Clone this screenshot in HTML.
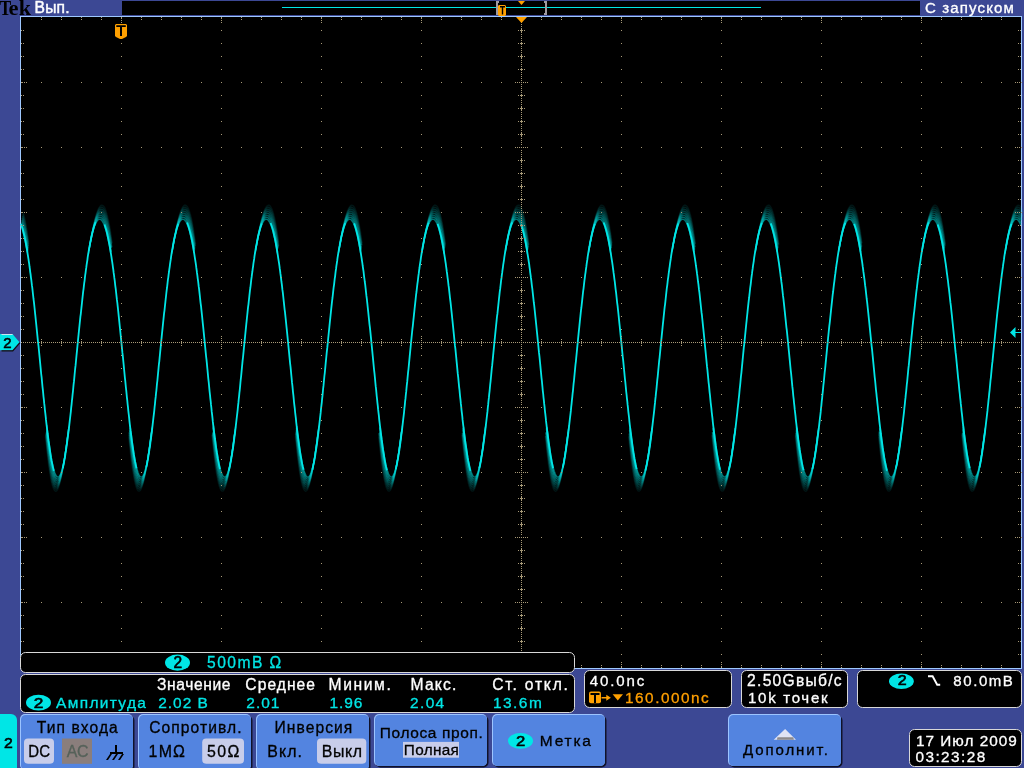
<!DOCTYPE html>
<html><head><meta charset="utf-8"><style>
html,body{margin:0;padding:0;background:#3c4894;width:1024px;height:768px;overflow:hidden;}
svg{position:absolute;left:0;top:0;display:block;}
</style></head><body>
<svg width="1024" height="768" viewBox="0 0 1024 768" shape-rendering="auto">
<rect x='122' y='1' width='798' height='14' fill='#000'/>
<rect x='282' y='7' width='479' height='1' fill='#00e6e6'/>
<path d='M496 1h3v2h-1v10h1v2h-3z' fill='#a09aa0'/>
<path d='M545 1h2v14h-3v-2h1v-10h-1v-2h1z' fill='#a09aa0'/>
<path d='M499 5h6l1 1v9l-1 1h-6l-1-1v-9z' fill='#ffa000'/>
<path d='M500 6h5v1.5h-1.8v7h-1.4v-7h-1.8z' fill='#000'/>
<path d='M518 1h7l-3.5 4z' fill='#ffa000'/>
<rect x='20' y='16' width='1002' height='653' fill='#9ec8ff'/>
<rect x='21' y='17' width='1000' height='651' fill='#000'/>
<g fill='none' stroke='#00e6e6' stroke-opacity='0.5' stroke-width='1.4'><polyline points='21.0 225.3 21.9 227.8 22.6 230.2 23.2 232.6 23.9 235.0 24.4 237.5 24.9 239.9 25.4 242.4 25.9 244.9 26.4 247.4 26.8 249.9 27.3 252.4'/><polyline points='46.7 425.0 47.1 428.4 47.6 431.8 48.0 435.2 48.4 438.7 48.9 442.1 49.4 445.5 49.9 449.0 50.4 452.4 51.0 455.8 51.6 459.3 52.2 462.6 53.0 466.0 53.8 469.3 54.7 472.4 55.7 474.9 56.7 476.4 57.7 477.1 58.7 476.9 59.7 475.8 60.7 473.8 61.7 470.9 62.7 467.1 63.5 463.3 64.3 459.6 64.9 455.8 65.5 452.2 66.1 448.5 66.6 444.9 67.1 441.3 67.6 437.7 68.1 434.2 68.5 430.6 68.9 427.1'/><polyline points='88.4 253.9 88.8 251.5 89.2 249.0 89.7 246.6 90.1 244.2 90.6 241.8 91.1 239.5 91.6 237.2 92.1 234.9 92.7 232.6 93.3 230.4 93.9 228.2 94.6 226.1 95.5 224.0 96.4 222.0 97.4 220.5 98.4 219.6 99.4 219.2 100.4 219.3 101.4 220.1 102.4 221.3 103.4 223.2 104.4 225.6 105.2 228.0 106.0 230.4 106.6 232.8 107.2 235.3 107.8 237.7 108.3 240.2 108.8 242.6 109.3 245.1 109.7 247.6 110.2 250.1 110.6 252.6'/><polyline points='130.1 425.3 130.5 428.7 130.9 432.2 131.4 435.6 131.8 439.0 132.3 442.4 132.8 445.9 133.3 449.3 133.8 452.8 134.4 456.2 135.0 459.6 135.6 463.0 136.3 466.3 137.2 469.6 138.1 472.7 139.1 475.1 140.1 476.6 141.1 477.1 142.1 476.8 143.1 475.6 144.1 473.5 145.1 470.5 146.1 466.7 147.0 462.9 147.7 459.1 148.3 455.4 148.9 451.8 149.5 448.1 150.0 444.5 150.5 440.9 151.0 437.3 151.4 433.8 151.9 430.3 152.3 426.8'/><polyline points='171.8 253.7 172.2 251.2 172.6 248.8 173.0 246.3 173.5 244.0 174.0 241.6 174.4 239.2 175.0 236.9 175.5 234.6 176.1 232.4 176.7 230.1 177.3 227.9 178.1 225.8 178.9 223.8 179.8 221.8 180.8 220.4 181.8 219.5 182.8 219.2 183.8 219.4 184.8 220.2 185.8 221.5 186.8 223.4 187.8 225.9 188.7 228.3 189.4 230.7 190.0 233.2 190.6 235.6 191.2 238.0 191.7 240.5 192.2 242.9 192.7 245.4 193.1 247.9 193.6 250.4 194.0 253.0'/><polyline points='213.5 425.8 213.9 429.2 214.3 432.6 214.7 436.0 215.2 439.4 215.7 442.9 216.1 446.3 216.6 449.8 217.2 453.2 217.8 456.6 218.4 460.0 219.0 463.4 219.8 466.7 220.6 470.0 221.6 473.0 222.6 475.3 223.6 476.7 224.6 477.2 225.6 476.7 226.6 475.4 227.6 473.2 228.6 470.0 229.6 466.2 230.4 462.4 231.1 458.6 231.7 454.9 232.3 451.3 232.9 447.6 233.4 444.0 233.9 440.4 234.4 436.9 234.8 433.3 235.2 429.8 235.7 426.3'/><polyline points='255.2 253.3 255.6 250.9 256.0 248.4 256.4 246.0 256.9 243.6 257.3 241.3 257.8 238.9 258.3 236.6 258.9 234.3 259.5 232.1 260.1 229.8 260.7 227.7 261.5 225.5 262.3 223.5 263.3 221.6 264.3 220.2 265.3 219.4 266.3 219.2 267.3 219.5 268.3 220.3 269.3 221.8 270.3 223.7 271.3 226.2 272.1 228.6 272.8 231.1 273.4 233.5 274.0 235.9 274.6 238.4 275.1 240.8 275.6 243.3 276.0 245.8 276.5 248.3 276.9 250.8 277.4 253.3'/><polyline points='296.8 426.2 297.3 429.6 297.7 433.1 298.1 436.5 298.6 439.9 299.0 443.3 299.5 446.8 300.0 450.2 300.6 453.7 301.2 457.1 301.8 460.5 302.4 463.9 303.2 467.2 304.0 470.4 305.0 473.4 306.0 475.6 307.0 476.8 308.0 477.2 309.0 476.6 310.0 475.1 311.0 472.8 312.0 469.5 313.0 465.7 313.8 461.9 314.5 458.2 315.1 454.5 315.7 450.8 316.3 447.2 316.8 443.5 317.3 440.0 317.7 436.4 318.2 432.9 318.6 429.3 319.0 425.8'/><polyline points='338.5 253.0 338.9 250.5 339.4 248.1 339.8 245.7 340.3 243.3 340.7 241.0 341.2 238.6 341.7 236.3 342.3 234.0 342.9 231.8 343.5 229.5 344.2 227.4 344.9 225.3 345.8 223.2 346.8 221.4 347.8 220.1 348.8 219.3 349.8 219.2 350.8 219.5 351.8 220.5 352.8 222.0 353.8 224.0 354.7 226.5 355.5 228.9 356.2 231.3 356.8 233.8 357.4 236.2 357.9 238.6 358.5 241.1 359.0 243.6 359.4 246.0 359.9 248.5 360.3 251.1 360.7 253.6'/><polyline points='380.2 426.6 380.6 430.0 381.0 433.4 381.5 436.9 381.9 440.3 382.4 443.7 382.9 447.2 383.4 450.6 384.0 454.0 384.5 457.5 385.2 460.9 385.8 464.2 386.6 467.6 387.5 470.8 388.5 473.7 389.5 475.7 390.5 476.9 391.5 477.1 392.5 476.5 393.5 474.9 394.5 472.5 395.5 469.2 396.4 465.3 397.2 461.5 397.9 457.8 398.5 454.1 399.1 450.4 399.6 446.8 400.1 443.2 400.6 439.6 401.1 436.0 401.6 432.5 402.0 429.0 402.4 425.5'/><polyline points='421.9 252.8 422.3 250.3 422.7 247.9 423.2 245.5 423.6 243.1 424.1 240.7 424.6 238.4 425.1 236.1 425.7 233.8 426.2 231.5 426.9 229.3 427.5 227.2 428.3 225.1 429.2 223.0 430.2 221.2 431.2 220.0 432.2 219.3 433.2 219.2 434.2 219.6 435.2 220.6 436.2 222.1 437.2 224.2 438.1 226.7 438.9 229.1 439.6 231.5 440.2 234.0 440.8 236.4 441.3 238.9 441.8 241.3 442.3 243.8 442.8 246.3 443.2 248.8 443.7 251.3 444.1 253.8'/><polyline points='463.6 426.9 464.0 430.3 464.4 433.7 464.8 437.2 465.3 440.6 465.8 444.0 466.3 447.5 466.8 450.9 467.3 454.3 467.9 457.8 468.5 461.2 469.2 464.5 470.0 467.8 470.9 471.0 471.9 473.9 472.9 475.9 473.9 476.9 474.9 477.1 475.9 476.4 476.9 474.7 477.9 472.2 478.9 468.8 479.8 465.0 480.6 461.2 481.3 457.5 481.9 453.8 482.5 450.1 483.0 446.5 483.5 442.9 484.0 439.3 484.5 435.8 484.9 432.2 485.3 428.7 485.8 425.2'/><polyline points='505.2 252.6 505.7 250.1 506.1 247.7 506.5 245.3 507.0 242.9 507.5 240.5 507.9 238.2 508.5 235.9 509.0 233.6 509.6 231.4 510.2 229.2 510.9 227.0 511.7 224.9 512.6 222.9 513.6 221.1 514.6 219.9 515.6 219.3 516.6 219.2 517.6 219.7 518.6 220.7 519.6 222.3 520.6 224.4 521.5 226.9 522.3 229.3 522.9 231.7 523.6 234.1 524.1 236.6 524.7 239.0 525.2 241.5 525.7 244.0 526.1 246.4 526.6 248.9 527.0 251.5 527.4 254.0'/><polyline points='546.9 427.2 547.3 430.6 547.8 434.0 548.2 437.4 548.7 440.9 549.1 444.3 549.6 447.7 550.1 451.2 550.7 454.6 551.3 458.0 551.9 461.4 552.6 464.8 553.4 468.1 554.3 471.3 555.3 474.1 556.3 476.0 557.3 477.0 558.3 477.1 559.3 476.3 560.3 474.6 561.3 472.0 562.3 468.6 563.2 464.7 563.9 461.0 564.6 457.2 565.2 453.5 565.8 449.9 566.3 446.3 566.9 442.7 567.3 439.1 567.8 435.5 568.3 432.0 568.7 428.5 569.1 425.0'/><polyline points='588.6 252.4 589.0 249.9 589.4 247.5 589.9 245.1 590.3 242.7 590.8 240.4 591.3 238.0 591.8 235.7 592.4 233.5 593.0 231.2 593.6 229.0 594.3 226.8 595.1 224.8 596.0 222.8 597.0 221.0 598.0 219.9 599.0 219.3 600.0 219.2 601.0 219.7 602.0 220.8 603.0 222.4 604.0 224.6 604.9 227.0 605.6 229.5 606.3 231.9 606.9 234.3 607.5 236.7 608.0 239.2 608.5 241.7 609.0 244.1 609.5 246.6 609.9 249.1 610.4 251.6 610.8 254.2'/><polyline points='630.3 427.4 630.7 430.8 631.1 434.2 631.5 437.7 632.0 441.1 632.5 444.5 633.0 448.0 633.5 451.4 634.1 454.8 634.6 458.2 635.3 461.6 636.0 465.0 636.7 468.3 637.6 471.5 638.6 474.2 639.6 476.1 640.6 477.0 641.6 477.1 642.6 476.2 643.6 474.5 644.6 471.8 645.6 468.3 646.5 464.5 647.3 460.7 648.0 457.0 648.6 453.3 649.2 449.7 649.7 446.0 650.2 442.4 650.7 438.8 651.2 435.3 651.6 431.7 652.0 428.2'/><polyline points='671.9 252.2 672.4 249.8 672.8 247.4 673.2 245.0 673.7 242.6 674.2 240.2 674.7 237.9 675.2 235.6 675.7 233.3 676.3 231.1 677.0 228.9 677.7 226.7 678.4 224.6 679.3 222.6 680.3 220.9 681.3 219.8 682.3 219.2 683.3 219.2 684.3 219.8 685.3 220.9 686.3 222.5 687.3 224.7 688.2 227.2 689.0 229.6 689.7 232.0 690.3 234.5 690.8 236.9 691.4 239.3 691.9 241.8 692.4 244.3 692.8 246.8 693.3 249.3 693.7 251.8'/><polyline points='713.6 427.6 714.0 431.0 714.5 434.4 714.9 437.9 715.4 441.3 715.8 444.7 716.3 448.2 716.9 451.6 717.4 455.0 718.0 458.5 718.6 461.9 719.3 465.2 720.1 468.5 721.0 471.7 722.0 474.3 723.0 476.1 724.0 477.0 725.0 477.0 726.0 476.1 727.0 474.3 728.0 471.6 729.0 468.1 729.9 464.2 730.7 460.5 731.3 456.8 732.0 453.1 732.5 449.4 733.1 445.8 733.6 442.2 734.0 438.6 734.5 435.1 735.0 431.5 735.4 428.0'/><polyline points='755.3 252.1 755.7 249.6 756.1 247.2 756.6 244.8 757.0 242.4 757.5 240.1 758.0 237.7 758.5 235.4 759.1 233.2 759.7 230.9 760.3 228.7 761.0 226.6 761.8 224.5 762.7 222.5 763.7 220.9 764.7 219.8 765.7 219.2 766.7 219.2 767.7 219.8 768.7 221.0 769.7 222.6 770.7 224.9 771.6 227.3 772.3 229.8 773.0 232.2 773.6 234.6 774.2 237.1 774.7 239.5 775.2 242.0 775.7 244.4 776.2 246.9 776.6 249.4 777.1 251.9'/><polyline points='797.0 427.8 797.4 431.2 797.8 434.7 798.2 438.1 798.7 441.5 799.2 445.0 799.7 448.4 800.2 451.8 800.8 455.3 801.4 458.7 802.0 462.1 802.7 465.4 803.5 468.7 804.4 471.9 805.4 474.5 806.4 476.2 807.4 477.1 808.4 477.0 809.4 476.0 810.4 474.2 811.4 471.4 812.4 467.8 813.3 464.0 814.0 460.2 814.7 456.5 815.3 452.8 815.9 449.2 816.4 445.6 816.9 442.0 817.4 438.4 817.9 434.8 818.3 431.3 818.7 427.8'/><polyline points='838.6 251.9 839.0 249.5 839.5 247.1 839.9 244.7 840.4 242.3 840.9 239.9 841.4 237.6 841.9 235.3 842.4 233.0 843.0 230.8 843.7 228.6 844.4 226.4 845.2 224.4 846.1 222.4 847.1 220.8 848.1 219.7 849.1 219.2 850.1 219.3 851.1 219.9 852.1 221.0 853.1 222.8 854.1 225.1 855.0 227.5 855.7 229.9 856.4 232.3 857.0 234.8 857.6 237.2 858.1 239.7 858.6 242.1 859.1 244.6 859.5 247.1 860.0 249.6 860.4 252.1'/><polyline points='880.3 428.0 880.7 431.5 881.1 434.9 881.6 438.3 882.1 441.7 882.5 445.2 883.0 448.6 883.6 452.1 884.1 455.5 884.7 458.9 885.4 462.3 886.1 465.6 886.9 468.9 887.8 472.1 888.8 474.6 889.8 476.3 890.8 477.1 891.8 477.0 892.8 475.9 893.8 474.0 894.8 471.2 895.8 467.6 896.7 463.7 897.4 460.0 898.1 456.3 898.7 452.6 899.2 448.9 899.8 445.3 900.3 441.7 900.7 438.1 901.2 434.6 901.7 431.1 902.1 427.5'/><polyline points='922.0 251.8 922.4 249.3 922.8 246.9 923.3 244.5 923.7 242.1 924.2 239.8 924.7 237.4 925.2 235.1 925.8 232.9 926.4 230.6 927.1 228.4 927.8 226.3 928.6 224.2 929.5 222.3 930.5 220.7 931.5 219.7 932.5 219.2 933.5 219.3 934.5 219.9 935.5 221.2 936.5 222.9 937.5 225.2 938.3 227.7 939.1 230.1 939.7 232.5 940.4 235.0 940.9 237.4 941.4 239.8 941.9 242.3 942.4 244.8 942.9 247.3 943.3 249.8 943.8 252.3'/><polyline points='963.2 424.9 963.7 428.3 964.1 431.7 964.5 435.1 964.9 438.6 965.4 442.0 965.9 445.4 966.4 448.9 966.9 452.3 967.5 455.7 968.1 459.2 968.7 462.5 969.5 465.9 970.3 469.2 971.2 472.3 972.2 474.8 973.2 476.4 974.2 477.1 975.2 476.9 976.2 475.8 977.2 473.8 978.2 471.0 979.2 467.2 980.0 463.4 980.8 459.7 981.4 456.0 982.0 452.3 982.6 448.7 983.1 445.0 983.6 441.4 984.1 437.9 984.6 434.3 985.0 430.8 985.4 427.3'/><polyline points='1004.9 254.0 1005.3 251.6 1005.7 249.1 1006.2 246.7 1006.6 244.3 1007.1 241.9 1007.6 239.6 1008.1 237.3 1008.6 235.0 1009.2 232.7 1009.8 230.5 1010.4 228.3 1011.1 226.1 1012.0 224.1 1012.9 222.1 1013.9 220.6 1014.9 219.6 1015.9 219.2 1016.9 219.3 1017.9 220.0 1018.9 221.3 1019.9 223.1 1020.9 225.5'/></g>
<g fill='none' stroke='#00e6e6' stroke-opacity='0.45' stroke-width='1.4'><polyline points='21.3 223.4 22.1 225.9 22.9 228.3 23.5 230.8 24.1 233.2 24.6 235.6 25.1 238.1 25.6 240.6 26.1 243.1 26.6 245.6 27.0 248.1 27.4 250.6'/><polyline points='46.9 429.5 47.3 432.9 47.7 436.4 48.1 439.8 48.6 443.2 49.1 446.6 49.5 450.1 50.1 453.5 50.6 456.9 51.2 460.3 51.8 463.7 52.5 467.1 53.3 470.4 54.1 473.5 55.1 476.3 56.1 478.1 57.1 479.0 58.1 479.1 59.1 478.1 60.1 476.3 61.1 473.6 62.1 470.0 63.0 466.2 63.8 462.5 64.5 458.8 65.1 455.1 65.6 451.4 66.2 447.8 66.7 444.2 67.2 440.6 67.6 437.1 68.1 433.6 68.5 430.0 68.9 426.6'/><polyline points='88.9 251.0 89.3 248.5 89.7 246.1 90.2 243.7 90.6 241.3 91.1 238.9 91.6 236.5 92.1 234.2 92.7 231.9 93.3 229.7 93.9 227.5 94.6 225.3 95.3 223.2 96.2 221.1 97.2 219.3 98.2 218.0 99.2 217.3 100.2 217.2 101.2 217.6 102.2 218.6 103.2 220.2 104.2 222.3 105.1 224.8 105.9 227.2 106.5 229.7 107.1 232.1 107.7 234.5 108.2 237.0 108.7 239.5 109.2 241.9 109.7 244.4 110.1 246.9 110.5 249.5 110.9 252.0'/><polyline points='130.0 428.0 130.4 431.4 130.8 434.8 131.3 438.2 131.7 441.7 132.2 445.1 132.6 448.5 133.1 452.0 133.7 455.4 134.2 458.8 134.8 462.2 135.5 465.6 136.2 468.9 137.0 472.1 138.0 475.2 139.0 477.4 140.0 478.7 141.0 479.2 142.0 478.7 143.0 477.2 144.0 474.9 145.0 471.7 146.0 467.8 146.8 464.1 147.5 460.3 148.1 456.6 148.7 453.0 149.3 449.4 149.8 445.7 150.3 442.2 150.8 438.6 151.2 435.1 151.7 431.5 152.1 428.0'/><polyline points='172.0 252.0 172.5 249.5 172.9 247.1 173.3 244.7 173.8 242.3 174.2 239.9 174.7 237.5 175.2 235.2 175.8 232.9 176.3 230.6 176.9 228.4 177.6 226.2 178.3 224.1 179.1 222.0 180.1 220.0 181.1 218.5 182.1 217.6 183.1 217.2 184.1 217.4 185.1 218.1 186.1 219.4 187.1 221.3 188.1 223.8 188.9 226.2 189.6 228.7 190.2 231.1 190.8 233.5 191.3 236.0 191.9 238.5 192.3 240.9 192.8 243.4 193.3 245.9 193.7 248.4 194.1 251.0'/><polyline points='213.2 426.6 213.6 430.0 214.0 433.4 214.4 436.8 214.9 440.3 215.3 443.7 215.8 447.1 216.3 450.6 216.8 454.0 217.3 457.4 217.9 460.8 218.5 464.2 219.2 467.6 220.0 470.8 220.9 474.0 221.9 476.6 222.9 478.3 223.9 479.1 224.9 479.0 225.9 477.9 226.9 476.0 227.9 473.2 228.9 469.5 229.8 465.7 230.5 461.9 231.2 458.2 231.8 454.5 232.4 450.9 232.9 447.3 233.4 443.7 233.9 440.1 234.3 436.6 234.8 433.0 235.2 429.5'/><polyline points='255.6 250.6 256.0 248.1 256.4 245.7 256.9 243.3 257.4 240.9 257.8 238.5 258.3 236.2 258.9 233.9 259.4 231.6 260.0 229.3 260.6 227.1 261.3 225.0 262.1 222.9 263.0 220.8 264.0 219.1 265.0 217.9 266.0 217.3 267.0 217.2 268.0 217.7 269.0 218.8 270.0 220.5 271.0 222.7 271.8 225.1 272.6 227.6 273.3 230.0 273.9 232.4 274.4 234.9 275.0 237.3 275.4 239.8 275.9 242.3 276.4 244.8 276.8 247.3 277.2 249.8 277.6 252.3'/><polyline points='296.7 428.5 297.1 431.9 297.5 435.3 298.0 438.7 298.4 442.1 298.9 445.6 299.4 449.0 299.9 452.4 300.4 455.9 301.0 459.3 301.6 462.7 302.2 466.0 303.0 469.4 303.8 472.6 304.8 475.6 305.8 477.7 306.8 478.9 307.8 479.1 308.8 478.5 309.8 477.0 310.8 474.5 311.8 471.2 312.7 467.3 313.5 463.6 314.2 459.8 314.9 456.1 315.4 452.5 316.0 448.9 316.5 445.3 317.0 441.7 317.5 438.1 317.9 434.6 318.4 431.1 318.8 427.6'/><polyline points='338.7 251.7 339.2 249.2 339.6 246.8 340.0 244.3 340.5 242.0 340.9 239.6 341.4 237.2 341.9 234.9 342.5 232.6 343.1 230.3 343.7 228.1 344.3 225.9 345.1 223.8 345.9 221.7 346.9 219.8 347.9 218.3 348.9 217.5 349.9 217.2 350.9 217.4 351.9 218.3 352.9 219.7 353.9 221.7 354.8 224.1 355.6 226.6 356.3 229.0 356.9 231.4 357.5 233.9 358.1 236.3 358.6 238.8 359.0 241.3 359.5 243.7 360.0 246.2 360.4 248.8 360.8 251.3'/><polyline points='379.9 427.1 380.3 430.5 380.7 433.9 381.1 437.3 381.6 440.7 382.0 444.1 382.5 447.6 383.0 451.0 383.5 454.4 384.0 457.9 384.6 461.3 385.3 464.6 386.0 468.0 386.8 471.2 387.7 474.4 388.7 476.9 389.7 478.5 390.7 479.1 391.7 478.9 392.7 477.7 393.7 475.7 394.7 472.7 395.7 468.9 396.5 465.1 397.3 461.4 397.9 457.7 398.5 454.0 399.1 450.4 399.6 446.8 400.1 443.2 400.6 439.6 401.1 436.1 401.5 432.5 401.9 429.0'/><polyline points='421.9 252.7 422.3 250.2 422.7 247.8 423.2 245.4 423.6 243.0 424.1 240.6 424.5 238.2 425.0 235.9 425.6 233.6 426.1 231.3 426.7 229.0 427.4 226.8 428.1 224.7 428.8 222.6 429.8 220.6 430.8 218.9 431.8 217.8 432.8 217.2 433.8 217.2 434.8 217.8 435.8 219.0 436.8 220.7 437.7 223.0 438.6 225.5 439.3 227.9 440.0 230.4 440.6 232.8 441.1 235.2 441.7 237.7 442.2 240.2 442.6 242.6 443.1 245.1 443.5 247.7 443.9 250.2 444.3 252.7'/><polyline points='463.4 429.0 463.8 432.4 464.2 435.8 464.7 439.2 465.1 442.6 465.6 446.1 466.1 449.5 466.6 452.9 467.1 456.4 467.7 459.8 468.3 463.2 469.0 466.5 469.7 469.8 470.6 473.0 471.6 475.9 472.6 477.9 473.6 479.0 474.6 479.1 475.6 478.4 476.6 476.7 477.6 474.1 478.6 470.7 479.5 466.8 480.3 463.1 481.0 459.3 481.6 455.7 482.2 452.0 482.7 448.4 483.2 444.8 483.7 441.2 484.2 437.7 484.6 434.1 485.1 430.6 485.5 427.1'/><polyline points='505.4 251.3 505.8 248.9 506.3 246.5 506.7 244.0 507.2 241.6 507.6 239.3 508.1 236.9 508.6 234.6 509.2 232.3 509.8 230.0 510.4 227.8 511.1 225.6 511.8 223.5 512.6 221.4 513.6 219.5 514.7 218.2 515.7 217.4 516.7 217.2 517.7 217.5 518.6 218.4 519.6 219.9 520.6 222.0 521.6 224.4 522.4 226.9 523.0 229.3 523.7 231.7 524.2 234.2 524.8 236.6 525.3 239.1 525.7 241.6 526.2 244.1 526.6 246.6 527.1 249.1 527.5 251.6'/><polyline points='546.6 427.5 547.0 430.9 547.4 434.3 547.8 437.7 548.2 441.2 548.7 444.6 549.2 448.0 549.7 451.5 550.2 454.9 550.8 458.3 551.3 461.7 552.0 465.1 552.7 468.4 553.5 471.7 554.5 474.7 555.5 477.1 556.5 478.6 557.5 479.2 558.5 478.8 559.5 477.5 560.5 475.3 561.5 472.3 562.5 468.4 563.3 464.6 564.0 460.9 564.6 457.2 565.2 453.5 565.8 449.9 566.3 446.3 566.8 442.7 567.3 439.1 567.8 435.6 568.2 432.0 568.6 428.5'/><polyline points='588.6 252.4 589.0 249.9 589.4 247.4 589.9 245.0 590.3 242.6 590.8 240.2 591.3 237.9 591.8 235.5 592.3 233.2 592.8 231.0 593.5 228.7 594.1 226.5 594.8 224.4 595.6 222.3 596.5 220.3 597.5 218.7 598.5 217.7 599.5 217.2 600.5 217.3 601.5 218.0 602.5 219.2 603.5 221.0 604.5 223.4 605.4 225.9 606.1 228.3 606.7 230.7 607.3 233.2 607.9 235.6 608.4 238.1 608.9 240.5 609.3 243.0 609.8 245.5 610.2 248.0 610.6 250.6'/><polyline points='630.1 429.5 630.5 432.9 631.0 436.3 631.4 439.7 631.8 443.1 632.3 446.6 632.8 450.0 633.3 453.4 633.8 456.9 634.4 460.3 635.0 463.7 635.7 467.0 636.5 470.3 637.4 473.5 638.4 476.2 639.3 478.1 640.3 479.0 641.3 479.1 642.3 478.2 643.4 476.4 644.4 473.7 645.4 470.1 646.3 466.3 647.0 462.5 647.7 458.8 648.3 455.1 648.9 451.5 649.4 447.9 649.9 444.3 650.4 440.7 650.9 437.2 651.3 433.6 651.8 430.1 652.2 426.6'/><polyline points='672.1 251.0 672.5 248.5 673.0 246.1 673.4 243.7 673.9 241.3 674.4 238.9 674.8 236.6 675.4 234.3 675.9 232.0 676.5 229.7 677.1 227.5 677.8 225.3 678.6 223.2 679.4 221.2 680.4 219.3 681.4 218.0 682.4 217.3 683.4 217.2 684.4 217.6 685.4 218.6 686.4 220.2 687.4 222.3 688.3 224.8 689.1 227.2 689.8 229.6 690.4 232.1 690.9 234.5 691.5 237.0 692.0 239.4 692.5 241.9 692.9 244.4 693.3 246.9 693.8 249.4 694.2 252.0'/><polyline points='713.3 428.0 713.7 431.4 714.1 434.8 714.5 438.2 714.9 441.6 715.4 445.0 715.9 448.5 716.4 451.9 716.9 455.3 717.5 458.8 718.1 462.2 718.7 465.5 719.4 468.8 720.3 472.1 721.2 475.1 722.2 477.4 723.2 478.7 724.2 479.2 725.2 478.7 726.2 477.3 727.2 475.0 728.2 471.8 729.2 467.9 730.0 464.1 730.7 460.4 731.4 456.7 732.0 453.0 732.5 449.4 733.0 445.8 733.5 442.2 734.0 438.7 734.5 435.1 734.9 431.6 735.3 428.1'/><polyline points='755.3 252.0 755.7 249.6 756.1 247.1 756.5 244.7 757.0 242.3 757.5 239.9 758.0 237.6 758.5 235.2 759.0 232.9 759.6 230.7 760.2 228.4 760.8 226.2 761.5 224.1 762.4 222.0 763.3 220.1 764.3 218.5 765.3 217.6 766.3 217.2 767.3 217.3 768.3 218.1 769.3 219.4 770.3 221.3 771.3 223.8 772.1 226.2 772.8 228.6 773.5 231.1 774.0 233.5 774.6 236.0 775.1 238.4 775.6 240.9 776.0 243.4 776.5 245.9 776.9 248.4 777.3 250.9'/><polyline points='796.4 426.6 796.8 430.0 797.2 433.4 797.7 436.8 798.1 440.2 798.5 443.6 799.0 447.1 799.5 450.5 800.0 453.9 800.6 457.4 801.1 460.8 801.8 464.1 802.5 467.5 803.2 470.8 804.1 473.9 805.1 476.5 806.1 478.3 807.1 479.1 808.1 479.0 809.1 478.0 810.1 476.0 811.1 473.2 812.1 469.5 813.0 465.7 813.8 462.0 814.4 458.3 815.0 454.6 815.6 451.0 816.1 447.4 816.6 443.8 817.1 440.2 817.6 436.6 818.0 433.1 818.5 429.6'/><polyline points='838.8 250.6 839.2 248.2 839.7 245.8 840.1 243.3 840.6 241.0 841.1 238.6 841.6 236.2 842.1 233.9 842.6 231.6 843.2 229.4 843.9 227.2 844.5 225.0 845.3 222.9 846.2 220.9 847.2 219.1 848.2 217.9 849.2 217.3 850.2 217.2 851.2 217.7 852.2 218.8 853.2 220.4 854.2 222.6 855.1 225.1 855.8 227.5 856.5 230.0 857.1 232.4 857.7 234.8 858.2 237.3 858.7 239.8 859.2 242.2 859.6 244.7 860.0 247.2 860.5 249.8 860.9 252.3'/><polyline points='880.0 428.4 880.4 431.8 880.8 435.2 881.2 438.7 881.6 442.1 882.1 445.5 882.6 448.9 883.1 452.4 883.6 455.8 884.2 459.2 884.8 462.6 885.5 466.0 886.2 469.3 887.0 472.5 888.0 475.5 889.0 477.6 890.0 478.8 891.0 479.1 892.0 478.5 893.0 477.0 894.0 474.6 895.0 471.2 896.0 467.4 896.8 463.6 897.5 459.9 898.1 456.2 898.7 452.5 899.2 448.9 899.7 445.3 900.2 441.7 900.7 438.2 901.2 434.6 901.6 431.1 902.0 427.6'/><polyline points='922.0 251.7 922.4 249.2 922.8 246.8 923.2 244.4 923.7 242.0 924.2 239.6 924.7 237.3 925.2 234.9 925.7 232.6 926.3 230.4 926.9 228.1 927.6 225.9 928.3 223.8 929.1 221.7 930.1 219.8 931.1 218.4 932.1 217.5 933.1 217.2 934.1 217.4 935.1 218.2 936.1 219.6 937.1 221.6 938.1 224.1 938.8 226.5 939.5 229.0 940.2 231.4 940.8 233.8 941.3 236.3 941.8 238.7 942.3 241.2 942.7 243.7 943.2 246.2 943.6 248.7 944.0 251.3'/><polyline points='963.1 427.0 963.5 430.4 963.9 433.8 964.3 437.2 964.8 440.7 965.2 444.1 965.7 447.5 966.2 451.0 966.7 454.4 967.3 457.8 967.9 461.2 968.5 464.6 969.2 467.9 970.0 471.2 970.9 474.3 971.9 476.8 972.9 478.4 973.9 479.1 974.9 478.9 975.9 477.8 976.9 475.7 977.9 472.8 978.9 469.0 979.8 465.2 980.5 461.4 981.1 457.7 981.8 454.1 982.3 450.4 982.8 446.8 983.3 443.2 983.8 439.7 984.3 436.1 984.7 432.6 985.2 429.1'/><polyline points='1005.1 252.7 1005.5 250.3 1006.0 247.8 1006.4 245.4 1006.8 243.0 1007.3 240.6 1007.8 238.2 1008.3 235.9 1008.8 233.6 1009.4 231.3 1010.0 229.1 1010.6 226.9 1011.3 224.7 1012.1 222.6 1013.0 220.6 1014.0 218.9 1015.0 217.8 1016.0 217.2 1017.0 217.2 1018.0 217.8 1019.0 219.0 1020.0 220.7 1021.0 223.0'/></g>
<g fill='none' stroke='#00e6e6' stroke-opacity='0.38' stroke-width='1.4'><polyline points='21.6 221.6 22.4 224.0 23.1 226.5 23.7 228.9 24.3 231.4 24.9 233.8 25.4 236.3 25.8 238.8 26.3 241.3 26.7 243.8 27.1 246.3 27.5 248.8 27.9 251.4'/><polyline points='46.6 430.7 47.0 434.1 47.4 437.5 47.9 440.9 48.3 444.3 48.7 447.7 49.2 451.2 49.7 454.6 50.2 458.0 50.8 461.4 51.4 464.8 52.0 468.2 52.8 471.5 53.6 474.7 54.6 477.6 55.6 479.7 56.6 480.9 57.6 481.1 58.6 480.4 59.6 478.8 60.6 476.3 61.6 472.9 62.5 469.0 63.3 465.3 64.0 461.6 64.6 457.9 65.2 454.3 65.7 450.6 66.3 447.0 66.8 443.5 67.2 439.9 67.7 436.4 68.1 432.9 68.6 429.4'/><polyline points='89.0 250.4 89.4 247.9 89.8 245.5 90.3 243.0 90.7 240.6 91.2 238.2 91.7 235.9 92.2 233.5 92.7 231.2 93.3 228.9 93.9 226.7 94.5 224.5 95.3 222.3 96.1 220.2 97.0 218.2 98.0 216.6 99.0 215.6 100.0 215.2 101.0 215.3 102.0 216.0 103.0 217.3 104.0 219.2 105.0 221.7 105.8 224.1 106.5 226.6 107.1 229.0 107.7 231.5 108.2 233.9 108.7 236.4 109.2 238.9 109.6 241.4 110.1 243.9 110.5 246.4 110.9 248.9 111.3 251.5'/><polyline points='130.0 430.8 130.4 434.2 130.8 437.6 131.2 441.0 131.6 444.5 132.1 447.9 132.6 451.3 133.0 454.7 133.6 458.2 134.1 461.6 134.7 465.0 135.4 468.3 136.1 471.6 137.0 474.8 137.9 477.8 138.9 479.8 139.9 480.9 140.9 481.1 141.9 480.4 142.9 478.7 143.9 476.2 145.0 472.7 145.9 468.9 146.6 465.1 147.3 461.4 148.0 457.7 148.5 454.1 149.1 450.5 149.6 446.9 150.1 443.3 150.6 439.8 151.0 436.2 151.5 432.7 151.9 429.2'/><polyline points='172.3 250.3 172.7 247.8 173.2 245.4 173.6 242.9 174.1 240.5 174.5 238.1 175.0 235.8 175.5 233.4 176.1 231.1 176.6 228.8 177.2 226.6 177.9 224.4 178.6 222.2 179.4 220.1 180.4 218.2 181.4 216.6 182.4 215.6 183.4 215.2 184.4 215.3 185.4 216.1 186.4 217.4 187.3 219.3 188.3 221.8 189.1 224.3 189.8 226.7 190.4 229.2 191.0 231.6 191.5 234.1 192.0 236.5 192.5 239.0 193.0 241.5 193.4 244.0 193.8 246.5 194.2 249.1'/><polyline points='212.9 427.6 213.3 431.0 213.7 434.4 214.1 437.8 214.5 441.2 215.0 444.6 215.4 448.1 215.9 451.5 216.4 454.9 216.9 458.3 217.5 461.7 218.1 465.1 218.7 468.5 219.5 471.8 220.3 475.0 221.3 477.9 222.3 479.9 223.3 481.0 224.3 481.1 225.3 480.3 226.3 478.6 227.3 476.0 228.3 472.5 229.2 468.7 230.0 464.9 230.7 461.2 231.3 457.6 231.9 453.9 232.4 450.3 232.9 446.7 233.4 443.1 233.9 439.6 234.4 436.1 234.8 432.5 235.2 429.1'/><polyline points='255.7 250.2 256.1 247.7 256.5 245.2 256.9 242.8 257.4 240.4 257.9 238.0 258.4 235.7 258.9 233.3 259.4 231.0 260.0 228.7 260.6 226.5 261.2 224.3 262.0 222.1 262.8 220.0 263.7 218.1 264.7 216.5 265.7 215.6 266.7 215.2 267.7 215.4 268.7 216.1 269.7 217.5 270.7 219.4 271.7 221.9 272.5 224.4 273.2 226.8 273.8 229.3 274.4 231.7 274.9 234.2 275.4 236.6 275.9 239.1 276.3 241.6 276.7 244.1 277.2 246.6 277.6 249.2'/><polyline points='296.3 427.7 296.7 431.1 297.1 434.5 297.5 437.9 297.9 441.4 298.3 444.8 298.8 448.2 299.2 451.6 299.7 455.1 300.3 458.5 300.8 461.9 301.4 465.3 302.1 468.6 302.8 471.9 303.7 475.1 304.7 478.0 305.7 479.9 306.7 481.0 307.7 481.1 308.7 480.3 309.7 478.5 310.7 475.9 311.7 472.4 312.6 468.5 313.4 464.8 314.0 461.1 314.7 457.4 315.2 453.8 315.8 450.2 316.3 446.6 316.8 443.0 317.3 439.4 317.7 435.9 318.1 432.4 318.6 428.9'/><polyline points='339.0 250.1 339.4 247.6 339.8 245.1 340.3 242.7 340.7 240.3 341.2 237.9 341.7 235.6 342.2 233.2 342.7 230.9 343.3 228.6 343.9 226.4 344.6 224.2 345.3 222.0 346.1 220.0 347.1 218.0 348.1 216.5 349.1 215.5 350.1 215.2 351.1 215.4 352.1 216.2 353.1 217.6 354.1 219.5 355.0 222.0 355.8 224.5 356.5 226.9 357.1 229.4 357.7 231.8 358.2 234.3 358.7 236.7 359.2 239.2 359.6 241.7 360.1 244.2 360.5 246.7 360.9 249.3'/><polyline points='379.6 427.9 380.0 431.3 380.4 434.7 380.8 438.1 381.2 441.5 381.7 444.9 382.1 448.3 382.6 451.8 383.1 455.2 383.6 458.6 384.2 462.0 384.8 465.4 385.4 468.8 386.2 472.0 387.0 475.2 388.0 478.1 389.0 480.0 390.0 481.0 391.0 481.1 392.0 480.2 393.0 478.5 394.0 475.8 395.0 472.2 395.9 468.4 396.7 464.7 397.4 461.0 398.0 457.3 398.6 453.6 399.1 450.0 399.6 446.4 400.1 442.9 400.6 439.3 401.0 435.8 401.5 432.3 401.9 428.8'/><polyline points='422.3 250.0 422.7 247.5 423.2 245.1 423.6 242.6 424.1 240.2 424.5 237.8 425.0 235.5 425.5 233.1 426.1 230.8 426.7 228.6 427.3 226.3 427.9 224.1 428.7 222.0 429.5 219.9 430.4 217.9 431.4 216.4 432.5 215.5 433.5 215.2 434.5 215.4 435.4 216.2 436.4 217.6 437.4 219.6 438.4 222.1 439.2 224.5 439.9 227.0 440.5 229.4 441.0 231.9 441.6 234.3 442.1 236.8 442.5 239.3 443.0 241.8 443.4 244.3 443.8 246.8 444.2 249.3'/><polyline points='462.9 428.0 463.3 431.4 463.7 434.8 464.1 438.2 464.5 441.6 465.0 445.0 465.4 448.5 465.9 451.9 466.4 455.3 466.9 458.7 467.5 462.1 468.1 465.5 468.8 468.9 469.5 472.1 470.4 475.3 471.4 478.1 472.4 480.0 473.4 481.0 474.4 481.1 475.4 480.2 476.4 478.4 477.4 475.7 478.4 472.1 479.3 468.3 480.0 464.5 480.7 460.8 481.3 457.2 481.9 453.5 482.5 449.9 483.0 446.3 483.5 442.7 483.9 439.2 484.4 435.7 484.8 432.2 485.2 428.7'/><polyline points='505.7 249.9 506.1 247.4 506.5 245.0 507.0 242.5 507.4 240.1 507.9 237.8 508.4 235.4 508.9 233.1 509.4 230.8 510.0 228.5 510.6 226.2 511.3 224.0 512.0 221.9 512.8 219.8 513.8 217.9 514.8 216.4 515.8 215.5 516.8 215.2 517.8 215.4 518.8 216.3 519.8 217.7 520.8 219.7 521.7 222.2 522.5 224.6 523.2 227.1 523.8 229.5 524.4 232.0 524.9 234.4 525.4 236.9 525.9 239.4 526.3 241.9 526.7 244.4 527.2 246.9 527.6 249.4'/><polyline points='546.3 428.1 546.7 431.5 547.1 434.9 547.5 438.3 547.9 441.7 548.3 445.1 548.8 448.6 549.2 452.0 549.7 455.4 550.3 458.8 550.8 462.2 551.5 465.6 552.1 469.0 552.9 472.2 553.7 475.4 554.7 478.2 555.7 480.1 556.7 481.0 557.7 481.1 558.7 480.2 559.7 478.3 560.7 475.6 561.7 472.0 562.6 468.2 563.4 464.4 564.1 460.7 564.7 457.1 565.2 453.4 565.8 449.8 566.3 446.2 566.8 442.6 567.3 439.1 567.7 435.6 568.1 432.1 568.6 428.6'/><polyline points='589.0 249.8 589.4 247.3 589.8 244.9 590.3 242.5 590.7 240.1 591.2 237.7 591.7 235.3 592.2 233.0 592.8 230.7 593.3 228.4 594.0 226.2 594.6 224.0 595.3 221.8 596.2 219.8 597.1 217.8 598.2 216.3 599.2 215.5 600.2 215.2 601.2 215.4 602.2 216.3 603.1 217.7 604.1 219.8 605.1 222.2 605.9 224.7 606.5 227.1 607.1 229.6 607.7 232.0 608.2 234.5 608.7 237.0 609.2 239.4 609.7 241.9 610.1 244.4 610.5 247.0 610.9 249.5'/><polyline points='629.6 428.2 630.0 431.6 630.4 435.0 630.8 438.4 631.2 441.8 631.7 445.2 632.1 448.7 632.6 452.1 633.1 455.5 633.6 458.9 634.2 462.3 634.8 465.7 635.5 469.1 636.2 472.3 637.1 475.5 638.1 478.3 639.1 480.1 640.1 481.0 641.1 481.0 642.1 480.1 643.1 478.3 644.1 475.5 645.1 471.9 646.0 468.1 646.7 464.3 647.4 460.6 648.0 456.9 648.6 453.3 649.1 449.7 649.6 446.1 650.1 442.5 650.6 439.0 651.0 435.5 651.5 431.9 651.9 428.5'/><polyline points='672.3 249.7 672.7 247.3 673.2 244.8 673.6 242.4 674.1 240.0 674.5 237.6 675.0 235.3 675.6 232.9 676.1 230.6 676.7 228.3 677.3 226.1 678.0 223.9 678.7 221.8 679.5 219.7 680.5 217.7 681.5 216.3 682.5 215.4 683.5 215.2 684.5 215.5 685.5 216.3 686.5 217.8 687.5 219.8 688.4 222.3 689.2 224.8 689.9 227.2 690.5 229.7 691.0 232.1 691.6 234.6 692.1 237.0 692.5 239.5 693.0 242.0 693.4 244.5 693.8 247.0 694.2 249.6'/><polyline points='712.9 428.3 713.3 431.7 713.7 435.1 714.1 438.5 714.5 441.9 715.0 445.3 715.4 448.8 715.9 452.2 716.4 455.6 716.9 459.0 717.5 462.4 718.1 465.8 718.8 469.2 719.6 472.4 720.4 475.6 721.4 478.3 722.4 480.2 723.4 481.1 724.4 481.0 725.4 480.1 726.4 478.2 727.4 475.4 728.4 471.8 729.3 467.9 730.1 464.2 730.7 460.5 731.4 456.8 731.9 453.2 732.5 449.6 733.0 446.0 733.5 442.4 733.9 438.9 734.4 435.4 734.8 431.8 735.2 428.4'/><polyline points='755.7 249.7 756.1 247.2 756.5 244.8 757.0 242.3 757.4 239.9 757.9 237.5 758.4 235.2 758.9 232.9 759.4 230.6 760.0 228.3 760.6 226.0 761.3 223.8 762.0 221.7 762.9 219.6 763.9 217.7 764.9 216.3 765.9 215.4 766.9 215.2 767.9 215.5 768.9 216.4 769.9 217.9 770.8 219.9 771.8 222.4 772.5 224.8 773.2 227.3 773.8 229.7 774.4 232.2 774.9 234.6 775.4 237.1 775.9 239.6 776.3 242.1 776.7 244.6 777.2 247.1 777.6 249.7'/><polyline points='796.3 428.4 796.7 431.8 797.1 435.2 797.5 438.6 797.9 442.0 798.3 445.4 798.8 448.9 799.3 452.3 799.8 455.7 800.3 459.1 800.9 462.5 801.5 465.9 802.1 469.3 802.9 472.5 803.8 475.7 804.8 478.4 805.8 480.2 806.8 481.1 807.8 481.0 808.8 480.0 809.8 478.1 810.8 475.3 811.8 471.6 812.7 467.8 813.4 464.1 814.1 460.4 814.7 456.7 815.3 453.1 815.8 449.5 816.3 445.9 816.8 442.3 817.3 438.8 817.7 435.2 818.1 431.7 818.6 428.2'/><polyline points='839.0 249.6 839.4 247.1 839.8 244.7 840.3 242.3 840.7 239.9 841.2 237.5 841.7 235.1 842.2 232.8 842.8 230.5 843.4 228.2 844.0 226.0 844.6 223.8 845.4 221.6 846.2 219.6 847.2 217.6 848.2 216.2 849.2 215.4 850.2 215.2 851.2 215.5 852.2 216.4 853.2 217.9 854.2 220.0 855.1 222.5 855.9 224.9 856.6 227.4 857.2 229.8 857.7 232.3 858.2 234.7 858.7 237.2 859.2 239.7 859.7 242.2 860.1 244.7 860.5 247.2 860.9 249.7'/><polyline points='879.6 428.5 880.0 431.9 880.4 435.3 880.8 438.7 881.2 442.1 881.7 445.5 882.1 449.0 882.6 452.4 883.1 455.8 883.6 459.2 884.2 462.6 884.8 466.0 885.5 469.4 886.2 472.6 887.1 475.8 888.1 478.5 889.1 480.2 890.1 481.1 891.1 481.0 892.1 480.0 893.1 478.1 894.1 475.2 895.1 471.5 896.0 467.7 896.8 464.0 897.4 460.3 898.0 456.6 898.6 453.0 899.1 449.4 899.6 445.8 900.1 442.2 900.6 438.7 901.0 435.1 901.5 431.6 901.9 428.1'/><polyline points='922.3 249.5 922.7 247.0 923.2 244.6 923.6 242.2 924.1 239.8 924.6 237.4 925.0 235.0 925.6 232.7 926.1 230.4 926.7 228.1 927.3 225.9 928.0 223.7 928.7 221.6 929.6 219.5 930.6 217.6 931.6 216.2 932.6 215.4 933.6 215.2 934.6 215.5 935.6 216.5 936.6 218.0 937.5 220.1 938.5 222.6 939.2 225.0 939.9 227.4 940.5 229.9 941.1 232.3 941.6 234.8 942.1 237.3 942.5 239.8 943.0 242.3 943.4 244.8 943.8 247.3 944.2 249.8'/><polyline points='962.9 428.6 963.3 432.0 963.7 435.4 964.1 438.8 964.5 442.2 965.0 445.7 965.4 449.1 965.9 452.5 966.4 455.9 967.0 459.4 967.5 462.8 968.2 466.1 968.8 469.5 969.6 472.7 970.5 475.9 971.5 478.5 972.5 480.3 973.5 481.1 974.5 481.0 975.5 479.9 976.5 478.0 977.5 475.1 978.5 471.4 979.4 467.6 980.1 463.8 980.8 460.1 981.4 456.5 981.9 452.8 982.5 449.2 983.0 445.6 983.5 442.1 983.9 438.5 984.4 435.0 984.8 431.5 985.2 428.0'/><polyline points='1005.7 249.4 1006.1 247.0 1006.5 244.5 1007.0 242.1 1007.4 239.7 1007.9 237.3 1008.4 235.0 1008.9 232.6 1009.5 230.3 1010.0 228.1 1010.7 225.8 1011.3 223.6 1012.1 221.5 1012.9 219.4 1013.9 217.5 1014.9 216.1 1015.9 215.4 1016.9 215.2 1017.9 215.5 1018.9 216.5 1019.9 218.1 1020.9 220.2'/></g>
<g fill='none' stroke='#00e6e6' stroke-opacity='0.32' stroke-width='1.4'><polyline points='21.9 219.7 22.7 222.2 23.4 224.6 24.0 227.1 24.6 229.5 25.1 232.0 25.6 234.5 26.0 237.0 26.5 239.4 26.9 242.0 27.3 244.5 27.7 247.0 28.1 249.6'/><polyline points='46.4 431.8 46.8 435.2 47.2 438.6 47.6 442.0 48.0 445.4 48.4 448.8 48.9 452.2 49.4 455.7 49.9 459.1 50.4 462.5 51.0 465.9 51.6 469.2 52.3 472.5 53.1 475.8 54.0 478.8 55.0 481.2 56.0 482.7 57.0 483.2 58.0 482.7 59.0 481.3 60.0 479.0 61.0 475.8 62.0 472.0 62.8 468.2 63.5 464.5 64.1 460.8 64.7 457.2 65.3 453.5 65.8 450.0 66.3 446.4 66.8 442.8 67.3 439.3 67.7 435.8 68.1 432.3 68.6 428.8'/><polyline points='89.1 249.9 89.5 247.4 89.9 244.9 90.3 242.5 90.8 240.1 91.2 237.7 91.7 235.3 92.2 232.9 92.7 230.6 93.3 228.3 93.9 226.0 94.5 223.8 95.2 221.6 95.9 219.4 96.8 217.4 97.8 215.4 98.8 214.1 99.8 213.3 100.8 213.2 101.8 213.6 102.8 214.6 103.8 216.2 104.8 218.5 105.6 220.9 106.4 223.4 107.0 225.8 107.6 228.3 108.1 230.8 108.7 233.2 109.1 235.7 109.6 238.2 110.0 240.7 110.4 243.2 110.8 245.7 111.2 248.3'/><polyline points='129.5 430.1 129.9 433.5 130.3 436.9 130.7 440.3 131.1 443.7 131.5 447.1 132.0 450.5 132.4 453.9 132.9 457.4 133.4 460.8 134.0 464.2 134.6 467.6 135.2 470.9 136.0 474.2 136.8 477.3 137.8 480.2 138.8 482.1 139.8 483.0 140.8 483.1 141.8 482.1 142.8 480.3 143.8 477.5 144.8 473.9 145.7 470.1 146.5 466.3 147.1 462.6 147.8 459.0 148.3 455.3 148.9 451.7 149.4 448.2 149.9 444.6 150.4 441.0 150.8 437.5 151.3 434.0 151.7 430.5'/><polyline points='172.6 248.6 173.0 246.2 173.4 243.7 173.9 241.3 174.3 238.9 174.8 236.5 175.3 234.1 175.8 231.7 176.3 229.4 176.9 227.1 177.5 224.9 178.2 222.6 178.9 220.5 179.7 218.4 180.6 216.4 181.6 214.7 182.6 213.7 183.6 213.2 184.6 213.3 185.6 214.0 186.6 215.3 187.6 217.2 188.6 219.7 189.3 222.2 190.0 224.6 190.6 227.1 191.2 229.6 191.7 232.0 192.2 234.5 192.7 237.0 193.1 239.5 193.5 242.0 194.0 244.5 194.4 247.0 194.7 249.6'/><polyline points='213.0 431.8 213.4 435.2 213.8 438.6 214.2 442.0 214.6 445.4 215.1 448.9 215.5 452.3 216.0 455.7 216.5 459.1 217.0 462.5 217.6 465.9 218.2 469.3 218.9 472.6 219.7 475.8 220.6 478.9 221.6 481.2 222.6 482.7 223.6 483.2 224.6 482.7 225.6 481.3 226.6 479.0 227.7 475.8 228.6 471.9 229.4 468.2 230.1 464.4 230.8 460.8 231.4 457.1 231.9 453.5 232.5 449.9 233.0 446.3 233.4 442.8 233.9 439.3 234.4 435.7 234.8 432.2'/><polyline points='255.7 249.9 256.1 247.4 256.5 244.9 257.0 242.5 257.4 240.0 257.9 237.6 258.4 235.3 258.9 232.9 259.4 230.6 259.9 228.2 260.5 226.0 261.1 223.7 261.8 221.5 262.6 219.4 263.4 217.3 264.4 215.4 265.5 214.1 266.5 213.3 267.5 213.2 268.5 213.6 269.4 214.6 270.4 216.3 271.4 218.5 272.3 221.0 273.0 223.4 273.7 225.9 274.3 228.3 274.8 230.8 275.3 233.3 275.8 235.7 276.2 238.2 276.7 240.7 277.1 243.3 277.5 245.8 277.9 248.3'/><polyline points='296.2 430.1 296.6 433.5 296.9 436.9 297.3 440.3 297.7 443.7 298.2 447.1 298.6 450.6 299.1 454.0 299.6 457.4 300.1 460.8 300.6 464.2 301.2 467.6 301.9 470.9 302.6 474.2 303.5 477.4 304.5 480.2 305.4 482.1 306.4 483.0 307.4 483.1 308.4 482.1 309.5 480.3 310.5 477.5 311.5 473.8 312.4 470.0 313.1 466.3 313.8 462.6 314.4 458.9 315.0 455.3 315.5 451.7 316.0 448.1 316.5 444.5 317.0 441.0 317.5 437.5 317.9 434.0 318.3 430.5'/><polyline points='339.2 248.6 339.6 246.1 340.1 243.7 340.5 241.2 341.0 238.8 341.4 236.4 341.9 234.1 342.4 231.7 343.0 229.4 343.5 227.1 344.1 224.8 344.8 222.6 345.5 220.4 346.3 218.3 347.2 216.3 348.2 214.7 349.3 213.6 350.3 213.2 351.3 213.3 352.3 214.0 353.2 215.4 354.2 217.3 355.2 219.8 356.0 222.2 356.7 224.7 357.3 227.1 357.9 229.6 358.4 232.1 358.9 234.5 359.3 237.0 359.8 239.5 360.2 242.0 360.6 244.5 361.0 247.1 361.4 249.6'/><polyline points='379.7 431.9 380.1 435.3 380.5 438.7 380.9 442.1 381.3 445.5 381.7 448.9 382.2 452.3 382.6 455.7 383.1 459.2 383.7 462.6 384.3 466.0 384.9 469.3 385.6 472.6 386.4 475.9 387.3 478.9 388.3 481.3 389.3 482.7 390.3 483.2 391.3 482.7 392.3 481.3 393.3 479.0 394.3 475.7 395.3 471.9 396.1 468.1 396.8 464.4 397.4 460.7 398.0 457.1 398.6 453.5 399.1 449.9 399.6 446.3 400.1 442.7 400.6 439.2 401.0 435.7 401.4 432.2'/><polyline points='422.4 249.8 422.8 247.3 423.2 244.9 423.6 242.4 424.1 240.0 424.5 237.6 425.0 235.2 425.5 232.9 426.0 230.5 426.6 228.2 427.2 225.9 427.8 223.7 428.5 221.5 429.2 219.4 430.1 217.3 431.1 215.4 432.1 214.1 433.1 213.3 434.1 213.2 435.1 213.6 436.1 214.7 437.1 216.3 438.1 218.5 438.9 221.0 439.7 223.5 440.3 225.9 440.9 228.4 441.4 230.8 441.9 233.3 442.4 235.8 442.9 238.3 443.3 240.8 443.7 243.3 444.1 245.8 444.5 248.4'/><polyline points='462.8 430.2 463.2 433.6 463.6 437.0 464.0 440.4 464.4 443.8 464.8 447.2 465.3 450.6 465.7 454.0 466.2 457.5 466.7 460.9 467.3 464.3 467.9 467.7 468.5 471.0 469.3 474.3 470.1 477.4 471.1 480.2 472.1 482.1 473.1 483.0 474.1 483.0 475.1 482.1 476.1 480.2 477.1 477.4 478.2 473.8 479.0 470.0 479.8 466.2 480.4 462.5 481.1 458.9 481.6 455.2 482.2 451.6 482.7 448.0 483.2 444.5 483.7 440.9 484.1 437.4 484.5 433.9 485.0 430.4'/><polyline points='505.9 248.6 506.3 246.1 506.7 243.6 507.2 241.2 507.6 238.8 508.1 236.4 508.6 234.0 509.1 231.7 509.6 229.4 510.2 227.1 510.8 224.8 511.5 222.6 512.2 220.4 513.0 218.3 513.9 216.3 514.9 214.7 515.9 213.6 516.9 213.2 517.9 213.3 518.9 214.1 519.9 215.4 520.9 217.3 521.9 219.8 522.6 222.3 523.3 224.7 523.9 227.2 524.5 229.6 525.0 232.1 525.5 234.6 526.0 237.1 526.4 239.6 526.8 242.1 527.2 244.6 527.6 247.1 528.0 249.7'/><polyline points='546.3 431.9 546.7 435.3 547.1 438.7 547.5 442.1 547.9 445.5 548.4 449.0 548.8 452.4 549.3 455.8 549.8 459.2 550.3 462.6 550.9 466.0 551.5 469.4 552.2 472.7 553.0 475.9 554.0 479.0 554.9 481.3 555.9 482.7 556.9 483.2 557.9 482.7 558.9 481.3 560.0 478.9 561.0 475.7 561.9 471.8 562.7 468.1 563.4 464.3 564.1 460.7 564.7 457.0 565.2 453.4 565.8 449.8 566.3 446.2 566.7 442.7 567.2 439.1 567.7 435.6 568.1 432.1'/><polyline points='589.0 249.8 589.4 247.3 589.8 244.8 590.3 242.4 590.7 240.0 591.2 237.6 591.7 235.2 592.2 232.8 592.7 230.5 593.2 228.2 593.8 225.9 594.4 223.7 595.1 221.5 595.9 219.3 596.7 217.3 597.8 215.4 598.8 214.0 599.8 213.3 600.8 213.2 601.8 213.6 602.8 214.7 603.7 216.3 604.7 218.6 605.6 221.0 606.3 223.5 607.0 226.0 607.5 228.4 608.1 230.9 608.6 233.3 609.1 235.8 609.5 238.3 610.0 240.8 610.4 243.3 610.8 245.9 611.2 248.4'/><polyline points='629.5 430.2 629.8 433.6 630.2 437.0 630.6 440.4 631.0 443.8 631.5 447.3 631.9 450.7 632.4 454.1 632.9 457.5 633.4 460.9 633.9 464.3 634.5 467.7 635.2 471.0 635.9 474.3 636.8 477.5 637.8 480.3 638.8 482.1 639.8 483.0 640.8 483.0 641.8 482.1 642.8 480.2 643.8 477.4 644.8 473.7 645.7 469.9 646.4 466.2 647.1 462.5 647.7 458.8 648.3 455.2 648.8 451.6 649.3 448.0 649.8 444.4 650.3 440.9 650.8 437.4 651.2 433.9 651.6 430.4'/><polyline points='672.5 248.5 672.9 246.0 673.4 243.6 673.8 241.2 674.3 238.7 674.7 236.4 675.2 234.0 675.7 231.6 676.3 229.3 676.8 227.0 677.4 224.8 678.1 222.5 678.8 220.4 679.6 218.3 680.5 216.3 681.6 214.7 682.6 213.6 683.6 213.2 684.6 213.3 685.6 214.1 686.6 215.4 687.5 217.3 688.5 219.8 689.3 222.3 690.0 224.8 690.6 227.2 691.1 229.7 691.7 232.1 692.2 234.6 692.6 237.1 693.1 239.6 693.5 242.1 693.9 244.6 694.3 247.2 694.7 249.7'/><polyline points='713.0 432.0 713.4 435.4 713.8 438.8 714.2 442.2 714.6 445.6 715.0 449.0 715.5 452.4 715.9 455.9 716.4 459.3 717.0 462.7 717.6 466.1 718.2 469.4 718.9 472.7 719.7 476.0 720.6 479.0 721.6 481.3 722.6 482.7 723.6 483.2 724.6 482.7 725.6 481.2 726.6 478.9 727.6 475.6 728.6 471.8 729.4 468.0 730.1 464.3 730.7 460.6 731.3 457.0 731.9 453.3 732.4 449.8 732.9 446.2 733.4 442.6 733.9 439.1 734.3 435.6 734.7 432.1'/><polyline points='755.6 249.7 756.1 247.3 756.5 244.8 756.9 242.4 757.4 239.9 757.8 237.5 758.3 235.1 758.8 232.8 759.3 230.5 759.9 228.1 760.5 225.9 761.1 223.6 761.8 221.4 762.5 219.3 763.4 217.2 764.4 215.3 765.4 214.0 766.4 213.3 767.4 213.2 768.4 213.7 769.4 214.7 770.4 216.4 771.4 218.6 772.2 221.1 773.0 223.5 773.6 226.0 774.2 228.4 774.7 230.9 775.2 233.4 775.7 235.9 776.2 238.3 776.6 240.8 777.0 243.4 777.4 245.9 777.8 248.4'/><polyline points='796.1 430.3 796.5 433.7 796.9 437.1 797.3 440.5 797.7 443.9 798.1 447.3 798.6 450.7 799.0 454.1 799.5 457.6 800.0 461.0 800.6 464.4 801.2 467.8 801.8 471.1 802.6 474.4 803.4 477.5 804.4 480.3 805.4 482.1 806.4 483.1 807.4 483.0 808.4 482.1 809.4 480.2 810.4 477.4 811.5 473.6 812.3 469.8 813.1 466.1 813.7 462.4 814.4 458.8 814.9 455.1 815.5 451.5 816.0 447.9 816.5 444.4 816.9 440.8 817.4 437.3 817.8 433.8 818.3 430.3'/><polyline points='839.2 248.5 839.6 246.0 840.0 243.6 840.5 241.1 840.9 238.7 841.4 236.3 841.9 234.0 842.4 231.6 842.9 229.3 843.5 227.0 844.1 224.7 844.8 222.5 845.5 220.3 846.3 218.2 847.2 216.3 848.2 214.6 849.2 213.6 850.2 213.2 851.2 213.3 852.2 214.1 853.2 215.4 854.2 217.4 855.2 219.9 855.9 222.3 856.6 224.8 857.2 227.2 857.8 229.7 858.3 232.2 858.8 234.6 859.3 237.1 859.7 239.6 860.1 242.1 860.5 244.7 860.9 247.2 861.3 249.7'/><polyline points='879.6 432.0 880.0 435.4 880.4 438.8 880.8 442.2 881.2 445.6 881.7 449.1 882.1 452.5 882.6 455.9 883.1 459.3 883.6 462.7 884.2 466.1 884.8 469.5 885.5 472.8 886.3 476.0 887.3 479.0 888.2 481.3 889.2 482.7 890.2 483.2 891.2 482.7 892.2 481.2 893.3 478.8 894.3 475.6 895.2 471.7 896.0 468.0 896.7 464.2 897.4 460.6 898.0 456.9 898.5 453.3 899.1 449.7 899.6 446.1 900.0 442.6 900.5 439.1 900.9 435.5 901.4 432.0'/><polyline points='922.3 249.7 922.7 247.2 923.1 244.8 923.6 242.3 924.0 239.9 924.5 237.5 925.0 235.1 925.5 232.8 926.0 230.4 926.5 228.1 927.1 225.8 927.7 223.6 928.4 221.4 929.2 219.3 930.0 217.2 931.1 215.3 932.1 214.0 933.1 213.3 934.1 213.2 935.1 213.7 936.1 214.7 937.0 216.4 938.0 218.6 938.9 221.1 939.6 223.6 940.3 226.0 940.8 228.5 941.4 230.9 941.9 233.4 942.4 235.9 942.8 238.4 943.2 240.9 943.7 243.4 944.1 245.9 944.4 248.5'/><polyline points='962.8 430.3 963.1 433.7 963.5 437.1 963.9 440.5 964.3 443.9 964.8 447.3 965.2 450.8 965.7 454.2 966.2 457.6 966.7 461.0 967.2 464.4 967.8 467.8 968.5 471.1 969.2 474.4 970.1 477.6 971.1 480.3 972.1 482.2 973.1 483.1 974.1 483.0 975.1 482.0 976.1 480.1 977.1 477.3 978.1 473.6 979.0 469.8 979.7 466.1 980.4 462.4 981.0 458.7 981.6 455.1 982.1 451.5 982.6 447.9 983.1 444.3 983.6 440.8 984.0 437.3 984.5 433.8 984.9 430.3'/><polyline points='1005.8 248.5 1006.2 246.0 1006.7 243.5 1007.1 241.1 1007.6 238.7 1008.0 236.3 1008.5 233.9 1009.0 231.6 1009.6 229.3 1010.1 227.0 1010.7 224.7 1011.4 222.5 1012.1 220.3 1012.9 218.2 1013.9 216.2 1014.9 214.6 1015.9 213.6 1016.9 213.2 1017.9 213.3 1018.9 214.1 1019.9 215.4 1020.8 217.4 1021.8 219.9'/></g>
<g fill='none' stroke='#00e6e6' stroke-opacity='0.26' stroke-width='1.4'><polyline points='22.2 217.8 23.0 220.3 23.6 222.8 24.2 225.2 24.8 227.7 25.3 230.2 25.8 232.6 26.2 235.1 26.7 237.6 27.1 240.2 27.5 242.7 27.9 245.2 28.2 247.8'/><polyline points='46.2 432.9 46.5 436.3 46.9 439.7 47.3 443.1 47.7 446.5 48.1 449.9 48.5 453.3 49.0 456.7 49.5 460.2 50.0 463.6 50.6 466.9 51.1 470.3 51.8 473.6 52.6 476.9 53.4 480.0 54.4 482.6 55.4 484.4 56.4 485.1 57.4 484.9 58.4 483.8 59.4 481.7 60.4 478.7 61.5 474.8 62.3 471.0 63.0 467.3 63.7 463.6 64.3 460.0 64.9 456.4 65.4 452.8 65.9 449.2 66.4 445.6 66.9 442.1 67.3 438.6 67.7 435.1 68.2 431.6'/><polyline points='89.6 246.8 90.0 244.4 90.4 241.9 90.8 239.5 91.3 237.0 91.8 234.6 92.3 232.3 92.8 229.9 93.3 227.6 93.9 225.3 94.5 223.0 95.1 220.8 95.8 218.6 96.6 216.5 97.6 214.5 98.6 212.8 99.6 211.7 100.6 211.2 101.6 211.3 102.6 212.0 103.6 213.4 104.5 215.3 105.5 217.8 106.3 220.3 107.0 222.7 107.6 225.2 108.1 227.7 108.6 230.1 109.1 232.6 109.6 235.1 110.0 237.6 110.4 240.1 110.8 242.7 111.2 245.2 111.6 247.7'/><polyline points='129.5 432.9 129.8 436.3 130.2 439.6 130.6 443.0 131.0 446.5 131.4 449.9 131.9 453.3 132.3 456.7 132.8 460.1 133.3 463.5 133.9 466.9 134.5 470.3 135.1 473.6 135.9 476.9 136.7 480.0 137.7 482.6 138.7 484.3 139.7 485.1 140.7 484.9 141.7 483.8 142.7 481.7 143.7 478.7 144.8 474.8 145.6 471.1 146.3 467.3 147.0 463.7 147.6 460.0 148.2 456.4 148.7 452.8 149.2 449.2 149.7 445.7 150.2 442.1 150.6 438.6 151.1 435.1 151.5 431.7'/><polyline points='172.9 246.9 173.3 244.4 173.7 241.9 174.2 239.5 174.6 237.1 175.1 234.7 175.6 232.3 176.1 229.9 176.6 227.6 177.2 225.3 177.8 223.0 178.5 220.8 179.2 218.6 180.0 216.5 180.9 214.5 181.9 212.8 182.9 211.7 183.9 211.2 184.9 211.3 185.9 212.0 186.9 213.3 187.9 215.3 188.8 217.8 189.6 220.3 190.3 222.7 190.9 225.2 191.4 227.6 191.9 230.1 192.4 232.6 192.9 235.1 193.3 237.6 193.7 240.1 194.1 242.6 194.5 245.2 194.9 247.7'/><polyline points='212.8 432.8 213.2 436.2 213.5 439.6 213.9 443.0 214.3 446.4 214.7 449.8 215.2 453.3 215.6 456.7 216.1 460.1 216.6 463.5 217.2 466.9 217.8 470.3 218.4 473.6 219.2 476.8 220.0 480.0 221.0 482.6 222.0 484.3 223.0 485.1 224.0 484.9 225.0 483.8 226.0 481.7 227.1 478.7 228.1 474.9 228.9 471.1 229.7 467.4 230.3 463.7 230.9 460.0 231.5 456.4 232.0 452.8 232.5 449.3 233.0 445.7 233.5 442.2 233.9 438.7 234.4 435.2 234.8 431.7'/><polyline points='256.2 246.9 256.6 244.4 257.0 241.9 257.5 239.5 257.9 237.1 258.4 234.7 258.9 232.3 259.4 229.9 259.9 227.6 260.5 225.3 261.1 223.0 261.8 220.8 262.5 218.6 263.3 216.5 264.2 214.5 265.2 212.8 266.2 211.7 267.2 211.2 268.2 211.3 269.2 212.0 270.2 213.3 271.2 215.2 272.1 217.8 272.9 220.2 273.6 222.7 274.2 225.2 274.7 227.6 275.3 230.1 275.7 232.6 276.2 235.1 276.6 237.6 277.0 240.1 277.4 242.6 277.8 245.2 278.2 247.7'/><polyline points='296.1 432.8 296.5 436.2 296.9 439.6 297.2 443.0 297.6 446.4 298.1 449.8 298.5 453.2 299.0 456.7 299.4 460.1 299.9 463.5 300.5 466.9 301.1 470.2 301.8 473.6 302.5 476.8 303.4 479.9 304.3 482.6 305.3 484.3 306.3 485.1 307.3 484.9 308.3 483.8 309.3 481.8 310.4 478.8 311.4 474.9 312.2 471.1 313.0 467.4 313.6 463.7 314.2 460.1 314.8 456.4 315.3 452.8 315.8 449.3 316.3 445.7 316.8 442.2 317.3 438.7 317.7 435.2 318.1 431.7'/><polyline points='339.5 246.9 339.9 244.4 340.4 241.9 340.8 239.5 341.3 237.1 341.7 234.7 342.2 232.3 342.7 229.9 343.3 227.6 343.8 225.3 344.4 223.0 345.1 220.8 345.8 218.6 346.6 216.5 347.5 214.5 348.5 212.8 349.5 211.7 350.5 211.2 351.5 211.3 352.5 212.0 353.5 213.3 354.5 215.2 355.5 217.8 356.2 220.2 356.9 222.7 357.5 225.2 358.1 227.6 358.6 230.1 359.1 232.6 359.5 235.1 359.9 237.6 360.4 240.1 360.8 242.6 361.1 245.2 361.5 247.7'/><polyline points='379.4 432.8 379.8 436.2 380.2 439.6 380.6 443.0 381.0 446.4 381.4 449.8 381.8 453.2 382.3 456.7 382.8 460.1 383.3 463.5 383.8 466.9 384.4 470.2 385.1 473.5 385.8 476.8 386.7 479.9 387.7 482.6 388.6 484.3 389.6 485.1 390.6 484.9 391.6 483.8 392.7 481.8 393.7 478.8 394.7 474.9 395.6 471.1 396.3 467.4 396.9 463.7 397.6 460.1 398.1 456.5 398.7 452.9 399.2 449.3 399.7 445.7 400.1 442.2 400.6 438.7 401.0 435.2 401.4 431.7'/><polyline points='422.8 246.9 423.2 244.4 423.7 242.0 424.1 239.5 424.6 237.1 425.0 234.7 425.5 232.3 426.0 230.0 426.6 227.6 427.2 225.3 427.8 223.1 428.4 220.8 429.1 218.6 429.9 216.5 430.8 214.5 431.8 212.8 432.8 211.7 433.9 211.2 434.9 211.3 435.8 212.0 436.8 213.3 437.8 215.2 438.8 217.7 439.6 220.2 440.2 222.7 440.8 225.1 441.4 227.6 441.9 230.1 442.4 232.6 442.8 235.1 443.3 237.6 443.7 240.1 444.1 242.6 444.5 245.1 444.8 247.7'/><polyline points='462.7 432.8 463.1 436.2 463.5 439.6 463.9 443.0 464.3 446.4 464.7 449.8 465.1 453.2 465.6 456.6 466.1 460.1 466.6 463.5 467.1 466.8 467.7 470.2 468.4 473.5 469.1 476.8 470.0 479.9 471.0 482.6 472.0 484.3 473.0 485.1 474.0 484.9 475.0 483.8 476.0 481.8 477.0 478.8 478.0 474.9 478.9 471.1 479.6 467.4 480.3 463.7 480.9 460.1 481.4 456.5 482.0 452.9 482.5 449.3 483.0 445.7 483.4 442.2 483.9 438.7 484.3 435.2 484.8 431.7'/><polyline points='506.1 246.9 506.6 244.4 507.0 242.0 507.4 239.5 507.9 237.1 508.4 234.7 508.9 232.3 509.4 230.0 509.9 227.6 510.5 225.3 511.1 223.1 511.7 220.8 512.4 218.6 513.2 216.5 514.1 214.5 515.2 212.8 516.2 211.7 517.2 211.2 518.2 211.3 519.2 212.0 520.1 213.3 521.1 215.2 522.1 217.7 522.9 220.2 523.5 222.7 524.1 225.1 524.7 227.6 525.2 230.1 525.7 232.6 526.1 235.0 526.6 237.6 527.0 240.1 527.4 242.6 527.8 245.1 528.1 247.7'/><polyline points='546.1 432.8 546.4 436.2 546.8 439.6 547.2 443.0 547.6 446.4 548.0 449.8 548.5 453.2 548.9 456.6 549.4 460.0 549.9 463.4 550.5 466.8 551.0 470.2 551.7 473.5 552.4 476.8 553.3 479.9 554.3 482.6 555.3 484.3 556.3 485.1 557.3 484.9 558.3 483.8 559.3 481.8 560.3 478.8 561.3 474.9 562.2 471.1 562.9 467.4 563.6 463.8 564.2 460.1 564.8 456.5 565.3 452.9 565.8 449.3 566.3 445.8 566.8 442.2 567.2 438.7 567.7 435.2 568.1 431.7'/><polyline points='589.5 246.9 589.9 244.4 590.3 242.0 590.8 239.5 591.2 237.1 591.7 234.7 592.2 232.3 592.7 230.0 593.2 227.6 593.8 225.3 594.4 223.1 595.0 220.8 595.7 218.7 596.5 216.5 597.4 214.5 598.5 212.8 599.5 211.7 600.5 211.2 601.5 211.3 602.5 212.0 603.5 213.3 604.4 215.2 605.4 217.7 606.2 220.2 606.9 222.7 607.5 225.1 608.0 227.6 608.5 230.1 609.0 232.5 609.5 235.0 609.9 237.5 610.3 240.1 610.7 242.6 611.1 245.1 611.5 247.7'/><polyline points='629.4 432.8 629.8 436.2 630.1 439.5 630.5 442.9 630.9 446.4 631.3 449.8 631.8 453.2 632.2 456.6 632.7 460.0 633.2 463.4 633.8 466.8 634.4 470.2 635.0 473.5 635.8 476.8 636.6 479.9 637.6 482.6 638.6 484.3 639.6 485.1 640.6 485.0 641.6 483.8 642.6 481.8 643.6 478.8 644.7 475.0 645.5 471.2 646.2 467.5 646.9 463.8 647.5 460.1 648.1 456.5 648.6 452.9 649.1 449.3 649.6 445.8 650.1 442.2 650.5 438.7 651.0 435.2 651.4 431.8'/><polyline points='672.8 246.9 673.2 244.5 673.6 242.0 674.1 239.6 674.5 237.1 675.0 234.7 675.5 232.3 676.0 230.0 676.5 227.7 677.1 225.4 677.7 223.1 678.4 220.9 679.1 218.7 679.8 216.5 680.8 214.5 681.8 212.8 682.8 211.7 683.8 211.2 684.8 211.3 685.8 212.0 686.8 213.3 687.8 215.2 688.7 217.7 689.5 220.2 690.2 222.6 690.8 225.1 691.3 227.6 691.8 230.0 692.3 232.5 692.8 235.0 693.2 237.5 693.6 240.0 694.0 242.6 694.4 245.1 694.8 247.7'/><polyline points='712.7 432.7 713.1 436.1 713.4 439.5 713.8 442.9 714.2 446.3 714.7 449.8 715.1 453.2 715.5 456.6 716.0 460.0 716.5 463.4 717.1 466.8 717.7 470.2 718.3 473.5 719.1 476.7 719.9 479.9 720.9 482.6 721.9 484.3 722.9 485.1 723.9 485.0 724.9 483.9 725.9 481.8 726.9 478.8 728.0 475.0 728.8 471.2 729.5 467.5 730.2 463.8 730.8 460.1 731.4 456.5 731.9 452.9 732.4 449.4 732.9 445.8 733.4 442.3 733.8 438.8 734.3 435.3 734.7 431.8'/><polyline points='756.1 246.9 756.5 244.5 756.9 242.0 757.4 239.6 757.8 237.1 758.3 234.7 758.8 232.4 759.3 230.0 759.9 227.7 760.4 225.4 761.0 223.1 761.7 220.9 762.4 218.7 763.2 216.6 764.1 214.5 765.1 212.8 766.1 211.7 767.1 211.2 768.1 211.3 769.1 212.0 770.1 213.3 771.1 215.2 772.0 217.7 772.8 220.2 773.5 222.6 774.1 225.1 774.7 227.6 775.2 230.0 775.6 232.5 776.1 235.0 776.5 237.5 776.9 240.0 777.3 242.5 777.7 245.1 778.1 247.6'/><polyline points='796.0 432.7 796.4 436.1 796.8 439.5 797.1 442.9 797.5 446.3 798.0 449.7 798.4 453.1 798.9 456.6 799.3 460.0 799.9 463.4 800.4 466.8 801.0 470.1 801.7 473.5 802.4 476.7 803.2 479.8 804.2 482.5 805.2 484.3 806.2 485.1 807.2 485.0 808.2 483.9 809.2 481.8 810.3 478.9 811.3 475.0 812.1 471.2 812.9 467.5 813.5 463.8 814.1 460.2 814.7 456.6 815.2 453.0 815.8 449.4 816.2 445.8 816.7 442.3 817.2 438.8 817.6 435.3 818.0 431.8'/><polyline points='839.4 247.0 839.8 244.5 840.3 242.0 840.7 239.6 841.2 237.2 841.6 234.8 842.1 232.4 842.6 230.0 843.2 227.7 843.7 225.4 844.3 223.1 845.0 220.9 845.7 218.7 846.5 216.6 847.4 214.6 848.4 212.8 849.4 211.7 850.4 211.2 851.4 211.3 852.4 212.0 853.4 213.3 854.4 215.2 855.3 217.7 856.1 220.1 856.8 222.6 857.4 225.1 858.0 227.5 858.5 230.0 859.0 232.5 859.4 235.0 859.8 237.5 860.3 240.0 860.7 242.5 861.0 245.1 861.4 247.6'/><polyline points='879.3 432.7 879.7 436.1 880.1 439.5 880.5 442.9 880.9 446.3 881.3 449.7 881.7 453.1 882.2 456.5 882.7 459.9 883.2 463.3 883.7 466.7 884.3 470.1 885.0 473.4 885.7 476.7 886.6 479.8 887.5 482.5 888.5 484.3 889.5 485.1 890.5 485.0 891.5 483.9 892.5 481.9 893.6 478.9 894.6 475.0 895.4 471.3 896.2 467.5 896.8 463.9 897.4 460.2 898.0 456.6 898.6 453.0 899.1 449.4 899.6 445.9 900.0 442.3 900.5 438.8 900.9 435.3 901.4 431.8'/><polyline points='922.7 247.0 923.1 244.5 923.6 242.1 924.0 239.6 924.5 237.2 924.9 234.8 925.4 232.4 925.9 230.0 926.5 227.7 927.0 225.4 927.6 223.1 928.3 220.9 929.0 218.7 929.8 216.6 930.7 214.6 931.7 212.8 932.7 211.7 933.7 211.2 934.7 211.3 935.7 212.0 936.7 213.3 937.7 215.1 938.7 217.6 939.4 220.1 940.1 222.6 940.7 225.0 941.3 227.5 941.8 230.0 942.3 232.5 942.7 235.0 943.2 237.5 943.6 240.0 944.0 242.5 944.4 245.0 944.7 247.6'/><polyline points='962.7 432.7 963.0 436.0 963.4 439.4 963.8 442.8 964.2 446.2 964.6 449.7 965.0 453.1 965.5 456.5 966.0 459.9 966.5 463.3 967.0 466.7 967.6 470.1 968.3 473.4 969.0 476.7 969.9 479.8 970.9 482.5 971.8 484.3 972.8 485.1 973.8 485.0 974.8 483.9 975.9 481.9 976.9 478.9 977.9 475.1 978.8 471.3 979.5 467.6 980.2 463.9 980.8 460.3 981.3 456.6 981.9 453.0 982.4 449.5 982.9 445.9 983.3 442.4 983.8 438.9 984.2 435.4 984.7 431.9'/><polyline points='1006.0 247.0 1006.5 244.5 1006.9 242.1 1007.3 239.6 1007.8 237.2 1008.3 234.8 1008.8 232.4 1009.3 230.1 1009.8 227.7 1010.4 225.4 1011.0 223.2 1011.6 220.9 1012.3 218.7 1013.1 216.6 1014.0 214.6 1015.0 212.9 1016.0 211.7 1017.0 211.2 1018.0 211.3 1019.0 212.0 1020.0 213.2 1021.0 215.1 1022.0 217.6'/></g>
<g fill='none' stroke='#00e6e6' stroke-opacity='0.2' stroke-width='1.4'><polyline points='22.5 215.9 23.3 218.4 23.9 220.9 24.5 223.4 25.0 225.8 25.5 228.3 26.0 230.8 26.4 233.3 26.9 235.8 27.3 238.3 27.7 240.9 28.0 243.4 28.4 246.0'/><polyline points='45.9 434.0 46.3 437.4 46.6 440.8 47.0 444.2 47.4 447.6 47.8 451.0 48.2 454.4 48.7 457.8 49.1 461.2 49.6 464.6 50.2 468.0 50.7 471.4 51.4 474.7 52.1 478.0 52.9 481.2 53.8 484.0 54.8 486.0 55.8 487.0 56.8 487.1 57.8 486.1 58.8 484.3 59.9 481.4 60.9 477.7 61.8 473.9 62.5 470.2 63.2 466.5 63.8 462.9 64.4 459.3 64.9 455.7 65.5 452.1 66.0 448.5 66.4 445.0 66.9 441.5 67.3 438.0 67.8 434.5'/><polyline points='89.6 246.3 90.1 243.8 90.5 241.4 90.9 238.9 91.4 236.5 91.8 234.1 92.3 231.7 92.8 229.3 93.3 226.9 93.9 224.6 94.5 222.3 95.1 220.0 95.8 217.8 96.5 215.7 97.4 213.6 98.4 211.6 99.4 210.2 100.4 209.4 101.4 209.2 102.4 209.6 103.4 210.6 104.3 212.3 105.3 214.5 106.2 217.0 106.9 219.5 107.5 222.0 108.1 224.4 108.6 226.9 109.1 229.4 109.5 231.9 109.9 234.4 110.4 236.9 110.8 239.4 111.1 242.0 111.5 244.5 111.9 247.1'/><polyline points='129.0 432.1 129.4 435.5 129.7 438.8 130.1 442.2 130.5 445.6 130.9 449.0 131.3 452.5 131.7 455.9 132.2 459.3 132.7 462.7 133.2 466.1 133.7 469.5 134.3 472.8 135.0 476.1 135.7 479.4 136.6 482.4 137.6 485.0 138.5 486.5 139.5 487.2 140.5 486.8 141.6 485.5 142.6 483.2 143.6 480.0 144.6 476.2 145.4 472.4 146.1 468.7 146.8 465.1 147.4 461.4 147.9 457.8 148.5 454.2 149.0 450.7 149.5 447.1 149.9 443.6 150.4 440.1 150.8 436.6 151.3 433.1'/><polyline points='173.1 245.3 173.5 242.8 174.0 240.4 174.4 237.9 174.9 235.5 175.3 233.1 175.8 230.7 176.3 228.3 176.9 226.0 177.4 223.7 178.0 221.4 178.7 219.1 179.4 216.9 180.2 214.8 181.1 212.8 182.1 211.0 183.1 209.8 184.1 209.2 185.1 209.3 186.1 209.9 187.1 211.2 188.1 213.1 189.0 215.6 189.8 218.1 190.5 220.5 191.1 223.0 191.6 225.5 192.1 228.0 192.6 230.5 193.0 233.0 193.4 235.5 193.9 238.0 194.2 240.5 194.6 243.1 195.0 245.6'/><polyline points='212.5 433.5 212.9 436.9 213.2 440.3 213.6 443.7 214.0 447.1 214.4 450.5 214.8 453.9 215.2 457.3 215.7 460.7 216.2 464.1 216.7 467.5 217.3 470.9 217.9 474.2 218.6 477.5 219.4 480.7 220.3 483.7 221.3 485.8 222.3 486.9 223.3 487.1 224.3 486.3 225.3 484.6 226.4 481.9 227.4 478.3 228.3 474.5 229.1 470.8 229.7 467.1 230.4 463.4 231.0 459.8 231.5 456.2 232.0 452.6 232.5 449.1 233.0 445.5 233.5 442.0 233.9 438.5 234.3 435.0 234.8 431.6'/><polyline points='256.2 246.7 256.6 244.2 257.1 241.7 257.5 239.3 257.9 236.8 258.4 234.4 258.9 232.0 259.4 229.6 259.9 227.3 260.5 225.0 261.0 222.7 261.6 220.4 262.3 218.2 263.0 216.0 263.9 213.9 264.8 211.9 265.9 210.4 266.9 209.5 267.9 209.2 268.9 209.5 269.9 210.4 270.8 212.0 271.8 214.1 272.7 216.6 273.4 219.1 274.0 221.6 274.6 224.0 275.1 226.5 275.6 229.0 276.1 231.5 276.5 234.0 276.9 236.5 277.3 239.0 277.7 241.6 278.1 244.1 278.4 246.7'/><polyline points='295.6 431.6 296.0 434.9 296.3 438.3 296.7 441.7 297.1 445.1 297.5 448.5 297.9 451.9 298.3 455.3 298.7 458.7 299.2 462.1 299.7 465.5 300.3 468.9 300.8 472.3 301.5 475.6 302.2 478.9 303.1 482.0 304.1 484.6 305.0 486.4 306.0 487.1 307.0 486.9 308.0 485.8 309.1 483.6 310.1 480.6 311.1 476.7 311.9 472.9 312.7 469.2 313.3 465.6 313.9 461.9 314.5 458.3 315.0 454.7 315.6 451.2 316.0 447.6 316.5 444.1 317.0 440.6 317.4 437.1 317.8 433.6'/><polyline points='339.7 245.7 340.1 243.2 340.6 240.7 341.0 238.3 341.4 235.8 341.9 233.4 342.4 231.0 342.9 228.7 343.4 226.3 344.0 224.0 344.6 221.7 345.2 219.5 345.9 217.3 346.7 215.1 347.6 213.0 348.6 211.2 349.6 209.9 350.6 209.3 351.6 209.2 352.6 209.8 353.6 211.0 354.6 212.8 355.5 215.2 356.3 217.7 357.0 220.2 357.6 222.7 358.2 225.1 358.7 227.6 359.2 230.1 359.6 232.6 360.0 235.1 360.4 237.6 360.8 240.2 361.2 242.7 361.6 245.2'/><polyline points='379.1 433.0 379.4 436.4 379.8 439.8 380.2 443.2 380.6 446.6 381.0 450.0 381.4 453.4 381.8 456.8 382.3 460.3 382.8 463.7 383.3 467.0 383.8 470.4 384.4 473.8 385.1 477.1 385.9 480.3 386.8 483.3 387.8 485.5 388.8 486.8 389.8 487.1 390.8 486.5 391.8 484.9 392.8 482.4 393.9 478.9 394.8 475.1 395.6 471.4 396.3 467.7 396.9 464.0 397.5 460.4 398.1 456.8 398.6 453.2 399.1 449.6 399.6 446.1 400.0 442.6 400.5 439.1 400.9 435.6 401.3 432.1'/><polyline points='422.8 247.1 423.2 244.6 423.6 242.1 424.1 239.7 424.5 237.2 425.0 234.8 425.4 232.4 425.9 230.0 426.5 227.7 427.0 225.3 427.6 223.0 428.2 220.7 428.8 218.5 429.6 216.3 430.4 214.2 431.3 212.2 432.3 210.6 433.3 209.6 434.3 209.2 435.3 209.4 436.3 210.2 437.3 211.7 438.3 213.7 439.2 216.2 439.9 218.7 440.6 221.2 441.2 223.7 441.7 226.1 442.2 228.6 442.7 231.1 443.1 233.6 443.5 236.1 443.9 238.6 444.3 241.2 444.7 243.7 445.0 246.3'/><polyline points='462.6 434.4 462.9 437.8 463.3 441.2 463.7 444.6 464.0 448.0 464.4 451.4 464.9 454.8 465.3 458.2 465.8 461.6 466.3 465.0 466.8 468.4 467.4 471.8 468.0 475.1 468.7 478.4 469.6 481.5 470.5 484.3 471.5 486.2 472.5 487.1 473.5 487.0 474.5 486.0 475.6 484.0 476.6 481.1 477.6 477.3 478.5 473.5 479.2 469.8 479.9 466.1 480.5 462.4 481.1 458.8 481.6 455.2 482.1 451.7 482.6 448.1 483.1 444.6 483.5 441.1 484.0 437.6 484.4 434.1'/><polyline points='506.3 246.0 506.7 243.5 507.1 241.1 507.6 238.6 508.0 236.2 508.5 233.8 509.0 231.4 509.5 229.0 510.0 226.7 510.6 224.3 511.2 222.0 511.8 219.8 512.5 217.6 513.2 215.4 514.1 213.3 515.1 211.4 516.1 210.0 517.1 209.3 518.1 209.2 519.1 209.7 520.1 210.8 521.1 212.5 522.0 214.8 522.9 217.3 523.6 219.8 524.2 222.3 524.7 224.8 525.2 227.2 525.7 229.7 526.2 232.2 526.6 234.7 527.0 237.2 527.4 239.8 527.8 242.3 528.2 244.9 528.5 247.4'/><polyline points='545.7 432.5 546.0 435.9 546.4 439.3 546.8 442.7 547.1 446.1 547.5 449.5 548.0 452.9 548.4 456.3 548.8 459.7 549.3 463.1 549.8 466.5 550.4 469.9 551.0 473.3 551.7 476.6 552.4 479.8 553.3 482.8 554.3 485.2 555.3 486.7 556.3 487.2 557.3 486.7 558.3 485.2 559.3 482.9 560.3 479.5 561.3 475.7 562.1 472.0 562.8 468.3 563.5 464.6 564.1 461.0 564.6 457.4 565.1 453.8 565.6 450.2 566.1 446.7 566.6 443.1 567.1 439.6 567.5 436.1 567.9 432.7'/><polyline points='589.4 247.5 589.8 245.0 590.2 242.5 590.6 240.1 591.1 237.6 591.5 235.2 592.0 232.8 592.5 230.4 593.0 228.0 593.6 225.7 594.1 223.4 594.7 221.1 595.4 218.9 596.1 216.7 596.9 214.5 597.8 212.5 598.8 210.8 599.8 209.7 600.8 209.2 601.8 209.3 602.8 210.0 603.8 211.4 604.8 213.4 605.7 215.9 606.5 218.4 607.1 220.8 607.7 223.3 608.3 225.8 608.8 228.3 609.2 230.7 609.7 233.2 610.1 235.8 610.5 238.3 610.9 240.8 611.3 243.4 611.6 245.9'/><polyline points='629.1 433.9 629.5 437.3 629.9 440.7 630.2 444.1 630.6 447.5 631.0 450.9 631.4 454.3 631.9 457.7 632.4 461.1 632.8 464.5 633.4 467.9 633.9 471.3 634.6 474.6 635.3 477.9 636.1 481.1 637.1 484.0 638.0 486.0 639.0 487.0 640.0 487.1 641.0 486.2 642.1 484.3 643.1 481.5 644.1 477.8 645.0 474.0 645.7 470.3 646.4 466.6 647.0 463.0 647.6 459.3 648.2 455.8 648.7 452.2 649.2 448.6 649.7 445.1 650.1 441.6 650.6 438.1 651.0 434.6'/><polyline points='672.9 246.4 673.3 243.9 673.7 241.4 674.1 239.0 674.6 236.5 675.1 234.1 675.5 231.7 676.0 229.3 676.6 227.0 677.1 224.7 677.7 222.4 678.3 220.1 679.0 217.9 679.7 215.7 680.6 213.6 681.6 211.7 682.6 210.2 683.6 209.4 684.6 209.2 685.6 209.6 686.6 210.6 687.6 212.2 688.5 214.4 689.4 216.9 690.1 219.4 690.7 221.9 691.3 224.4 691.8 226.8 692.3 229.3 692.7 231.8 693.2 234.3 693.6 236.8 694.0 239.4 694.4 241.9 694.7 244.4 695.1 247.0'/><polyline points='712.3 432.0 712.6 435.4 713.0 438.8 713.3 442.1 713.7 445.5 714.1 448.9 714.5 452.4 715.0 455.8 715.4 459.2 715.9 462.6 716.4 466.0 716.9 469.4 717.5 472.7 718.2 476.0 718.9 479.3 719.8 482.4 720.8 484.9 721.8 486.5 722.8 487.1 723.8 486.8 724.8 485.5 725.8 483.3 726.8 480.1 727.8 476.3 728.6 472.5 729.3 468.8 730.0 465.1 730.6 461.5 731.2 457.9 731.7 454.3 732.2 450.7 732.7 447.2 733.2 443.7 733.6 440.2 734.1 436.7 734.5 433.2'/><polyline points='756.3 245.4 756.8 242.9 757.2 240.4 757.6 238.0 758.1 235.6 758.6 233.1 759.1 230.8 759.6 228.4 760.1 226.1 760.7 223.7 761.3 221.5 761.9 219.2 762.6 217.0 763.4 214.9 764.3 212.8 765.3 211.0 766.3 209.8 767.3 209.2 768.3 209.3 769.3 209.9 770.3 211.2 771.3 213.0 772.2 215.5 773.0 218.0 773.7 220.5 774.3 222.9 774.8 225.4 775.3 227.9 775.8 230.4 776.3 232.9 776.7 235.4 777.1 237.9 777.5 240.4 777.8 243.0 778.2 245.5'/><polyline points='795.7 433.4 796.1 436.8 796.5 440.2 796.8 443.6 797.2 447.0 797.6 450.4 798.0 453.8 798.5 457.2 798.9 460.6 799.4 464.1 799.9 467.4 800.5 470.8 801.1 474.2 801.8 477.4 802.6 480.6 803.6 483.6 804.5 485.7 805.5 486.9 806.5 487.1 807.5 486.4 808.5 484.7 809.6 482.0 810.6 478.4 811.5 474.6 812.3 470.9 813.0 467.2 813.6 463.5 814.2 459.9 814.7 456.3 815.2 452.7 815.7 449.2 816.2 445.6 816.7 442.1 817.1 438.6 817.6 435.1 818.0 431.7'/><polyline points='839.4 246.8 839.9 244.3 840.3 241.8 840.7 239.4 841.2 236.9 841.6 234.5 842.1 232.1 842.6 229.7 843.1 227.4 843.7 225.0 844.3 222.7 844.9 220.5 845.5 218.2 846.3 216.1 847.1 213.9 848.0 212.0 849.1 210.4 850.1 209.5 851.1 209.2 852.1 209.5 853.1 210.4 854.0 211.9 855.0 214.0 855.9 216.5 856.6 219.0 857.3 221.5 857.8 224.0 858.4 226.4 858.9 228.9 859.3 231.4 859.7 233.9 860.2 236.4 860.6 238.9 860.9 241.5 861.3 244.0 861.7 246.6'/><polyline points='878.9 431.4 879.2 434.8 879.6 438.2 879.9 441.6 880.3 445.0 880.7 448.4 881.1 451.8 881.5 455.2 882.0 458.6 882.4 462.0 882.9 465.4 883.5 468.8 884.1 472.2 884.7 475.5 885.4 478.8 886.3 481.9 887.3 484.6 888.2 486.3 889.2 487.1 890.2 486.9 891.3 485.8 892.3 483.7 893.3 480.7 894.3 476.8 895.2 473.0 895.9 469.3 896.6 465.7 897.2 462.0 897.7 458.4 898.3 454.8 898.8 451.2 899.3 447.7 899.7 444.2 900.2 440.7 900.6 437.2 901.1 433.7'/><polyline points='922.9 245.7 923.3 243.3 923.8 240.8 924.2 238.3 924.7 235.9 925.1 233.5 925.6 231.1 926.1 228.7 926.7 226.4 927.2 224.1 927.8 221.8 928.5 219.5 929.1 217.3 929.9 215.2 930.8 213.1 931.8 211.2 932.8 209.9 933.8 209.3 934.8 209.2 935.8 209.8 936.8 211.0 937.8 212.8 938.8 215.2 939.6 217.7 940.2 220.1 940.8 222.6 941.4 225.1 941.9 227.5 942.4 230.0 942.8 232.5 943.3 235.0 943.7 237.6 944.1 240.1 944.4 242.6 944.8 245.2'/><polyline points='962.3 433.0 962.7 436.3 963.0 439.7 963.4 443.1 963.8 446.5 964.2 449.9 964.6 453.3 965.0 456.8 965.5 460.2 966.0 463.6 966.5 467.0 967.1 470.3 967.7 473.7 968.3 477.0 969.1 480.2 970.0 483.2 971.0 485.5 972.0 486.8 973.0 487.2 974.0 486.5 975.0 485.0 976.1 482.5 977.1 479.0 978.0 475.2 978.8 471.5 979.5 467.8 980.1 464.1 980.7 460.5 981.3 456.9 981.8 453.3 982.3 449.7 982.8 446.2 983.3 442.7 983.7 439.2 984.1 435.7 984.6 432.2'/><polyline points='1006.0 247.2 1006.4 244.7 1006.9 242.2 1007.3 239.7 1007.7 237.3 1008.2 234.9 1008.7 232.5 1009.2 230.1 1009.7 227.7 1010.2 225.4 1010.8 223.1 1011.4 220.8 1012.1 218.6 1012.8 216.4 1013.6 214.3 1014.5 212.3 1015.5 210.6 1016.6 209.6 1017.6 209.2 1018.6 209.4 1019.5 210.2 1020.5 211.6 1021.5 213.7 1022.4 216.2'/></g>
<g fill='none' stroke='#00e6e6' stroke-opacity='0.14' stroke-width='1.4'><polyline points='22.8 214.1 23.5 216.6 24.2 219.0 24.8 221.5 25.3 224.0 25.8 226.5 26.2 229.0 26.7 231.5 27.1 234.0 27.5 236.5 27.8 239.1 28.2 241.6 28.5 244.2'/><polyline points='45.7 435.1 46.0 438.5 46.4 441.9 46.7 445.3 47.1 448.7 47.5 452.1 47.9 455.5 48.3 458.9 48.8 462.3 49.2 465.7 49.8 469.1 50.3 472.5 50.9 475.8 51.6 479.1 52.3 482.3 53.3 485.3 54.2 487.5 55.2 488.8 56.2 489.1 57.2 488.5 58.2 486.8 59.3 484.3 60.3 480.7 61.2 476.9 62.0 473.2 62.7 469.5 63.3 465.9 63.9 462.2 64.5 458.6 65.0 455.1 65.5 451.5 66.0 448.0 66.5 444.5 66.9 441.0 67.4 437.5 67.8 434.0'/><polyline points='89.7 245.9 90.1 243.4 90.5 240.9 91.0 238.4 91.4 236.0 91.9 233.5 92.4 231.1 92.8 228.7 93.4 226.4 93.9 224.0 94.5 221.7 95.1 219.4 95.7 217.2 96.4 214.9 97.2 212.8 98.1 210.8 99.1 208.9 100.1 207.8 101.2 207.2 102.1 207.3 103.1 208.0 104.1 209.3 105.1 211.2 106.0 213.8 106.8 216.3 107.4 218.8 108.0 221.2 108.5 223.7 109.0 226.2 109.5 228.7 109.9 231.2 110.3 233.7 110.7 236.2 111.1 238.8 111.5 241.3 111.8 243.9'/><polyline points='129.0 434.8 129.3 438.1 129.6 441.5 130.0 444.9 130.4 448.3 130.8 451.7 131.2 455.1 131.6 458.5 132.0 461.9 132.5 465.3 133.0 468.7 133.6 472.1 134.2 475.4 134.8 478.7 135.6 481.9 136.5 485.0 137.4 487.3 138.4 488.7 139.4 489.2 140.4 488.6 141.4 487.1 142.5 484.6 143.5 481.2 144.4 477.4 145.2 473.6 145.9 470.0 146.6 466.3 147.2 462.7 147.7 459.1 148.3 455.5 148.8 451.9 149.3 448.4 149.7 444.9 150.2 441.4 150.6 437.9 151.1 434.4'/><polyline points='173.0 246.2 173.4 243.7 173.8 241.2 174.2 238.7 174.7 236.3 175.1 233.8 175.6 231.4 176.1 229.0 176.6 226.7 177.2 224.3 177.7 222.0 178.3 219.7 179.0 217.4 179.6 215.2 180.4 213.1 181.3 211.0 182.3 209.1 183.3 207.9 184.4 207.2 185.4 207.2 186.3 207.9 187.3 209.1 188.3 211.0 189.3 213.5 190.0 216.0 190.7 218.5 191.3 221.0 191.8 223.4 192.3 225.9 192.8 228.4 193.2 230.9 193.6 233.4 194.0 236.0 194.4 238.5 194.8 241.0 195.1 243.6 195.4 246.2'/><polyline points='212.2 434.4 212.6 437.7 212.9 441.1 213.3 444.5 213.7 447.9 214.0 451.3 214.4 454.7 214.9 458.1 215.3 461.5 215.8 464.9 216.3 468.3 216.8 471.7 217.4 475.0 218.1 478.3 218.8 481.6 219.7 484.6 220.6 487.1 221.6 488.6 222.6 489.2 223.6 488.7 224.6 487.3 225.7 485.0 226.7 481.6 227.7 477.8 228.5 474.1 229.2 470.4 229.8 466.7 230.4 463.1 231.0 459.5 231.5 455.9 232.0 452.4 232.5 448.8 233.0 445.3 233.4 441.8 233.9 438.3 234.3 434.8'/><polyline points='256.7 244.0 257.1 241.5 257.5 239.0 258.0 236.6 258.4 234.1 258.9 231.7 259.4 229.3 259.9 226.9 260.4 224.6 261.0 222.2 261.6 219.9 262.2 217.7 262.9 215.5 263.6 213.3 264.5 211.2 265.5 209.3 266.6 208.0 267.6 207.3 268.6 207.2 269.6 207.8 270.5 208.9 271.5 210.8 272.5 213.2 273.3 215.7 273.9 218.2 274.5 220.6 275.1 223.1 275.6 225.6 276.0 228.1 276.5 230.6 276.9 233.1 277.3 235.6 277.7 238.2 278.0 240.7 278.4 243.3 278.7 245.9'/><polyline points='295.5 433.9 295.9 437.3 296.2 440.7 296.6 444.1 296.9 447.5 297.3 450.9 297.7 454.3 298.1 457.7 298.6 461.1 299.0 464.5 299.5 467.9 300.1 471.3 300.6 474.6 301.3 477.9 302.0 481.2 302.9 484.3 303.8 486.8 304.8 488.5 305.8 489.1 306.8 488.8 307.8 487.5 308.9 485.3 309.9 482.1 310.9 478.3 311.7 474.5 312.4 470.8 313.1 467.1 313.7 463.5 314.2 459.9 314.8 456.3 315.3 452.8 315.8 449.2 316.3 445.7 316.7 442.2 317.2 438.7 317.6 435.2'/><polyline points='339.9 244.3 340.3 241.8 340.8 239.3 341.2 236.8 341.7 234.4 342.1 232.0 342.6 229.6 343.1 227.2 343.7 224.8 344.2 222.5 344.8 220.2 345.4 217.9 346.1 215.7 346.9 213.5 347.7 211.5 348.7 209.5 349.7 208.1 350.8 207.3 351.8 207.2 352.8 207.7 353.7 208.8 354.7 210.5 355.7 212.8 356.5 215.3 357.2 217.8 357.8 220.3 358.3 222.8 358.8 225.3 359.3 227.8 359.7 230.3 360.1 232.8 360.5 235.3 360.9 237.8 361.3 240.4 361.7 242.9 362.0 245.5'/><polyline points='378.8 433.5 379.1 436.9 379.5 440.2 379.8 443.6 380.2 447.0 380.6 450.4 381.0 453.8 381.4 457.2 381.8 460.6 382.3 464.0 382.8 467.4 383.3 470.8 383.9 474.2 384.5 477.5 385.2 480.7 386.1 483.9 387.0 486.6 388.0 488.3 389.0 489.1 390.0 488.9 391.0 487.8 392.1 485.6 393.1 482.6 394.1 478.7 394.9 474.9 395.7 471.2 396.3 467.6 396.9 463.9 397.5 460.3 398.0 456.8 398.6 453.2 399.0 449.6 399.5 446.1 400.0 442.6 400.4 439.1 400.9 435.7'/><polyline points='423.2 244.6 423.6 242.1 424.0 239.6 424.5 237.1 424.9 234.7 425.4 232.3 425.9 229.9 426.4 227.5 426.9 225.1 427.5 222.8 428.1 220.5 428.7 218.2 429.4 216.0 430.1 213.8 430.9 211.7 431.9 209.7 432.9 208.3 433.9 207.4 435.0 207.2 435.9 207.6 436.9 208.6 437.9 210.2 438.9 212.5 439.7 215.0 440.4 217.5 441.0 220.0 441.6 222.5 442.1 224.9 442.5 227.4 443.0 229.9 443.4 232.4 443.8 235.0 444.2 237.5 444.6 240.0 444.9 242.6 445.3 245.2'/><polyline points='462.1 433.0 462.4 436.4 462.7 439.8 463.1 443.2 463.5 446.6 463.9 450.0 464.2 453.4 464.7 456.8 465.1 460.2 465.6 463.6 466.0 467.0 466.6 470.4 467.1 473.7 467.8 477.1 468.5 480.3 469.3 483.5 470.2 486.3 471.2 488.2 472.2 489.1 473.2 489.0 474.2 488.0 475.2 486.0 476.3 483.0 477.3 479.1 478.2 475.4 478.9 471.6 479.6 468.0 480.2 464.3 480.8 460.7 481.3 457.1 481.8 453.6 482.3 450.0 482.8 446.5 483.3 443.0 483.7 439.5 484.1 436.0'/><polyline points='506.5 244.8 506.9 242.3 507.3 239.9 507.8 237.4 508.2 235.0 508.7 232.5 509.2 230.1 509.7 227.7 510.2 225.4 510.7 223.0 511.3 220.7 511.9 218.5 512.6 216.2 513.3 214.0 514.2 211.9 515.1 209.9 516.1 208.4 517.2 207.5 518.2 207.2 519.2 207.5 520.1 208.4 521.1 210.0 522.1 212.2 522.9 214.7 523.6 217.2 524.3 219.7 524.8 222.2 525.3 224.7 525.8 227.2 526.3 229.7 526.7 232.2 527.1 234.7 527.5 237.2 527.9 239.8 528.2 242.3 528.6 244.9'/><polyline points='545.7 436.0 546.0 439.4 546.4 442.8 546.7 446.2 547.1 449.6 547.5 453.0 547.9 456.4 548.4 459.8 548.8 463.2 549.3 466.6 549.8 470.0 550.4 473.4 551.0 476.7 551.7 479.9 552.5 483.1 553.5 486.0 554.4 488.0 555.4 489.0 556.4 489.1 557.4 488.1 558.5 486.2 559.5 483.4 560.5 479.6 561.4 475.8 562.1 472.1 562.8 468.4 563.4 464.8 564.0 461.1 564.6 457.6 565.1 454.0 565.6 450.4 566.1 446.9 566.5 443.4 567.0 439.9 567.4 436.4 567.8 433.0'/><polyline points='589.7 245.1 590.2 242.6 590.6 240.2 591.0 237.7 591.5 235.2 591.9 232.8 592.4 230.4 592.9 228.0 593.4 225.7 594.0 223.3 594.6 221.0 595.2 218.7 595.8 216.5 596.6 214.3 597.4 212.2 598.3 210.2 599.3 208.5 600.4 207.5 601.4 207.2 602.4 207.4 603.3 208.3 604.3 209.8 605.3 211.9 606.2 214.5 606.9 216.9 607.5 219.4 608.1 221.9 608.6 224.4 609.1 226.9 609.5 229.4 610.0 231.9 610.4 234.4 610.8 236.9 611.1 239.5 611.5 242.0 611.8 244.6'/><polyline points='629.0 435.7 629.3 439.0 629.7 442.4 630.0 445.8 630.4 449.2 630.8 452.6 631.2 456.0 631.6 459.4 632.1 462.8 632.6 466.2 633.1 469.6 633.6 473.0 634.2 476.3 634.9 479.6 635.7 482.8 636.7 485.7 637.6 487.8 638.6 489.0 639.6 489.1 640.6 488.3 641.7 486.5 642.7 483.7 643.7 480.1 644.6 476.3 645.4 472.6 646.1 468.9 646.7 465.2 647.3 461.6 647.8 458.0 648.3 454.5 648.8 450.9 649.3 447.4 649.8 443.9 650.2 440.4 650.7 436.9 651.1 433.4'/><polyline points='673.0 245.5 673.4 243.0 673.9 240.5 674.3 238.0 674.7 235.6 675.2 233.1 675.7 230.7 676.2 228.3 676.7 226.0 677.2 223.6 677.8 221.3 678.4 219.0 679.1 216.8 679.8 214.6 680.6 212.4 681.5 210.4 682.5 208.7 683.5 207.6 684.6 207.2 685.6 207.3 686.5 208.1 687.5 209.6 688.5 211.6 689.4 214.2 690.1 216.6 690.8 219.1 691.3 221.6 691.9 224.1 692.3 226.6 692.8 229.1 693.2 231.6 693.6 234.1 694.0 236.6 694.4 239.2 694.8 241.7 695.1 244.3'/><polyline points='712.2 435.3 712.6 438.6 712.9 442.0 713.3 445.4 713.7 448.8 714.1 452.2 714.5 455.6 714.9 459.0 715.4 462.4 715.8 465.8 716.3 469.2 716.9 472.6 717.5 475.9 718.2 479.2 718.9 482.4 719.9 485.4 720.8 487.6 721.8 488.9 722.8 489.1 723.8 488.4 724.8 486.8 725.9 484.1 726.9 480.6 727.8 476.8 728.6 473.1 729.3 469.4 729.9 465.7 730.5 462.1 731.1 458.5 731.6 454.9 732.1 451.4 732.6 447.9 733.0 444.3 733.5 440.8 733.9 437.4 734.4 433.9'/><polyline points='756.3 245.8 756.7 243.3 757.1 240.8 757.5 238.3 758.0 235.9 758.5 233.5 758.9 231.0 759.4 228.7 759.9 226.3 760.5 223.9 761.0 221.6 761.6 219.3 762.3 217.1 763.0 214.9 763.8 212.7 764.7 210.7 765.7 208.9 766.7 207.7 767.7 207.2 768.7 207.3 769.7 208.0 770.7 209.4 771.7 211.3 772.6 213.9 773.4 216.4 774.0 218.8 774.6 221.3 775.1 223.8 775.6 226.3 776.1 228.8 776.5 231.3 776.9 233.8 777.3 236.3 777.7 238.9 778.0 241.4 778.4 244.0'/><polyline points='795.5 434.9 795.9 438.2 796.2 441.6 796.6 445.0 797.0 448.4 797.3 451.8 797.7 455.2 798.2 458.6 798.6 462.0 799.1 465.4 799.6 468.8 800.1 472.2 800.7 475.5 801.4 478.8 802.2 482.0 803.1 485.1 804.0 487.4 805.0 488.8 806.0 489.2 807.0 488.6 808.0 487.0 809.1 484.5 810.1 481.1 811.0 477.3 811.8 473.5 812.5 469.8 813.2 466.2 813.8 462.6 814.3 459.0 814.8 455.4 815.3 451.8 815.8 448.3 816.3 444.8 816.8 441.3 817.2 437.8 817.6 434.3'/><polyline points='839.5 246.1 840.0 243.6 840.4 241.1 840.8 238.7 841.3 236.2 841.7 233.8 842.2 231.3 842.7 229.0 843.2 226.6 843.7 224.2 844.3 221.9 844.9 219.6 845.5 217.4 846.2 215.1 847.0 213.0 847.9 210.9 848.9 209.1 849.9 207.8 850.9 207.2 851.9 207.2 852.9 207.9 853.9 209.2 854.9 211.1 855.8 213.6 856.6 216.1 857.3 218.6 857.8 221.0 858.4 223.5 858.9 226.0 859.3 228.5 859.8 231.0 860.2 233.5 860.6 236.0 861.0 238.6 861.3 241.1 861.7 243.7'/><polyline points='878.8 434.5 879.2 437.9 879.5 441.2 879.9 444.6 880.2 448.0 880.6 451.4 881.0 454.8 881.4 458.2 881.9 461.6 882.4 465.0 882.9 468.4 883.4 471.8 884.0 475.1 884.6 478.4 885.4 481.7 886.3 484.7 887.2 487.2 888.2 488.6 889.2 489.2 890.2 488.7 891.2 487.3 892.3 484.9 893.3 481.5 894.3 477.7 895.1 474.0 895.8 470.3 896.4 466.6 897.0 463.0 897.6 459.4 898.1 455.8 898.6 452.2 899.1 448.7 899.6 445.2 900.0 441.7 900.5 438.2 900.9 434.7'/><polyline points='923.2 243.9 923.6 241.4 924.1 238.9 924.5 236.5 925.0 234.0 925.5 231.6 925.9 229.2 926.5 226.8 927.0 224.5 927.5 222.2 928.1 219.9 928.8 217.6 929.5 215.4 930.2 213.2 931.1 211.2 932.1 209.2 933.1 207.9 934.2 207.3 935.2 207.2 936.2 207.8 937.1 209.0 938.1 210.8 939.1 213.3 939.8 215.8 940.5 218.3 941.1 220.7 941.6 223.2 942.1 225.7 942.6 228.2 943.0 230.7 943.5 233.2 943.9 235.7 944.2 238.3 944.6 240.8 945.0 243.4 945.3 246.0'/><polyline points='962.1 434.1 962.4 437.5 962.8 440.8 963.1 444.2 963.5 447.6 963.9 451.0 964.3 454.4 964.7 457.8 965.2 461.2 965.6 464.6 966.1 468.0 966.6 471.4 967.2 474.8 967.9 478.1 968.6 481.3 969.5 484.4 970.4 486.9 971.4 488.5 972.4 489.2 973.4 488.8 974.4 487.5 975.5 485.2 976.5 482.0 977.5 478.1 978.3 474.4 979.0 470.7 979.7 467.0 980.3 463.4 980.8 459.8 981.4 456.2 981.9 452.6 982.4 449.1 982.8 445.6 983.3 442.1 983.7 438.6 984.2 435.1'/><polyline points='1006.5 244.2 1006.9 241.7 1007.4 239.2 1007.8 236.8 1008.3 234.3 1008.7 231.9 1009.2 229.5 1009.7 227.1 1010.2 224.8 1010.8 222.4 1011.4 220.1 1012.0 217.9 1012.7 215.6 1013.5 213.5 1014.3 211.4 1015.3 209.4 1016.3 208.1 1017.4 207.3 1018.4 207.2 1019.4 207.7 1020.3 208.8 1021.3 210.6 1022.3 212.9'/></g>
<g fill='none' stroke='#00e6e6' stroke-opacity='0.09' stroke-width='1.4'><polyline points='23.1 212.2 23.8 214.7 24.5 217.2 25.0 219.7 25.5 222.2 26.0 224.7 26.4 227.2 26.9 229.7 27.3 232.2 27.6 234.7 28.0 237.3 28.4 239.8 28.7 242.4'/><polyline points='45.4 436.3 45.8 439.6 46.1 443.0 46.5 446.4 46.8 449.8 47.2 453.2 47.6 456.6 48.0 460.0 48.4 463.4 48.9 466.8 49.4 470.2 49.9 473.5 50.5 476.9 51.1 480.2 51.8 483.4 52.7 486.5 53.7 489.0 54.6 490.6 55.6 491.2 56.6 490.8 57.7 489.4 58.7 487.0 59.7 483.7 60.7 479.9 61.5 476.1 62.2 472.4 62.9 468.8 63.5 465.2 64.0 461.6 64.6 458.0 65.1 454.4 65.6 450.9 66.0 447.4 66.5 443.9 66.9 440.4 67.4 436.9'/><polyline points='90.2 242.9 90.6 240.4 91.0 237.9 91.5 235.5 91.9 233.0 92.4 230.6 92.9 228.2 93.4 225.8 93.9 223.4 94.5 221.1 95.1 218.8 95.7 216.5 96.3 214.2 97.1 212.0 97.9 209.9 98.9 207.9 99.9 206.4 100.9 205.4 101.9 205.2 102.9 205.5 103.9 206.5 104.9 208.1 105.8 210.4 106.6 212.9 107.3 215.4 107.9 217.9 108.5 220.4 109.0 222.9 109.5 225.4 109.9 227.9 110.3 230.4 110.7 232.9 111.1 235.5 111.4 238.0 111.8 240.6 112.1 243.1'/><polyline points='128.9 437.2 129.2 440.6 129.5 444.0 129.9 447.4 130.2 450.8 130.6 454.2 131.0 457.6 131.4 461.0 131.9 464.4 132.3 467.8 132.8 471.1 133.4 474.5 134.0 477.8 134.6 481.1 135.4 484.3 136.3 487.3 137.3 489.6 138.2 490.8 139.2 491.1 140.3 490.4 141.3 488.8 142.3 486.1 143.4 482.5 144.3 478.7 145.0 475.0 145.7 471.3 146.4 467.7 147.0 464.1 147.5 460.5 148.0 456.9 148.5 453.4 149.0 449.8 149.5 446.3 149.9 442.8 150.4 439.4 150.8 435.9'/><polyline points='173.2 244.7 173.6 242.2 174.1 239.7 174.5 237.2 174.9 234.7 175.4 232.3 175.9 229.9 176.4 227.5 176.9 225.1 177.4 222.7 178.0 220.4 178.6 218.1 179.2 215.8 179.9 213.6 180.6 211.4 181.5 209.3 182.5 207.4 183.5 206.0 184.5 205.3 185.6 205.2 186.5 205.8 187.5 207.0 188.5 208.8 189.4 211.2 190.2 213.8 190.9 216.2 191.5 218.7 192.0 221.2 192.5 223.7 192.9 226.2 193.4 228.7 193.8 231.2 194.1 233.8 194.5 236.3 194.9 238.9 195.2 241.4 195.6 244.0'/><polyline points='212.0 435.0 212.3 438.4 212.6 441.7 213.0 445.1 213.3 448.5 213.7 451.9 214.1 455.3 214.5 458.7 214.9 462.1 215.3 465.5 215.8 468.9 216.3 472.3 216.9 475.6 217.5 478.9 218.2 482.2 219.0 485.3 220.0 488.2 220.9 490.1 221.9 491.1 222.9 491.0 223.9 490.0 225.0 488.0 226.0 485.0 227.0 481.1 227.9 477.3 228.6 473.6 229.3 470.0 229.9 466.3 230.5 462.7 231.0 459.2 231.5 455.6 232.0 452.1 232.5 448.5 233.0 445.0 233.4 441.5 233.9 438.1 234.3 434.6'/><polyline points='256.7 243.7 257.1 241.2 257.5 238.7 258.0 236.3 258.4 233.8 258.9 231.4 259.4 229.0 259.9 226.6 260.4 224.2 260.9 221.8 261.5 219.5 262.1 217.2 262.8 215.0 263.5 212.7 264.3 210.6 265.2 208.6 266.2 206.8 267.2 205.7 268.2 205.2 269.2 205.3 270.2 206.1 271.2 207.5 272.1 209.6 273.0 212.1 273.8 214.6 274.4 217.1 275.0 219.6 275.5 222.1 276.0 224.6 276.4 227.1 276.8 229.6 277.2 232.1 277.6 234.7 278.0 237.2 278.3 239.8 278.7 242.3'/><polyline points='295.4 436.2 295.7 439.6 296.1 442.9 296.4 446.3 296.8 449.7 297.1 453.1 297.5 456.5 297.9 459.9 298.4 463.3 298.8 466.7 299.3 470.1 299.8 473.5 300.4 476.8 301.1 480.1 301.8 483.3 302.6 486.4 303.6 489.0 304.6 490.6 305.6 491.2 306.6 490.8 307.6 489.4 308.6 487.1 309.7 483.8 310.6 479.9 311.4 476.2 312.2 472.5 312.8 468.9 313.4 465.2 314.0 461.6 314.5 458.1 315.0 454.5 315.5 451.0 316.0 447.5 316.4 444.0 316.9 440.5 317.3 437.0'/><polyline points='340.1 243.0 340.6 240.5 341.0 238.0 341.4 235.5 341.9 233.1 342.4 230.6 342.8 228.2 343.3 225.8 343.9 223.5 344.4 221.1 345.0 218.8 345.6 216.5 346.3 214.3 347.0 212.1 347.8 210.0 348.8 208.0 349.8 206.4 350.9 205.5 351.9 205.2 352.9 205.5 353.8 206.5 354.8 208.1 355.8 210.4 356.6 212.9 357.3 215.4 357.9 217.9 358.4 220.3 358.9 222.8 359.4 225.3 359.8 227.8 360.3 230.4 360.7 232.9 361.0 235.4 361.4 238.0 361.7 240.5 362.1 243.1'/><polyline points='378.8 437.2 379.1 440.6 379.5 443.9 379.8 447.3 380.2 450.7 380.6 454.1 381.0 457.5 381.4 460.9 381.8 464.3 382.3 467.7 382.8 471.1 383.3 474.5 383.9 477.8 384.6 481.1 385.3 484.3 386.2 487.3 387.2 489.5 388.2 490.8 389.2 491.1 390.2 490.5 391.2 488.8 392.3 486.2 393.3 482.6 394.2 478.8 395.0 475.1 395.7 471.4 396.3 467.8 396.9 464.2 397.5 460.6 398.0 457.0 398.5 453.4 399.0 449.9 399.4 446.4 399.9 442.9 400.3 439.4 400.8 436.0'/><polyline points='423.2 244.7 423.6 242.2 424.0 239.7 424.4 237.2 424.9 234.8 425.3 232.3 425.8 229.9 426.3 227.5 426.8 225.1 427.3 222.8 427.9 220.4 428.5 218.1 429.1 215.8 429.8 213.6 430.6 211.4 431.4 209.3 432.4 207.4 433.5 206.0 434.5 205.3 435.5 205.2 436.5 205.7 437.5 206.9 438.4 208.7 439.4 211.2 440.2 213.7 440.8 216.2 441.4 218.7 441.9 221.2 442.4 223.7 442.9 226.2 443.3 228.7 443.7 231.2 444.1 233.7 444.5 236.3 444.8 238.8 445.2 241.4 445.5 243.9'/><polyline points='461.9 434.9 462.2 438.3 462.6 441.7 462.9 445.0 463.3 448.4 463.6 451.8 464.0 455.2 464.4 458.6 464.9 462.0 465.3 465.4 465.8 468.8 466.3 472.2 466.8 475.5 467.4 478.9 468.1 482.1 468.9 485.3 469.9 488.2 470.9 490.1 471.9 491.1 472.9 491.0 473.9 490.0 474.9 488.0 475.9 485.1 477.0 481.2 477.8 477.4 478.6 473.7 479.2 470.0 479.9 466.4 480.4 462.8 481.0 459.2 481.5 455.7 482.0 452.1 482.5 448.6 482.9 445.1 483.4 441.6 483.8 438.1 484.3 434.7'/><polyline points='506.6 243.8 507.1 241.3 507.5 238.8 507.9 236.3 508.4 233.9 508.8 231.4 509.3 229.0 509.8 226.6 510.3 224.2 510.9 221.9 511.4 219.6 512.1 217.3 512.7 215.0 513.4 212.8 514.2 210.6 515.1 208.6 516.1 206.8 517.2 205.7 518.2 205.2 519.2 205.3 520.2 206.1 521.1 207.5 522.1 209.6 523.0 212.1 523.7 214.6 524.4 217.1 524.9 219.6 525.4 222.1 525.9 224.6 526.4 227.1 526.8 229.6 527.2 232.1 527.6 234.6 527.9 237.2 528.3 239.7 528.6 242.3 528.9 244.9'/><polyline points='545.3 436.1 545.7 439.5 546.0 442.9 546.4 446.3 546.7 449.7 547.1 453.1 547.5 456.5 547.9 459.9 548.3 463.3 548.8 466.7 549.3 470.0 549.8 473.4 550.4 476.8 551.0 480.1 551.7 483.3 552.6 486.4 553.5 488.9 554.5 490.5 555.5 491.2 556.5 490.8 557.5 489.4 558.6 487.1 559.6 483.8 560.6 480.0 561.4 476.2 562.1 472.6 562.8 468.9 563.4 465.3 563.9 461.7 564.5 458.1 565.0 454.6 565.5 451.0 565.9 447.5 566.4 444.0 566.8 440.5 567.3 437.1'/><polyline points='590.1 243.0 590.5 240.5 590.9 238.0 591.4 235.5 591.8 233.1 592.3 230.7 592.8 228.2 593.3 225.9 593.8 223.5 594.4 221.1 595.0 218.8 595.6 216.5 596.2 214.3 597.0 212.1 597.8 210.0 598.7 208.0 599.8 206.4 600.8 205.5 601.8 205.2 602.8 205.5 603.8 206.5 604.7 208.1 605.7 210.3 606.5 212.8 607.2 215.3 607.8 217.8 608.4 220.3 608.9 222.8 609.4 225.3 609.8 227.8 610.2 230.3 610.6 232.8 611.0 235.4 611.3 237.9 611.7 240.5 612.0 243.1'/><polyline points='628.8 437.1 629.1 440.5 629.4 443.9 629.8 447.3 630.2 450.7 630.5 454.1 630.9 457.5 631.3 460.9 631.8 464.3 632.2 467.7 632.7 471.0 633.3 474.4 633.9 477.7 634.5 481.0 635.3 484.2 636.2 487.2 637.2 489.5 638.1 490.8 639.1 491.1 640.1 490.5 641.2 488.8 642.2 486.2 643.2 482.7 644.2 478.9 644.9 475.2 645.6 471.5 646.3 467.8 646.8 464.2 647.4 460.6 647.9 457.1 648.4 453.5 648.9 450.0 649.4 446.5 649.9 443.0 650.3 439.5 650.7 436.0'/><polyline points='673.1 244.8 673.5 242.3 674.0 239.8 674.4 237.3 674.8 234.8 675.3 232.4 675.8 229.9 676.3 227.5 676.8 225.2 677.3 222.8 677.9 220.5 678.5 218.2 679.1 215.9 679.8 213.6 680.5 211.5 681.4 209.4 682.4 207.4 683.4 206.0 684.4 205.3 685.4 205.2 686.4 205.7 687.4 206.9 688.4 208.7 689.3 211.1 690.1 213.6 690.8 216.1 691.3 218.6 691.9 221.1 692.4 223.6 692.8 226.1 693.3 228.6 693.7 231.1 694.0 233.7 694.4 236.2 694.8 238.8 695.1 241.3 695.5 243.9'/><polyline points='711.9 434.8 712.2 438.2 712.5 441.6 712.9 445.0 713.2 448.4 713.6 451.8 714.0 455.2 714.4 458.6 714.8 462.0 715.2 465.4 715.7 468.7 716.2 472.1 716.8 475.5 717.4 478.8 718.1 482.1 718.9 485.2 719.8 488.1 720.8 490.1 721.8 491.0 722.8 491.0 723.8 490.0 724.8 488.1 725.9 485.1 726.9 481.2 727.8 477.5 728.5 473.8 729.2 470.1 729.8 466.5 730.4 462.9 730.9 459.3 731.4 455.7 731.9 452.2 732.4 448.7 732.9 445.2 733.3 441.7 733.8 438.2 734.2 434.7'/><polyline points='756.6 243.8 757.0 241.3 757.4 238.8 757.9 236.4 758.3 233.9 758.8 231.5 759.3 229.0 759.8 226.6 760.3 224.3 760.8 221.9 761.4 219.6 762.0 217.3 762.7 215.0 763.4 212.8 764.1 210.7 765.1 208.6 766.1 206.8 767.1 205.7 768.1 205.2 769.1 205.3 770.1 206.1 771.1 207.5 772.0 209.5 772.9 212.1 773.7 214.6 774.3 217.1 774.9 219.5 775.4 222.0 775.9 224.5 776.3 227.0 776.7 229.5 777.1 232.1 777.5 234.6 777.9 237.1 778.2 239.7 778.6 242.3 778.9 244.8'/><polyline points='795.3 436.1 795.6 439.5 796.0 442.8 796.3 446.2 796.7 449.6 797.1 453.0 797.4 456.4 797.9 459.8 798.3 463.2 798.7 466.6 799.2 470.0 799.7 473.4 800.3 476.7 801.0 480.0 801.7 483.2 802.5 486.3 803.5 488.9 804.5 490.5 805.5 491.2 806.5 490.8 807.5 489.5 808.5 487.1 809.6 483.9 810.5 480.0 811.3 476.3 812.1 472.6 812.7 469.0 813.3 465.3 813.9 461.7 814.4 458.2 814.9 454.6 815.4 451.1 815.9 447.6 816.4 444.1 816.8 440.6 817.2 437.1'/><polyline points='840.0 243.0 840.5 240.5 840.9 238.0 841.3 235.6 841.8 233.1 842.3 230.7 842.7 228.3 843.2 225.9 843.8 223.5 844.3 221.2 844.9 218.9 845.5 216.6 846.2 214.3 846.9 212.1 847.7 210.0 848.7 208.0 849.7 206.4 850.7 205.5 851.7 205.2 852.7 205.5 853.7 206.4 854.7 208.0 855.6 210.3 856.5 212.8 857.2 215.3 857.8 217.8 858.3 220.3 858.8 222.8 859.3 225.3 859.7 227.8 860.2 230.3 860.6 232.8 860.9 235.3 861.3 237.9 861.6 240.5 862.0 243.0'/><polyline points='878.7 437.1 879.0 440.5 879.4 443.8 879.7 447.2 880.1 450.6 880.5 454.0 880.9 457.4 881.3 460.8 881.7 464.2 882.2 467.6 882.7 471.0 883.2 474.3 883.8 477.7 884.5 481.0 885.2 484.2 886.1 487.2 887.1 489.5 888.1 490.8 889.1 491.1 890.1 490.5 891.1 488.9 892.1 486.3 893.2 482.7 894.1 478.9 894.9 475.2 895.6 471.5 896.2 467.9 896.8 464.3 897.4 460.7 897.9 457.1 898.4 453.6 898.9 450.0 899.3 446.5 899.8 443.0 900.2 439.6 900.7 436.1'/><polyline points='923.1 244.8 923.5 242.3 923.9 239.8 924.3 237.3 924.8 234.9 925.2 232.4 925.7 230.0 926.2 227.6 926.7 225.2 927.3 222.8 927.8 220.5 928.4 218.2 929.0 215.9 929.7 213.7 930.5 211.5 931.3 209.4 932.3 207.5 933.4 206.1 934.4 205.3 935.4 205.2 936.4 205.7 937.3 206.9 938.3 208.7 939.3 211.1 940.0 213.6 940.7 216.1 941.3 218.6 941.8 221.1 942.3 223.6 942.8 226.1 943.2 228.6 943.6 231.1 944.0 233.6 944.4 236.2 944.7 238.7 945.1 241.3 945.4 243.8'/><polyline points='961.8 434.8 962.1 438.2 962.5 441.5 962.8 444.9 963.2 448.3 963.5 451.7 963.9 455.1 964.3 458.5 964.8 461.9 965.2 465.3 965.7 468.7 966.2 472.1 966.7 475.4 967.3 478.7 968.0 482.0 968.8 485.1 969.8 488.1 970.8 490.0 971.7 491.0 972.7 491.0 973.8 490.1 974.8 488.1 975.8 485.2 976.9 481.3 977.7 477.5 978.5 473.8 979.1 470.2 979.8 466.5 980.3 462.9 980.9 459.4 981.4 455.8 981.9 452.3 982.4 448.7 982.8 445.2 983.3 441.7 983.7 438.3 984.2 434.8'/><polyline points='1006.5 243.9 1007.0 241.4 1007.4 238.9 1007.8 236.4 1008.3 233.9 1008.7 231.5 1009.2 229.1 1009.7 226.7 1010.2 224.3 1010.8 222.0 1011.3 219.6 1012.0 217.3 1012.6 215.1 1013.3 212.9 1014.1 210.7 1015.0 208.7 1016.0 206.9 1017.1 205.7 1018.1 205.2 1019.1 205.3 1020.0 206.1 1021.0 207.5 1022.0 209.5 1022.9 212.0'/></g>
<g fill='none' stroke='#00e6e6' stroke-opacity='1.0' stroke-width='1.8'><polyline points='21.0 223.9 21.8 226.4 22.6 228.8 23.2 231.2 23.8 233.7 24.4 236.1 24.9 238.6 25.4 241.0 25.9 243.5 26.3 246.0 26.8 248.5 27.2 251.0 27.6 253.6 28.0 256.1 28.4 258.7 28.8 261.3 29.2 263.9 29.5 266.5 29.9 269.1 30.2 271.8 30.6 274.4 30.9 277.1 31.3 279.8 31.6 282.5 31.9 285.2 32.3 287.9 32.6 290.7 32.9 293.5 33.2 296.2 33.5 299.0 33.9 301.8 34.2 304.7 34.5 307.5 34.8 310.4 35.1 313.3 35.4 316.1 35.7 319.1 36.0 322.0 36.3 324.9 36.6 327.9 36.9 330.8 37.2 333.8 37.5 336.8 37.8 339.8 38.1 342.8 38.5 345.9 38.8 349.0 39.1 352.0 39.4 355.1 39.7 358.2 40.0 361.3 40.3 364.5 40.6 367.6 40.9 370.8 41.2 374.0 41.6 377.2 41.9 380.4 42.2 383.6 42.5 386.8 42.9 390.1 43.2 393.3 43.5 396.6 43.9 399.9 44.2 403.2 44.6 406.5 44.9 409.9 45.3 413.2 45.7 416.6 46.0 419.9 46.4 423.3 46.8 426.7 47.2 430.1 47.6 433.5 48.1 436.9 48.5 440.4 49.0 443.8 49.5 447.2 50.0 450.7 50.5 454.1 51.0 457.5 51.6 460.9 52.3 464.3 53.0 467.6 53.8 470.9'/><polyline points='62.8 468.3 63.6 464.5 64.3 460.7 65.0 457.0 65.5 453.4 66.1 449.7 66.6 446.1 67.1 442.5 67.6 439.0 68.0 435.4 68.5 431.9 68.9 428.4 69.3 424.9 69.7 421.4 70.1 418.0 70.5 414.5 70.9 411.1 71.2 407.7 71.6 404.3 71.9 401.0 72.3 397.6 72.6 394.3 73.0 391.0 73.3 387.7 73.6 384.4 74.0 381.2 74.3 377.9 74.6 374.7 74.9 371.5 75.2 368.3 75.6 365.2 75.9 362.0 76.2 358.9 76.5 355.7 76.8 352.6 77.1 349.6 77.4 346.5 77.7 343.4 78.0 340.4 78.3 337.4 78.6 334.4 78.9 331.4 79.2 328.4 79.5 325.5 79.8 322.5 80.1 319.6 80.4 316.7 80.8 313.8 81.1 311.0 81.4 308.1 81.7 305.3 82.0 302.5 82.3 299.7 82.6 296.9 82.9 294.1 83.2 291.4 83.6 288.6 83.9 285.9 84.2 283.2 84.6 280.6 84.9 277.9 85.2 275.2 85.6 272.6 85.9 270.0 86.3 267.4 86.6 264.9 87.0 262.3 87.4 259.8 87.7 257.2 88.1 254.7 88.5 252.3 88.9 249.8 89.3 247.4 89.8 244.9 90.2 242.6 90.7 240.2 91.2 237.8 91.7 235.5 92.2 233.2 92.8 230.9 93.4 228.7 94.0 226.5 94.8 224.4 95.6 222.3'/><polyline points='104.5 224.5 105.3 226.9 106.0 229.3 106.7 231.8 107.3 234.2 107.8 236.7 108.3 239.1 108.8 241.6 109.3 244.1 109.8 246.6 110.2 249.1 110.6 251.6 111.0 254.1 111.4 256.7 111.8 259.3 112.2 261.9 112.6 264.5 112.9 267.1 113.3 269.7 113.6 272.4 114.0 275.0 114.3 277.7 114.7 280.4 115.0 283.1 115.3 285.8 115.7 288.6 116.0 291.3 116.3 294.1 116.6 296.9 116.9 299.7 117.3 302.5 117.6 305.3 117.9 308.2 118.2 311.0 118.5 313.9 118.8 316.8 119.1 319.7 119.4 322.6 119.7 325.6 120.0 328.5 120.3 331.5 120.6 334.5 120.9 337.5 121.2 340.5 121.5 343.5 121.8 346.6 122.1 349.6 122.4 352.7 122.8 355.8 123.1 358.9 123.4 362.0 123.7 365.2 124.0 368.3 124.3 371.5 124.6 374.7 124.9 377.9 125.3 381.1 125.6 384.3 125.9 387.5 126.3 390.8 126.6 394.1 126.9 397.3 127.3 400.6 127.6 404.0 128.0 407.3 128.3 410.6 128.7 414.0 129.1 417.3 129.4 420.7 129.8 424.1 130.2 427.5 130.6 430.9 131.1 434.3 131.5 437.7 131.9 441.1 132.4 444.6 132.9 448.0 133.4 451.4 133.9 454.9 134.5 458.3 135.1 461.7 135.8 465.0 136.5 468.4'/><polyline points='146.3 467.4 147.1 463.6 147.8 459.9 148.4 456.2 149.0 452.5 149.5 448.9 150.1 445.3 150.5 441.7 151.0 438.2 151.5 434.6 151.9 431.1 152.3 427.6 152.7 424.1 153.1 420.6 153.5 417.2 153.9 413.8 154.3 410.4 154.6 407.0 155.0 403.6 155.3 400.2 155.7 396.9 156.0 393.6 156.4 390.3 156.7 387.0 157.0 383.7 157.4 380.5 157.7 377.2 158.0 374.0 158.3 370.8 158.6 367.6 158.9 364.4 159.3 361.3 159.6 358.2 159.9 355.0 160.2 351.9 160.5 348.9 160.8 345.8 161.1 342.7 161.4 339.7 161.7 336.7 162.0 333.7 162.3 330.7 162.6 327.8 162.9 324.8 163.2 321.9 163.5 319.0 163.8 316.1 164.1 313.2 164.5 310.3 164.8 307.5 165.1 304.6 165.4 301.8 165.7 299.0 166.0 296.3 166.3 293.5 166.6 290.8 167.0 288.0 167.3 285.3 167.6 282.6 167.9 279.9 168.3 277.3 168.6 274.7 169.0 272.0 169.3 269.4 169.7 266.8 170.0 264.3 170.4 261.7 170.8 259.2 171.1 256.7 171.5 254.2 171.9 251.7 172.3 249.3 172.8 246.8 173.2 244.4 173.6 242.0 174.1 239.6 174.6 237.3 175.1 235.0 175.7 232.7 176.2 230.4 176.8 228.2 177.5 226.0 178.2 223.9'/><polyline points='187.1 222.5 188.0 225.0 188.8 227.4 189.5 229.9 190.1 232.3 190.7 234.7 191.3 237.2 191.8 239.7 192.3 242.1 192.7 244.6 193.2 247.1 193.6 249.6 194.0 252.2 194.4 254.7 194.8 257.3 195.2 259.8 195.6 262.4 196.0 265.0 196.3 267.7 196.7 270.3 197.0 272.9 197.4 275.6 197.7 278.3 198.1 281.0 198.4 283.7 198.7 286.4 199.1 289.2 199.4 291.9 199.7 294.7 200.0 297.5 200.3 300.3 200.6 303.1 201.0 305.9 201.3 308.8 201.6 311.7 201.9 314.5 202.2 317.4 202.5 320.4 202.8 323.3 203.1 326.2 203.4 329.2 203.7 332.2 204.0 335.1 204.3 338.1 204.6 341.2 204.9 344.2 205.2 347.3 205.5 350.3 205.8 353.4 206.1 356.5 206.5 359.6 206.8 362.7 207.1 365.9 207.4 369.0 207.7 372.2 208.0 375.4 208.3 378.6 208.7 381.8 209.0 385.0 209.3 388.3 209.6 391.5 210.0 394.8 210.3 398.1 210.7 401.4 211.0 404.7 211.4 408.0 211.7 411.4 212.1 414.7 212.5 418.1 212.8 421.4 213.2 424.8 213.6 428.2 214.0 431.6 214.5 435.0 214.9 438.5 215.4 441.9 215.8 445.3 216.3 448.8 216.8 452.2 217.4 455.6 217.9 459.0 218.6 462.4 219.2 465.8 220.0 469.1'/><polyline points='228.9 470.5 229.8 466.6 230.5 462.8 231.2 459.1 231.9 455.4 232.4 451.8 233.0 448.2 233.5 444.6 234.0 441.0 234.4 437.4 234.9 433.9 235.3 430.4 235.7 426.9 236.1 423.4 236.5 419.9 236.9 416.5 237.3 413.1 237.7 409.6 238.0 406.3 238.4 402.9 238.7 399.5 239.1 396.2 239.4 392.9 239.8 389.6 240.1 386.3 240.4 383.0 240.7 379.8 241.1 376.5 241.4 373.3 241.7 370.1 242.0 366.9 242.3 363.8 242.6 360.6 243.0 357.5 243.3 354.4 243.6 351.3 243.9 348.2 244.2 345.2 244.5 342.1 244.8 339.1 245.1 336.1 245.4 333.1 245.7 330.1 246.0 327.1 246.3 324.2 246.6 321.3 246.9 318.4 247.2 315.5 247.5 312.6 247.8 309.7 248.1 306.9 248.5 304.1 248.8 301.2 249.1 298.5 249.4 295.7 249.7 292.9 250.0 290.2 250.4 287.5 250.7 284.8 251.0 282.1 251.3 279.4 251.7 276.7 252.0 274.1 252.4 271.5 252.7 268.9 253.1 266.3 253.4 263.7 253.8 261.2 254.2 258.7 254.5 256.2 254.9 253.7 255.3 251.2 255.7 248.7 256.2 246.3 256.6 243.9 257.1 241.5 257.5 239.1 258.0 236.8 258.5 234.5 259.1 232.2 259.7 230.0 260.3 227.7 261.0 225.6 261.7 223.5'/><polyline points='270.6 223.0 271.5 225.5 272.3 227.9 273.0 230.3 273.6 232.8 274.1 235.2 274.7 237.7 275.2 240.1 275.7 242.6 276.1 245.1 276.6 247.6 277.0 250.1 277.4 252.6 277.8 255.2 278.2 257.8 278.6 260.3 279.0 262.9 279.4 265.5 279.7 268.2 280.1 270.8 280.4 273.4 280.8 276.1 281.1 278.8 281.4 281.5 281.8 284.2 282.1 286.9 282.4 289.7 282.8 292.4 283.1 295.2 283.4 298.0 283.7 300.8 284.0 303.6 284.3 306.5 284.6 309.3 285.0 312.2 285.3 315.1 285.6 318.0 285.9 320.9 286.2 323.8 286.5 326.8 286.8 329.7 287.1 332.7 287.4 335.7 287.7 338.7 288.0 341.7 288.3 344.8 288.6 347.8 288.9 350.9 289.2 354.0 289.5 357.1 289.8 360.2 290.1 363.3 290.5 366.5 290.8 369.6 291.1 372.8 291.4 376.0 291.7 379.2 292.0 382.4 292.4 385.6 292.7 388.9 293.0 392.1 293.4 395.4 293.7 398.7 294.0 402.0 294.4 405.3 294.8 408.6 295.1 412.0 295.5 415.3 295.9 418.7 296.2 422.1 296.6 425.5 297.0 428.9 297.4 432.3 297.9 435.7 298.3 439.1 298.8 442.5 299.2 446.0 299.7 449.4 300.2 452.8 300.8 456.3 301.4 459.7 302.0 463.1 302.7 466.4 303.5 469.7'/><polyline points='312.4 469.8 313.2 465.9 314.0 462.2 314.7 458.5 315.3 454.8 315.8 451.1 316.4 447.5 316.9 443.9 317.4 440.3 317.8 436.8 318.3 433.3 318.7 429.7 319.1 426.2 319.5 422.8 319.9 419.3 320.3 415.9 320.7 412.4 321.0 409.0 321.4 405.7 321.8 402.3 322.1 398.9 322.5 395.6 322.8 392.3 323.1 389.0 323.5 385.7 323.8 382.5 324.1 379.2 324.4 376.0 324.8 372.8 325.1 369.6 325.4 366.4 325.7 363.2 326.0 360.1 326.3 357.0 326.6 353.8 326.9 350.8 327.3 347.7 327.6 344.6 327.9 341.6 328.2 338.5 328.5 335.5 328.8 332.5 329.1 329.6 329.4 326.6 329.7 323.7 330.0 320.7 330.3 317.8 330.6 315.0 330.9 312.1 331.2 309.2 331.5 306.4 331.8 303.6 332.1 300.8 332.5 298.0 332.8 295.2 333.1 292.4 333.4 289.7 333.7 287.0 334.1 284.3 334.4 281.6 334.7 278.9 335.1 276.3 335.4 273.6 335.7 271.0 336.1 268.4 336.4 265.8 336.8 263.3 337.2 260.7 337.5 258.2 337.9 255.7 338.3 253.2 338.7 250.8 339.1 248.3 339.6 245.9 340.0 243.5 340.5 241.1 340.9 238.7 341.4 236.4 342.0 234.1 342.5 231.8 343.1 229.6 343.7 227.3 344.4 225.2 345.2 223.1'/><polyline points='354.1 223.4 355.0 225.9 355.7 228.3 356.4 230.7 357.0 233.2 357.6 235.6 358.1 238.1 358.6 240.6 359.1 243.0 359.5 245.5 360.0 248.0 360.4 250.6 360.8 253.1 361.2 255.6 361.6 258.2 362.0 260.8 362.4 263.4 362.7 266.0 363.1 268.6 363.5 271.2 363.8 273.9 364.1 276.6 364.5 279.3 364.8 282.0 365.2 284.7 365.5 287.4 365.8 290.2 366.1 292.9 366.4 295.7 366.8 298.5 367.1 301.3 367.4 304.1 367.7 307.0 368.0 309.8 368.3 312.7 368.6 315.6 368.9 318.5 369.2 321.4 369.5 324.3 369.9 327.3 370.2 330.2 370.5 333.2 370.8 336.2 371.1 339.2 371.4 342.3 371.7 345.3 372.0 348.4 372.3 351.4 372.6 354.5 372.9 357.6 373.2 360.7 373.5 363.9 373.8 367.0 374.1 370.2 374.5 373.3 374.8 376.5 375.1 379.7 375.4 383.0 375.7 386.2 376.1 389.4 376.4 392.7 376.7 396.0 377.1 399.3 377.4 402.6 377.8 405.9 378.1 409.2 378.5 412.6 378.9 415.9 379.2 419.3 379.6 422.7 380.0 426.0 380.4 429.4 380.8 432.8 381.3 436.3 381.7 439.7 382.2 443.1 382.6 446.6 383.1 450.0 383.7 453.4 384.2 456.8 384.8 460.3 385.4 463.6 386.1 467.0 386.9 470.3'/><polyline points='395.8 469.1 396.7 465.3 397.4 461.5 398.1 457.8 398.7 454.2 399.3 450.5 399.8 446.9 400.3 443.3 400.8 439.7 401.2 436.2 401.7 432.6 402.1 429.1 402.5 425.6 402.9 422.2 403.3 418.7 403.7 415.3 404.1 411.9 404.4 408.5 404.8 405.1 405.1 401.7 405.5 398.4 405.8 395.0 406.2 391.7 406.5 388.4 406.8 385.1 407.2 381.9 407.5 378.6 407.8 375.4 408.1 372.2 408.5 369.0 408.8 365.8 409.1 362.7 409.4 359.5 409.7 356.4 410.0 353.3 410.3 350.2 410.6 347.1 410.9 344.1 411.2 341.0 411.5 338.0 411.8 335.0 412.1 332.0 412.4 329.1 412.8 326.1 413.1 323.2 413.4 320.2 413.7 317.3 414.0 314.4 414.3 311.6 414.6 308.7 414.9 305.9 415.2 303.1 415.5 300.3 415.8 297.5 416.1 294.7 416.5 292.0 416.8 289.2 417.1 286.5 417.4 283.8 417.8 281.1 418.1 278.5 418.4 275.8 418.8 273.2 419.1 270.6 419.5 268.0 419.8 265.4 420.2 262.8 420.6 260.3 420.9 257.8 421.3 255.3 421.7 252.8 422.1 250.3 422.5 247.9 423.0 245.5 423.4 243.1 423.9 240.7 424.3 238.3 424.8 236.0 425.4 233.7 425.9 231.4 426.5 229.2 427.2 227.0 427.9 224.8 428.7 222.7'/><polyline points='437.6 223.9 438.4 226.3 439.2 228.8 439.8 231.2 440.4 233.6 441.0 236.1 441.5 238.5 442.0 241.0 442.5 243.5 442.9 246.0 443.4 248.5 443.8 251.0 444.2 253.6 444.6 256.1 445.0 258.7 445.4 261.3 445.8 263.9 446.1 266.5 446.5 269.1 446.8 271.7 447.2 274.4 447.5 277.1 447.9 279.8 448.2 282.5 448.5 285.2 448.9 287.9 449.2 290.7 449.5 293.4 449.8 296.2 450.1 299.0 450.5 301.8 450.8 304.7 451.1 307.5 451.4 310.4 451.7 313.2 452.0 316.1 452.3 319.0 452.6 321.9 452.9 324.9 453.2 327.8 453.5 330.8 453.8 333.8 454.1 336.8 454.4 339.8 454.7 342.8 455.0 345.9 455.4 348.9 455.7 352.0 456.0 355.1 456.3 358.2 456.6 361.3 456.9 364.4 457.2 367.6 457.5 370.8 457.8 373.9 458.2 377.1 458.5 380.3 458.8 383.6 459.1 386.8 459.5 390.0 459.8 393.3 460.1 396.6 460.5 399.9 460.8 403.2 461.2 406.5 461.5 409.8 461.9 413.2 462.3 416.5 462.6 419.9 463.0 423.3 463.4 426.7 463.8 430.1 464.2 433.5 464.7 436.9 465.1 440.3 465.6 443.8 466.1 447.2 466.6 450.6 467.1 454.1 467.6 457.5 468.2 460.9 468.9 464.3 469.6 467.6 470.4 470.9'/><polyline points='479.3 468.3 480.2 464.5 480.9 460.8 481.5 457.1 482.1 453.4 482.7 449.8 483.2 446.2 483.7 442.6 484.2 439.0 484.6 435.5 485.1 431.9 485.5 428.4 485.9 424.9 486.3 421.5 486.7 418.0 487.1 414.6 487.5 411.2 487.8 407.8 488.2 404.4 488.5 401.0 488.9 397.7 489.2 394.4 489.6 391.0 489.9 387.8 490.2 384.5 490.6 381.2 490.9 378.0 491.2 374.8 491.5 371.6 491.8 368.4 492.2 365.2 492.5 362.0 492.8 358.9 493.1 355.8 493.4 352.7 493.7 349.6 494.0 346.5 494.3 343.5 494.6 340.4 494.9 337.4 495.2 334.4 495.5 331.4 495.8 328.5 496.1 325.5 496.4 322.6 496.7 319.6 497.0 316.7 497.4 313.9 497.7 311.0 498.0 308.1 498.3 305.3 498.6 302.5 498.9 299.7 499.2 296.9 499.5 294.2 499.8 291.4 500.2 288.7 500.5 286.0 500.8 283.3 501.1 280.6 501.5 277.9 501.8 275.3 502.2 272.7 502.5 270.0 502.9 267.5 503.2 264.9 503.6 262.3 504.0 259.8 504.3 257.3 504.7 254.8 505.1 252.3 505.5 249.8 505.9 247.4 506.4 245.0 506.8 242.6 507.3 240.2 507.8 237.8 508.3 235.5 508.8 233.2 509.4 231.0 510.0 228.7 510.6 226.5 511.3 224.4 512.2 222.3'/><polyline points='521.1 224.4 521.9 226.9 522.6 229.3 523.3 231.7 523.9 234.2 524.4 236.6 524.9 239.1 525.4 241.6 525.9 244.0 526.3 246.5 526.8 249.1 527.2 251.6 527.6 254.1 528.0 256.7 528.4 259.2 528.8 261.8 529.2 264.4 529.5 267.1 529.9 269.7 530.2 272.3 530.6 275.0 530.9 277.7 531.3 280.4 531.6 283.1 531.9 285.8 532.3 288.5 532.6 291.3 532.9 294.1 533.2 296.8 533.5 299.6 533.8 302.5 534.2 305.3 534.5 308.1 534.8 311.0 535.1 313.9 535.4 316.8 535.7 319.7 536.0 322.6 536.3 325.5 536.6 328.5 536.9 331.5 537.2 334.4 537.5 337.4 537.8 340.5 538.1 343.5 538.4 346.5 538.7 349.6 539.0 352.7 539.4 355.8 539.7 358.9 540.0 362.0 540.3 365.1 540.6 368.3 540.9 371.5 541.2 374.6 541.5 377.8 541.9 381.0 542.2 384.3 542.5 387.5 542.8 390.8 543.2 394.0 543.5 397.3 543.9 400.6 544.2 403.9 544.6 407.2 544.9 410.6 545.3 413.9 545.7 417.3 546.0 420.7 546.4 424.0 546.8 427.4 547.2 430.8 547.7 434.2 548.1 437.7 548.5 441.1 549.0 444.5 549.5 448.0 550.0 451.4 550.5 454.8 551.1 458.2 551.7 461.6 552.4 465.0 553.1 468.3'/><polyline points='562.9 467.4 563.7 463.7 564.4 459.9 565.0 456.2 565.6 452.6 566.1 448.9 566.6 445.3 567.1 441.8 567.6 438.2 568.1 434.6 568.5 431.1 568.9 427.6 569.3 424.1 569.7 420.7 570.1 417.2 570.5 413.8 570.9 410.4 571.2 407.0 571.6 403.6 571.9 400.3 572.3 396.9 572.6 393.6 573.0 390.3 573.3 387.0 573.6 383.7 574.0 380.5 574.3 377.2 574.6 374.0 574.9 370.8 575.2 367.6 575.5 364.5 575.9 361.3 576.2 358.2 576.5 355.1 576.8 352.0 577.1 348.9 577.4 345.8 577.7 342.8 578.0 339.7 578.3 336.7 578.6 333.7 578.9 330.7 579.2 327.8 579.5 324.8 579.8 321.9 580.1 319.0 580.4 316.1 580.7 313.2 581.0 310.3 581.4 307.5 581.7 304.7 582.0 301.9 582.3 299.1 582.6 296.3 582.9 293.5 583.2 290.8 583.6 288.1 583.9 285.3 584.2 282.7 584.5 280.0 584.9 277.3 585.2 274.7 585.6 272.1 585.9 269.5 586.3 266.9 586.6 264.3 587.0 261.7 587.4 259.2 587.7 256.7 588.1 254.2 588.5 251.7 588.9 249.3 589.4 246.8 589.8 244.4 590.2 242.0 590.7 239.7 591.2 237.3 591.7 235.0 592.2 232.7 592.8 230.4 593.4 228.2 594.1 226.0 594.8 223.9'/><polyline points='603.7 222.5 604.6 225.0 605.4 227.4 606.1 229.9 606.7 232.3 607.3 234.7 607.9 237.2 608.4 239.6 608.9 242.1 609.3 244.6 609.8 247.1 610.2 249.6 610.6 252.1 611.0 254.7 611.4 257.3 611.8 259.8 612.2 262.4 612.6 265.0 612.9 267.6 613.3 270.3 613.6 272.9 614.0 275.6 614.3 278.3 614.7 281.0 615.0 283.7 615.3 286.4 615.6 289.1 616.0 291.9 616.3 294.7 616.6 297.5 616.9 300.3 617.2 303.1 617.6 305.9 617.9 308.8 618.2 311.6 618.5 314.5 618.8 317.4 619.1 320.3 619.4 323.3 619.7 326.2 620.0 329.2 620.3 332.1 620.6 335.1 620.9 338.1 621.2 341.1 621.5 344.2 621.8 347.2 622.1 350.3 622.4 353.4 622.7 356.5 623.1 359.6 623.4 362.7 623.7 365.8 624.0 369.0 624.3 372.2 624.6 375.4 624.9 378.6 625.3 381.8 625.6 385.0 625.9 388.2 626.2 391.5 626.6 394.8 626.9 398.1 627.3 401.3 627.6 404.7 628.0 408.0 628.3 411.3 628.7 414.7 629.1 418.0 629.4 421.4 629.8 424.8 630.2 428.2 630.6 431.6 631.1 435.0 631.5 438.4 632.0 441.9 632.4 445.3 632.9 448.7 633.4 452.2 634.0 455.6 634.5 459.0 635.2 462.4 635.8 465.8 636.6 469.1'/><polyline points='645.4 470.5 646.4 466.6 647.1 462.9 647.8 459.2 648.5 455.5 649.0 451.8 649.6 448.2 650.1 444.6 650.6 441.0 651.0 437.4 651.5 433.9 651.9 430.4 652.3 426.9 652.7 423.4 653.1 419.9 653.5 416.5 653.9 413.1 654.3 409.7 654.6 406.3 655.0 402.9 655.3 399.6 655.7 396.2 656.0 392.9 656.4 389.6 656.7 386.3 657.0 383.1 657.3 379.8 657.7 376.6 658.0 373.4 658.3 370.2 658.6 367.0 658.9 363.8 659.2 360.7 659.6 357.5 659.9 354.4 660.2 351.3 660.5 348.2 660.8 345.2 661.1 342.1 661.4 339.1 661.7 336.1 662.0 333.1 662.3 330.1 662.6 327.2 662.9 324.2 663.2 321.3 663.5 318.4 663.8 315.5 664.1 312.6 664.4 309.7 664.7 306.9 665.1 304.1 665.4 301.3 665.7 298.5 666.0 295.7 666.3 292.9 666.6 290.2 666.9 287.5 667.3 284.8 667.6 282.1 667.9 279.4 668.3 276.8 668.6 274.1 669.0 271.5 669.3 268.9 669.7 266.3 670.0 263.8 670.4 261.2 670.8 258.7 671.1 256.2 671.5 253.7 671.9 251.2 672.3 248.8 672.8 246.3 673.2 243.9 673.7 241.5 674.1 239.2 674.6 236.8 675.1 234.5 675.7 232.2 676.3 230.0 676.9 227.8 677.6 225.6 678.3 223.5'/><polyline points='687.2 223.0 688.1 225.4 688.9 227.9 689.5 230.3 690.2 232.7 690.7 235.2 691.3 237.6 691.8 240.1 692.3 242.6 692.7 245.1 693.2 247.6 693.6 250.1 694.0 252.6 694.4 255.2 694.8 257.7 695.2 260.3 695.6 262.9 695.9 265.5 696.3 268.1 696.7 270.8 697.0 273.4 697.4 276.1 697.7 278.8 698.0 281.5 698.4 284.2 698.7 286.9 699.0 289.7 699.4 292.4 699.7 295.2 700.0 298.0 700.3 300.8 700.6 303.6 700.9 306.5 701.2 309.3 701.5 312.2 701.9 315.1 702.2 318.0 702.5 320.9 702.8 323.8 703.1 326.8 703.4 329.7 703.7 332.7 704.0 335.7 704.3 338.7 704.6 341.7 704.9 344.8 705.2 347.8 705.5 350.9 705.8 354.0 706.1 357.1 706.4 360.2 706.7 363.3 707.0 366.4 707.4 369.6 707.7 372.8 708.0 376.0 708.3 379.2 708.6 382.4 709.0 385.6 709.3 388.9 709.6 392.1 710.0 395.4 710.3 398.7 710.6 402.0 711.0 405.3 711.4 408.6 711.7 412.0 712.1 415.3 712.5 418.7 712.8 422.0 713.2 425.4 713.6 428.8 714.0 432.2 714.5 435.7 714.9 439.1 715.4 442.5 715.8 445.9 716.3 449.4 716.8 452.8 717.4 456.2 718.0 459.6 718.6 463.0 719.3 466.4 720.1 469.7'/><polyline points='728.9 469.8 729.8 466.0 730.6 462.2 731.3 458.5 731.9 454.8 732.4 451.2 733.0 447.5 733.5 443.9 734.0 440.4 734.4 436.8 734.9 433.3 735.3 429.8 735.7 426.3 736.1 422.8 736.5 419.3 736.9 415.9 737.3 412.5 737.6 409.1 738.0 405.7 738.4 402.3 738.7 399.0 739.1 395.6 739.4 392.3 739.7 389.0 740.1 385.7 740.4 382.5 740.7 379.2 741.0 376.0 741.4 372.8 741.7 369.6 742.0 366.4 742.3 363.3 742.6 360.1 742.9 357.0 743.2 353.9 743.5 350.8 743.8 347.7 744.2 344.6 744.5 341.6 744.8 338.6 745.1 335.6 745.4 332.6 745.7 329.6 746.0 326.6 746.3 323.7 746.6 320.8 746.9 317.9 747.2 315.0 747.5 312.1 747.8 309.2 748.1 306.4 748.4 303.6 748.7 300.8 749.1 298.0 749.4 295.2 749.7 292.5 750.0 289.7 750.3 287.0 750.7 284.3 751.0 281.6 751.3 278.9 751.6 276.3 752.0 273.7 752.3 271.0 752.7 268.4 753.0 265.9 753.4 263.3 753.8 260.8 754.1 258.2 754.5 255.7 754.9 253.2 755.3 250.8 755.7 248.3 756.2 245.9 756.6 243.5 757.1 241.1 757.5 238.8 758.0 236.4 758.6 234.1 759.1 231.8 759.7 229.6 760.3 227.4 761.0 225.2 761.8 223.1'/><polyline points='770.7 223.4 771.6 225.9 772.3 228.3 773.0 230.7 773.6 233.2 774.2 235.6 774.7 238.1 775.2 240.5 775.7 243.0 776.1 245.5 776.6 248.0 777.0 250.5 777.4 253.1 777.8 255.6 778.2 258.2 778.6 260.8 779.0 263.4 779.3 266.0 779.7 268.6 780.0 271.2 780.4 273.9 780.7 276.6 781.1 279.2 781.4 281.9 781.8 284.7 782.1 287.4 782.4 290.1 782.7 292.9 783.0 295.7 783.4 298.5 783.7 301.3 784.0 304.1 784.3 306.9 784.6 309.8 784.9 312.7 785.2 315.6 785.5 318.5 785.8 321.4 786.1 324.3 786.4 327.3 786.8 330.2 787.1 333.2 787.4 336.2 787.7 339.2 788.0 342.2 788.3 345.3 788.6 348.3 788.9 351.4 789.2 354.5 789.5 357.6 789.8 360.7 790.1 363.8 790.4 367.0 790.7 370.1 791.1 373.3 791.4 376.5 791.7 379.7 792.0 382.9 792.3 386.2 792.7 389.4 793.0 392.7 793.3 396.0 793.7 399.2 794.0 402.5 794.4 405.9 794.7 409.2 795.1 412.5 795.5 415.9 795.8 419.3 796.2 422.6 796.6 426.0 797.0 429.4 797.4 432.8 797.9 436.2 798.3 439.7 798.8 443.1 799.2 446.5 799.7 450.0 800.3 453.4 800.8 456.8 801.4 460.2 802.0 463.6 802.7 467.0 803.5 470.2'/><polyline points='812.4 469.1 813.3 465.3 814.0 461.6 814.7 457.9 815.3 454.2 815.9 450.5 816.4 446.9 816.9 443.3 817.4 439.7 817.8 436.2 818.3 432.7 818.7 429.2 819.1 425.7 819.5 422.2 819.9 418.7 820.3 415.3 820.7 411.9 821.0 408.5 821.4 405.1 821.7 401.7 822.1 398.4 822.4 395.1 822.8 391.7 823.1 388.4 823.4 385.2 823.8 381.9 824.1 378.7 824.4 375.4 824.7 372.2 825.1 369.0 825.4 365.9 825.7 362.7 826.0 359.6 826.3 356.4 826.6 353.3 826.9 350.2 827.2 347.2 827.5 344.1 827.8 341.1 828.1 338.0 828.4 335.0 828.7 332.0 829.0 329.1 829.3 326.1 829.7 323.2 830.0 320.3 830.3 317.4 830.6 314.5 830.9 311.6 831.2 308.7 831.5 305.9 831.8 303.1 832.1 300.3 832.4 297.5 832.7 294.7 833.1 292.0 833.4 289.2 833.7 286.5 834.0 283.8 834.4 281.1 834.7 278.5 835.0 275.8 835.4 273.2 835.7 270.6 836.1 268.0 836.4 265.4 836.8 262.9 837.2 260.3 837.5 257.8 837.9 255.3 838.3 252.8 838.7 250.3 839.1 247.9 839.6 245.5 840.0 243.1 840.5 240.7 840.9 238.3 841.4 236.0 842.0 233.7 842.5 231.4 843.1 229.2 843.8 227.0 844.5 224.8 845.3 222.8'/><polyline points='854.2 223.9 855.0 226.3 855.8 228.7 856.4 231.2 857.0 233.6 857.6 236.1 858.1 238.5 858.6 241.0 859.1 243.5 859.5 246.0 860.0 248.5 860.4 251.0 860.8 253.5 861.2 256.1 861.6 258.7 862.0 261.2 862.4 263.8 862.7 266.4 863.1 269.1 863.4 271.7 863.8 274.4 864.1 277.0 864.5 279.7 864.8 282.4 865.1 285.2 865.5 287.9 865.8 290.6 866.1 293.4 866.4 296.2 866.7 299.0 867.1 301.8 867.4 304.6 867.7 307.5 868.0 310.3 868.3 313.2 868.6 316.1 868.9 319.0 869.2 321.9 869.5 324.9 869.8 327.8 870.1 330.8 870.4 333.8 870.7 336.8 871.0 339.8 871.3 342.8 871.6 345.8 872.0 348.9 872.3 352.0 872.6 355.1 872.9 358.2 873.2 361.3 873.5 364.4 873.8 367.6 874.1 370.7 874.4 373.9 874.7 377.1 875.1 380.3 875.4 383.5 875.7 386.8 876.0 390.0 876.4 393.3 876.7 396.6 877.1 399.8 877.4 403.2 877.8 406.5 878.1 409.8 878.5 413.1 878.9 416.5 879.2 419.9 879.6 423.3 880.0 426.6 880.4 430.0 880.8 433.5 881.3 436.9 881.7 440.3 882.2 443.7 882.6 447.2 883.1 450.6 883.7 454.0 884.2 457.4 884.8 460.9 885.5 464.2 886.2 467.6 887.0 470.8'/><polyline points='895.9 468.4 896.8 464.6 897.5 460.8 898.1 457.1 898.7 453.4 899.3 449.8 899.8 446.2 900.3 442.6 900.8 439.0 901.2 435.5 901.7 432.0 902.1 428.5 902.5 425.0 902.9 421.5 903.3 418.0 903.7 414.6 904.1 411.2 904.4 407.8 904.8 404.4 905.1 401.1 905.5 397.7 905.8 394.4 906.2 391.1 906.5 387.8 906.8 384.5 907.2 381.3 907.5 378.0 907.8 374.8 908.1 371.6 908.4 368.4 908.8 365.2 909.1 362.1 909.4 358.9 909.7 355.8 910.0 352.7 910.3 349.6 910.6 346.5 910.9 343.5 911.2 340.5 911.5 337.4 911.8 334.4 912.1 331.5 912.4 328.5 912.7 325.5 913.0 322.6 913.3 319.7 913.6 316.8 913.9 313.9 914.3 311.0 914.6 308.2 914.9 305.3 915.2 302.5 915.5 299.7 915.8 296.9 916.1 294.2 916.4 291.4 916.8 288.7 917.1 286.0 917.4 283.3 917.7 280.6 918.1 277.9 918.4 275.3 918.8 272.7 919.1 270.1 919.5 267.5 919.8 264.9 920.2 262.3 920.6 259.8 920.9 257.3 921.3 254.8 921.7 252.3 922.1 249.9 922.5 247.4 923.0 245.0 923.4 242.6 923.9 240.2 924.4 237.9 924.9 235.5 925.4 233.2 926.0 231.0 926.6 228.7 927.2 226.5 927.9 224.4 928.8 222.3'/><polyline points='937.7 224.4 938.5 226.9 939.2 229.3 939.9 231.7 940.5 234.2 941.0 236.6 941.5 239.1 942.0 241.5 942.5 244.0 942.9 246.5 943.4 249.0 943.8 251.6 944.2 254.1 944.6 256.7 945.0 259.2 945.4 261.8 945.8 264.4 946.1 267.0 946.5 269.7 946.8 272.3 947.2 275.0 947.5 277.6 947.9 280.3 948.2 283.0 948.5 285.8 948.9 288.5 949.2 291.3 949.5 294.0 949.8 296.8 950.1 299.6 950.4 302.4 950.8 305.3 951.1 308.1 951.4 311.0 951.7 313.8 952.0 316.7 952.3 319.6 952.6 322.6 952.9 325.5 953.2 328.5 953.5 331.4 953.8 334.4 954.1 337.4 954.4 340.4 954.7 343.5 955.0 346.5 955.3 349.6 955.6 352.7 956.0 355.7 956.3 358.9 956.6 362.0 956.9 365.1 957.2 368.3 957.5 371.4 957.8 374.6 958.1 377.8 958.5 381.0 958.8 384.2 959.1 387.5 959.4 390.7 959.8 394.0 960.1 397.3 960.5 400.6 960.8 403.9 961.2 407.2 961.5 410.5 961.9 413.9 962.3 417.3 962.6 420.6 963.0 424.0 963.4 427.4 963.8 430.8 964.2 434.2 964.7 437.6 965.1 441.1 965.6 444.5 966.1 447.9 966.6 451.4 967.1 454.8 967.7 458.2 968.3 461.6 969.0 465.0 969.7 468.3'/><polyline points='979.5 467.5 980.3 463.7 981.0 460.0 981.6 456.3 982.2 452.6 982.7 449.0 983.2 445.4 983.7 441.8 984.2 438.2 984.7 434.7 985.1 431.2 985.5 427.7 985.9 424.2 986.3 420.7 986.7 417.3 987.1 413.8 987.5 410.4 987.8 407.0 988.2 403.6 988.5 400.3 988.9 397.0 989.2 393.6 989.6 390.3 989.9 387.0 990.2 383.8 990.5 380.5 990.9 377.3 991.2 374.1 991.5 370.9 991.8 367.7 992.1 364.5 992.5 361.4 992.8 358.2 993.1 355.1 993.4 352.0 993.7 348.9 994.0 345.8 994.3 342.8 994.6 339.8 994.9 336.8 995.2 333.8 995.5 330.8 995.8 327.8 996.1 324.9 996.4 321.9 996.7 319.0 997.0 316.1 997.3 313.2 997.6 310.4 998.0 307.5 998.3 304.7 998.6 301.9 998.9 299.1 999.2 296.3 999.5 293.5 999.8 290.8 1000.2 288.1 1000.5 285.4 1000.8 282.7 1001.1 280.0 1001.5 277.3 1001.8 274.7 1002.2 272.1 1002.5 269.5 1002.9 266.9 1003.2 264.3 1003.6 261.8 1004.0 259.2 1004.3 256.7 1004.7 254.2 1005.1 251.8 1005.5 249.3 1006.0 246.9 1006.4 244.4 1006.8 242.1 1007.3 239.7 1007.8 237.3 1008.3 235.0 1008.8 232.7 1009.4 230.5 1010.0 228.2 1010.7 226.1 1011.4 223.9'/><polyline points='1020.3 222.5'/></g>
<path d='M21 30h1v1h-1zM21 43h1v1h-1zM21 56h1v1h-1zM21 69h1v1h-1zM21 82h1v1h-1zM21 95h1v1h-1zM21 108h1v1h-1zM21 121h1v1h-1zM21 134h1v1h-1zM21 147h1v1h-1zM21 160h1v1h-1zM21 173h1v1h-1zM21 186h1v1h-1zM21 199h1v1h-1zM21 212h1v1h-1zM21 225h1v1h-1zM21 238h1v1h-1zM21 251h1v1h-1zM21 264h1v1h-1zM21 277h1v1h-1zM21 290h1v1h-1zM21 303h1v1h-1zM21 316h1v1h-1zM21 329h1v1h-1zM21 342h1v1h-1zM21 355h1v1h-1zM21 368h1v1h-1zM21 381h1v1h-1zM21 394h1v1h-1zM21 407h1v1h-1zM21 420h1v1h-1zM21 433h1v1h-1zM21 446h1v1h-1zM21 459h1v1h-1zM21 472h1v1h-1zM21 485h1v1h-1zM21 498h1v1h-1zM21 511h1v1h-1zM21 524h1v1h-1zM21 537h1v1h-1zM21 550h1v1h-1zM21 563h1v1h-1zM21 576h1v1h-1zM21 589h1v1h-1zM21 602h1v1h-1zM21 615h1v1h-1zM21 628h1v1h-1zM21 641h1v1h-1zM21 654h1v1h-1zM22 82h1v1h-1zM22 147h1v1h-1zM22 212h1v1h-1zM22 277h1v1h-1zM22 407h1v1h-1zM22 472h1v1h-1zM22 537h1v1h-1zM22 602h1v1h-1zM23 30h1v1h-1zM23 43h1v1h-1zM23 56h1v1h-1zM23 69h1v1h-1zM23 95h1v1h-1zM23 108h1v1h-1zM23 121h1v1h-1zM23 134h1v1h-1zM23 160h1v1h-1zM23 173h1v1h-1zM23 186h1v1h-1zM23 199h1v1h-1zM23 225h1v1h-1zM23 238h1v1h-1zM23 251h1v1h-1zM23 264h1v1h-1zM23 290h1v1h-1zM23 303h1v1h-1zM23 316h1v1h-1zM23 329h1v1h-1zM23 342h1v1h-1zM23 355h1v1h-1zM23 368h1v1h-1zM23 381h1v1h-1zM23 394h1v1h-1zM23 420h1v1h-1zM23 433h1v1h-1zM23 446h1v1h-1zM23 459h1v1h-1zM23 485h1v1h-1zM23 498h1v1h-1zM23 511h1v1h-1zM23 524h1v1h-1zM23 550h1v1h-1zM23 563h1v1h-1zM23 576h1v1h-1zM23 589h1v1h-1zM23 615h1v1h-1zM23 628h1v1h-1zM23 641h1v1h-1zM23 654h1v1h-1zM24 82h1v1h-1zM24 147h1v1h-1zM24 212h1v1h-1zM24 277h1v1h-1zM24 407h1v1h-1zM24 472h1v1h-1zM24 537h1v1h-1zM24 602h1v1h-1zM25 342h1v1h-1zM26 82h1v1h-1zM26 147h1v1h-1zM26 212h1v1h-1zM26 277h1v1h-1zM26 407h1v1h-1zM26 472h1v1h-1zM26 537h1v1h-1zM26 602h1v1h-1zM27 342h1v1h-1zM29 342h1v1h-1zM31 342h1v1h-1zM33 342h1v1h-1zM35 342h1v1h-1zM37 342h1v1h-1zM39 342h1v1h-1zM41 17h1v1h-1zM41 19h1v1h-1zM41 82h1v1h-1zM41 147h1v1h-1zM41 212h1v1h-1zM41 277h1v1h-1zM41 339h1v1h-1zM41 341h1v1h-1zM41 342h1v1h-1zM41 343h1v1h-1zM41 345h1v1h-1zM41 407h1v1h-1zM41 472h1v1h-1zM41 537h1v1h-1zM41 602h1v1h-1zM41 665h1v1h-1zM41 667h1v1h-1zM43 342h1v1h-1zM45 342h1v1h-1zM47 342h1v1h-1zM49 342h1v1h-1zM51 342h1v1h-1zM53 342h1v1h-1zM55 342h1v1h-1zM57 342h1v1h-1zM59 342h1v1h-1zM61 17h1v1h-1zM61 19h1v1h-1zM61 82h1v1h-1zM61 147h1v1h-1zM61 212h1v1h-1zM61 277h1v1h-1zM61 339h1v1h-1zM61 341h1v1h-1zM61 342h1v1h-1zM61 343h1v1h-1zM61 345h1v1h-1zM61 407h1v1h-1zM61 472h1v1h-1zM61 537h1v1h-1zM61 602h1v1h-1zM61 665h1v1h-1zM61 667h1v1h-1zM63 342h1v1h-1zM65 342h1v1h-1zM67 342h1v1h-1zM69 342h1v1h-1zM71 342h1v1h-1zM73 342h1v1h-1zM75 342h1v1h-1zM77 342h1v1h-1zM79 342h1v1h-1zM81 17h1v1h-1zM81 19h1v1h-1zM81 82h1v1h-1zM81 147h1v1h-1zM81 212h1v1h-1zM81 277h1v1h-1zM81 339h1v1h-1zM81 341h1v1h-1zM81 342h1v1h-1zM81 343h1v1h-1zM81 345h1v1h-1zM81 407h1v1h-1zM81 472h1v1h-1zM81 537h1v1h-1zM81 602h1v1h-1zM81 665h1v1h-1zM81 667h1v1h-1zM83 342h1v1h-1zM85 342h1v1h-1zM87 342h1v1h-1zM89 342h1v1h-1zM91 342h1v1h-1zM93 342h1v1h-1zM95 342h1v1h-1zM97 342h1v1h-1zM99 342h1v1h-1zM101 17h1v1h-1zM101 19h1v1h-1zM101 82h1v1h-1zM101 147h1v1h-1zM101 212h1v1h-1zM101 277h1v1h-1zM101 339h1v1h-1zM101 341h1v1h-1zM101 342h1v1h-1zM101 343h1v1h-1zM101 345h1v1h-1zM101 407h1v1h-1zM101 472h1v1h-1zM101 537h1v1h-1zM101 602h1v1h-1zM101 665h1v1h-1zM101 667h1v1h-1zM103 342h1v1h-1zM105 342h1v1h-1zM107 342h1v1h-1zM109 342h1v1h-1zM111 342h1v1h-1zM113 342h1v1h-1zM115 342h1v1h-1zM117 342h1v1h-1zM119 342h1v1h-1zM121 17h1v1h-1zM121 18h1v1h-1zM121 20h1v1h-1zM121 22h1v1h-1zM121 30h1v1h-1zM121 43h1v1h-1zM121 56h1v1h-1zM121 69h1v1h-1zM121 82h1v1h-1zM121 95h1v1h-1zM121 108h1v1h-1zM121 121h1v1h-1zM121 134h1v1h-1zM121 147h1v1h-1zM121 160h1v1h-1zM121 173h1v1h-1zM121 186h1v1h-1zM121 199h1v1h-1zM121 212h1v1h-1zM121 225h1v1h-1zM121 238h1v1h-1zM121 251h1v1h-1zM121 264h1v1h-1zM121 277h1v1h-1zM121 290h1v1h-1zM121 303h1v1h-1zM121 316h1v1h-1zM121 329h1v1h-1zM121 336h1v1h-1zM121 338h1v1h-1zM121 340h1v1h-1zM121 342h1v1h-1zM121 344h1v1h-1zM121 346h1v1h-1zM121 348h1v1h-1zM121 355h1v1h-1zM121 368h1v1h-1zM121 381h1v1h-1zM121 394h1v1h-1zM121 407h1v1h-1zM121 420h1v1h-1zM121 433h1v1h-1zM121 446h1v1h-1zM121 459h1v1h-1zM121 472h1v1h-1zM121 485h1v1h-1zM121 498h1v1h-1zM121 511h1v1h-1zM121 524h1v1h-1zM121 537h1v1h-1zM121 550h1v1h-1zM121 563h1v1h-1zM121 576h1v1h-1zM121 589h1v1h-1zM121 602h1v1h-1zM121 615h1v1h-1zM121 628h1v1h-1zM121 641h1v1h-1zM121 654h1v1h-1zM121 662h1v1h-1zM121 664h1v1h-1zM121 666h1v1h-1zM121 667h1v1h-1zM123 342h1v1h-1zM125 342h1v1h-1zM127 342h1v1h-1zM129 342h1v1h-1zM131 342h1v1h-1zM133 342h1v1h-1zM135 342h1v1h-1zM137 342h1v1h-1zM139 342h1v1h-1zM141 17h1v1h-1zM141 19h1v1h-1zM141 82h1v1h-1zM141 147h1v1h-1zM141 212h1v1h-1zM141 277h1v1h-1zM141 339h1v1h-1zM141 341h1v1h-1zM141 342h1v1h-1zM141 343h1v1h-1zM141 345h1v1h-1zM141 407h1v1h-1zM141 472h1v1h-1zM141 537h1v1h-1zM141 602h1v1h-1zM141 665h1v1h-1zM141 667h1v1h-1zM143 342h1v1h-1zM145 342h1v1h-1zM147 342h1v1h-1zM149 342h1v1h-1zM151 342h1v1h-1zM153 342h1v1h-1zM155 342h1v1h-1zM157 342h1v1h-1zM159 342h1v1h-1zM161 17h1v1h-1zM161 19h1v1h-1zM161 82h1v1h-1zM161 147h1v1h-1zM161 212h1v1h-1zM161 277h1v1h-1zM161 339h1v1h-1zM161 341h1v1h-1zM161 342h1v1h-1zM161 343h1v1h-1zM161 345h1v1h-1zM161 407h1v1h-1zM161 472h1v1h-1zM161 537h1v1h-1zM161 602h1v1h-1zM161 665h1v1h-1zM161 667h1v1h-1zM163 342h1v1h-1zM165 342h1v1h-1zM167 342h1v1h-1zM169 342h1v1h-1zM171 342h1v1h-1zM173 342h1v1h-1zM175 342h1v1h-1zM177 342h1v1h-1zM179 342h1v1h-1zM181 17h1v1h-1zM181 19h1v1h-1zM181 82h1v1h-1zM181 147h1v1h-1zM181 212h1v1h-1zM181 277h1v1h-1zM181 339h1v1h-1zM181 341h1v1h-1zM181 342h1v1h-1zM181 343h1v1h-1zM181 345h1v1h-1zM181 407h1v1h-1zM181 472h1v1h-1zM181 537h1v1h-1zM181 602h1v1h-1zM181 665h1v1h-1zM181 667h1v1h-1zM183 342h1v1h-1zM185 342h1v1h-1zM187 342h1v1h-1zM189 342h1v1h-1zM191 342h1v1h-1zM193 342h1v1h-1zM195 342h1v1h-1zM197 342h1v1h-1zM199 342h1v1h-1zM201 17h1v1h-1zM201 19h1v1h-1zM201 82h1v1h-1zM201 147h1v1h-1zM201 212h1v1h-1zM201 277h1v1h-1zM201 339h1v1h-1zM201 341h1v1h-1zM201 342h1v1h-1zM201 343h1v1h-1zM201 345h1v1h-1zM201 407h1v1h-1zM201 472h1v1h-1zM201 537h1v1h-1zM201 602h1v1h-1zM201 665h1v1h-1zM201 667h1v1h-1zM203 342h1v1h-1zM205 342h1v1h-1zM207 342h1v1h-1zM209 342h1v1h-1zM211 342h1v1h-1zM213 342h1v1h-1zM215 342h1v1h-1zM217 342h1v1h-1zM219 342h1v1h-1zM221 17h1v1h-1zM221 18h1v1h-1zM221 20h1v1h-1zM221 22h1v1h-1zM221 30h1v1h-1zM221 43h1v1h-1zM221 56h1v1h-1zM221 69h1v1h-1zM221 82h1v1h-1zM221 95h1v1h-1zM221 108h1v1h-1zM221 121h1v1h-1zM221 134h1v1h-1zM221 147h1v1h-1zM221 160h1v1h-1zM221 173h1v1h-1zM221 186h1v1h-1zM221 199h1v1h-1zM221 212h1v1h-1zM221 225h1v1h-1zM221 238h1v1h-1zM221 251h1v1h-1zM221 264h1v1h-1zM221 277h1v1h-1zM221 290h1v1h-1zM221 303h1v1h-1zM221 316h1v1h-1zM221 329h1v1h-1zM221 336h1v1h-1zM221 338h1v1h-1zM221 340h1v1h-1zM221 342h1v1h-1zM221 344h1v1h-1zM221 346h1v1h-1zM221 348h1v1h-1zM221 355h1v1h-1zM221 368h1v1h-1zM221 381h1v1h-1zM221 394h1v1h-1zM221 407h1v1h-1zM221 420h1v1h-1zM221 433h1v1h-1zM221 446h1v1h-1zM221 459h1v1h-1zM221 472h1v1h-1zM221 485h1v1h-1zM221 498h1v1h-1zM221 511h1v1h-1zM221 524h1v1h-1zM221 537h1v1h-1zM221 550h1v1h-1zM221 563h1v1h-1zM221 576h1v1h-1zM221 589h1v1h-1zM221 602h1v1h-1zM221 615h1v1h-1zM221 628h1v1h-1zM221 641h1v1h-1zM221 654h1v1h-1zM221 662h1v1h-1zM221 664h1v1h-1zM221 666h1v1h-1zM221 667h1v1h-1zM223 342h1v1h-1zM225 342h1v1h-1zM227 342h1v1h-1zM229 342h1v1h-1zM231 342h1v1h-1zM233 342h1v1h-1zM235 342h1v1h-1zM237 342h1v1h-1zM239 342h1v1h-1zM241 17h1v1h-1zM241 19h1v1h-1zM241 82h1v1h-1zM241 147h1v1h-1zM241 212h1v1h-1zM241 277h1v1h-1zM241 339h1v1h-1zM241 341h1v1h-1zM241 342h1v1h-1zM241 343h1v1h-1zM241 345h1v1h-1zM241 407h1v1h-1zM241 472h1v1h-1zM241 537h1v1h-1zM241 602h1v1h-1zM241 665h1v1h-1zM241 667h1v1h-1zM243 342h1v1h-1zM245 342h1v1h-1zM247 342h1v1h-1zM249 342h1v1h-1zM251 342h1v1h-1zM253 342h1v1h-1zM255 342h1v1h-1zM257 342h1v1h-1zM259 342h1v1h-1zM261 17h1v1h-1zM261 19h1v1h-1zM261 82h1v1h-1zM261 147h1v1h-1zM261 212h1v1h-1zM261 277h1v1h-1zM261 339h1v1h-1zM261 341h1v1h-1zM261 342h1v1h-1zM261 343h1v1h-1zM261 345h1v1h-1zM261 407h1v1h-1zM261 472h1v1h-1zM261 537h1v1h-1zM261 602h1v1h-1zM261 665h1v1h-1zM261 667h1v1h-1zM263 342h1v1h-1zM265 342h1v1h-1zM267 342h1v1h-1zM269 342h1v1h-1zM271 342h1v1h-1zM273 342h1v1h-1zM275 342h1v1h-1zM277 342h1v1h-1zM279 342h1v1h-1zM281 17h1v1h-1zM281 19h1v1h-1zM281 82h1v1h-1zM281 147h1v1h-1zM281 212h1v1h-1zM281 277h1v1h-1zM281 339h1v1h-1zM281 341h1v1h-1zM281 342h1v1h-1zM281 343h1v1h-1zM281 345h1v1h-1zM281 407h1v1h-1zM281 472h1v1h-1zM281 537h1v1h-1zM281 602h1v1h-1zM281 665h1v1h-1zM281 667h1v1h-1zM283 342h1v1h-1zM285 342h1v1h-1zM287 342h1v1h-1zM289 342h1v1h-1zM291 342h1v1h-1zM293 342h1v1h-1zM295 342h1v1h-1zM297 342h1v1h-1zM299 342h1v1h-1zM301 17h1v1h-1zM301 19h1v1h-1zM301 82h1v1h-1zM301 147h1v1h-1zM301 212h1v1h-1zM301 277h1v1h-1zM301 339h1v1h-1zM301 341h1v1h-1zM301 342h1v1h-1zM301 343h1v1h-1zM301 345h1v1h-1zM301 407h1v1h-1zM301 472h1v1h-1zM301 537h1v1h-1zM301 602h1v1h-1zM301 665h1v1h-1zM301 667h1v1h-1zM303 342h1v1h-1zM305 342h1v1h-1zM307 342h1v1h-1zM309 342h1v1h-1zM311 342h1v1h-1zM313 342h1v1h-1zM315 342h1v1h-1zM317 342h1v1h-1zM319 342h1v1h-1zM321 17h1v1h-1zM321 18h1v1h-1zM321 20h1v1h-1zM321 22h1v1h-1zM321 30h1v1h-1zM321 43h1v1h-1zM321 56h1v1h-1zM321 69h1v1h-1zM321 82h1v1h-1zM321 95h1v1h-1zM321 108h1v1h-1zM321 121h1v1h-1zM321 134h1v1h-1zM321 147h1v1h-1zM321 160h1v1h-1zM321 173h1v1h-1zM321 186h1v1h-1zM321 199h1v1h-1zM321 212h1v1h-1zM321 225h1v1h-1zM321 238h1v1h-1zM321 251h1v1h-1zM321 264h1v1h-1zM321 277h1v1h-1zM321 290h1v1h-1zM321 303h1v1h-1zM321 316h1v1h-1zM321 329h1v1h-1zM321 336h1v1h-1zM321 338h1v1h-1zM321 340h1v1h-1zM321 342h1v1h-1zM321 344h1v1h-1zM321 346h1v1h-1zM321 348h1v1h-1zM321 355h1v1h-1zM321 368h1v1h-1zM321 381h1v1h-1zM321 394h1v1h-1zM321 407h1v1h-1zM321 420h1v1h-1zM321 433h1v1h-1zM321 446h1v1h-1zM321 459h1v1h-1zM321 472h1v1h-1zM321 485h1v1h-1zM321 498h1v1h-1zM321 511h1v1h-1zM321 524h1v1h-1zM321 537h1v1h-1zM321 550h1v1h-1zM321 563h1v1h-1zM321 576h1v1h-1zM321 589h1v1h-1zM321 602h1v1h-1zM321 615h1v1h-1zM321 628h1v1h-1zM321 641h1v1h-1zM321 654h1v1h-1zM321 662h1v1h-1zM321 664h1v1h-1zM321 666h1v1h-1zM321 667h1v1h-1zM323 342h1v1h-1zM325 342h1v1h-1zM327 342h1v1h-1zM329 342h1v1h-1zM331 342h1v1h-1zM333 342h1v1h-1zM335 342h1v1h-1zM337 342h1v1h-1zM339 342h1v1h-1zM341 17h1v1h-1zM341 19h1v1h-1zM341 82h1v1h-1zM341 147h1v1h-1zM341 212h1v1h-1zM341 277h1v1h-1zM341 339h1v1h-1zM341 341h1v1h-1zM341 342h1v1h-1zM341 343h1v1h-1zM341 345h1v1h-1zM341 407h1v1h-1zM341 472h1v1h-1zM341 537h1v1h-1zM341 602h1v1h-1zM341 665h1v1h-1zM341 667h1v1h-1zM343 342h1v1h-1zM345 342h1v1h-1zM347 342h1v1h-1zM349 342h1v1h-1zM351 342h1v1h-1zM353 342h1v1h-1zM355 342h1v1h-1zM357 342h1v1h-1zM359 342h1v1h-1zM361 17h1v1h-1zM361 19h1v1h-1zM361 82h1v1h-1zM361 147h1v1h-1zM361 212h1v1h-1zM361 277h1v1h-1zM361 339h1v1h-1zM361 341h1v1h-1zM361 342h1v1h-1zM361 343h1v1h-1zM361 345h1v1h-1zM361 407h1v1h-1zM361 472h1v1h-1zM361 537h1v1h-1zM361 602h1v1h-1zM361 665h1v1h-1zM361 667h1v1h-1zM363 342h1v1h-1zM365 342h1v1h-1zM367 342h1v1h-1zM369 342h1v1h-1zM371 342h1v1h-1zM373 342h1v1h-1zM375 342h1v1h-1zM377 342h1v1h-1zM379 342h1v1h-1zM381 17h1v1h-1zM381 19h1v1h-1zM381 82h1v1h-1zM381 147h1v1h-1zM381 212h1v1h-1zM381 277h1v1h-1zM381 339h1v1h-1zM381 341h1v1h-1zM381 342h1v1h-1zM381 343h1v1h-1zM381 345h1v1h-1zM381 407h1v1h-1zM381 472h1v1h-1zM381 537h1v1h-1zM381 602h1v1h-1zM381 665h1v1h-1zM381 667h1v1h-1zM383 342h1v1h-1zM385 342h1v1h-1zM387 342h1v1h-1zM389 342h1v1h-1zM391 342h1v1h-1zM393 342h1v1h-1zM395 342h1v1h-1zM397 342h1v1h-1zM399 342h1v1h-1zM401 17h1v1h-1zM401 19h1v1h-1zM401 82h1v1h-1zM401 147h1v1h-1zM401 212h1v1h-1zM401 277h1v1h-1zM401 339h1v1h-1zM401 341h1v1h-1zM401 342h1v1h-1zM401 343h1v1h-1zM401 345h1v1h-1zM401 407h1v1h-1zM401 472h1v1h-1zM401 537h1v1h-1zM401 602h1v1h-1zM401 665h1v1h-1zM401 667h1v1h-1zM403 342h1v1h-1zM405 342h1v1h-1zM407 342h1v1h-1zM409 342h1v1h-1zM411 342h1v1h-1zM413 342h1v1h-1zM415 342h1v1h-1zM417 342h1v1h-1zM419 342h1v1h-1zM421 17h1v1h-1zM421 18h1v1h-1zM421 20h1v1h-1zM421 22h1v1h-1zM421 30h1v1h-1zM421 43h1v1h-1zM421 56h1v1h-1zM421 69h1v1h-1zM421 82h1v1h-1zM421 95h1v1h-1zM421 108h1v1h-1zM421 121h1v1h-1zM421 134h1v1h-1zM421 147h1v1h-1zM421 160h1v1h-1zM421 173h1v1h-1zM421 186h1v1h-1zM421 199h1v1h-1zM421 212h1v1h-1zM421 225h1v1h-1zM421 238h1v1h-1zM421 251h1v1h-1zM421 264h1v1h-1zM421 277h1v1h-1zM421 290h1v1h-1zM421 303h1v1h-1zM421 316h1v1h-1zM421 329h1v1h-1zM421 336h1v1h-1zM421 338h1v1h-1zM421 340h1v1h-1zM421 342h1v1h-1zM421 344h1v1h-1zM421 346h1v1h-1zM421 348h1v1h-1zM421 355h1v1h-1zM421 368h1v1h-1zM421 381h1v1h-1zM421 394h1v1h-1zM421 407h1v1h-1zM421 420h1v1h-1zM421 433h1v1h-1zM421 446h1v1h-1zM421 459h1v1h-1zM421 472h1v1h-1zM421 485h1v1h-1zM421 498h1v1h-1zM421 511h1v1h-1zM421 524h1v1h-1zM421 537h1v1h-1zM421 550h1v1h-1zM421 563h1v1h-1zM421 576h1v1h-1zM421 589h1v1h-1zM421 602h1v1h-1zM421 615h1v1h-1zM421 628h1v1h-1zM421 641h1v1h-1zM421 654h1v1h-1zM421 662h1v1h-1zM421 664h1v1h-1zM421 666h1v1h-1zM421 667h1v1h-1zM423 342h1v1h-1zM425 342h1v1h-1zM427 342h1v1h-1zM429 342h1v1h-1zM431 342h1v1h-1zM433 342h1v1h-1zM435 342h1v1h-1zM437 342h1v1h-1zM439 342h1v1h-1zM441 17h1v1h-1zM441 19h1v1h-1zM441 82h1v1h-1zM441 147h1v1h-1zM441 212h1v1h-1zM441 277h1v1h-1zM441 339h1v1h-1zM441 341h1v1h-1zM441 342h1v1h-1zM441 343h1v1h-1zM441 345h1v1h-1zM441 407h1v1h-1zM441 472h1v1h-1zM441 537h1v1h-1zM441 602h1v1h-1zM441 665h1v1h-1zM441 667h1v1h-1zM443 342h1v1h-1zM445 342h1v1h-1zM447 342h1v1h-1zM449 342h1v1h-1zM451 342h1v1h-1zM453 342h1v1h-1zM455 342h1v1h-1zM457 342h1v1h-1zM459 342h1v1h-1zM461 17h1v1h-1zM461 19h1v1h-1zM461 82h1v1h-1zM461 147h1v1h-1zM461 212h1v1h-1zM461 277h1v1h-1zM461 339h1v1h-1zM461 341h1v1h-1zM461 342h1v1h-1zM461 343h1v1h-1zM461 345h1v1h-1zM461 407h1v1h-1zM461 472h1v1h-1zM461 537h1v1h-1zM461 602h1v1h-1zM461 665h1v1h-1zM461 667h1v1h-1zM463 342h1v1h-1zM465 342h1v1h-1zM467 342h1v1h-1zM469 342h1v1h-1zM471 342h1v1h-1zM473 342h1v1h-1zM475 342h1v1h-1zM477 342h1v1h-1zM479 342h1v1h-1zM481 17h1v1h-1zM481 19h1v1h-1zM481 82h1v1h-1zM481 147h1v1h-1zM481 212h1v1h-1zM481 277h1v1h-1zM481 339h1v1h-1zM481 341h1v1h-1zM481 342h1v1h-1zM481 343h1v1h-1zM481 345h1v1h-1zM481 407h1v1h-1zM481 472h1v1h-1zM481 537h1v1h-1zM481 602h1v1h-1zM481 665h1v1h-1zM481 667h1v1h-1zM483 342h1v1h-1zM485 342h1v1h-1zM487 342h1v1h-1zM489 342h1v1h-1zM491 342h1v1h-1zM493 342h1v1h-1zM495 342h1v1h-1zM497 342h1v1h-1zM499 342h1v1h-1zM501 17h1v1h-1zM501 19h1v1h-1zM501 82h1v1h-1zM501 147h1v1h-1zM501 212h1v1h-1zM501 277h1v1h-1zM501 339h1v1h-1zM501 341h1v1h-1zM501 342h1v1h-1zM501 343h1v1h-1zM501 345h1v1h-1zM501 407h1v1h-1zM501 472h1v1h-1zM501 537h1v1h-1zM501 602h1v1h-1zM501 665h1v1h-1zM501 667h1v1h-1zM503 342h1v1h-1zM505 342h1v1h-1zM507 342h1v1h-1zM509 342h1v1h-1zM511 342h1v1h-1zM513 342h1v1h-1zM515 82h1v1h-1zM515 147h1v1h-1zM515 212h1v1h-1zM515 277h1v1h-1zM515 342h1v1h-1zM515 407h1v1h-1zM515 472h1v1h-1zM515 537h1v1h-1zM515 602h1v1h-1zM517 82h1v1h-1zM517 147h1v1h-1zM517 212h1v1h-1zM517 277h1v1h-1zM517 342h1v1h-1zM517 407h1v1h-1zM517 472h1v1h-1zM517 537h1v1h-1zM517 602h1v1h-1zM518 30h1v1h-1zM518 43h1v1h-1zM518 56h1v1h-1zM518 69h1v1h-1zM518 95h1v1h-1zM518 108h1v1h-1zM518 121h1v1h-1zM518 134h1v1h-1zM518 160h1v1h-1zM518 173h1v1h-1zM518 186h1v1h-1zM518 199h1v1h-1zM518 225h1v1h-1zM518 238h1v1h-1zM518 251h1v1h-1zM518 264h1v1h-1zM518 290h1v1h-1zM518 303h1v1h-1zM518 316h1v1h-1zM518 329h1v1h-1zM518 355h1v1h-1zM518 368h1v1h-1zM518 381h1v1h-1zM518 394h1v1h-1zM518 420h1v1h-1zM518 433h1v1h-1zM518 446h1v1h-1zM518 459h1v1h-1zM518 485h1v1h-1zM518 498h1v1h-1zM518 511h1v1h-1zM518 524h1v1h-1zM518 550h1v1h-1zM518 563h1v1h-1zM518 576h1v1h-1zM518 589h1v1h-1zM518 615h1v1h-1zM518 628h1v1h-1zM518 641h1v1h-1zM518 654h1v1h-1zM519 82h1v1h-1zM519 147h1v1h-1zM519 212h1v1h-1zM519 277h1v1h-1zM519 342h1v1h-1zM519 407h1v1h-1zM519 472h1v1h-1zM519 537h1v1h-1zM519 602h1v1h-1zM520 30h1v1h-1zM520 43h1v1h-1zM520 56h1v1h-1zM520 69h1v1h-1zM520 95h1v1h-1zM520 108h1v1h-1zM520 121h1v1h-1zM520 134h1v1h-1zM520 160h1v1h-1zM520 173h1v1h-1zM520 186h1v1h-1zM520 199h1v1h-1zM520 225h1v1h-1zM520 238h1v1h-1zM520 251h1v1h-1zM520 264h1v1h-1zM520 290h1v1h-1zM520 303h1v1h-1zM520 316h1v1h-1zM520 329h1v1h-1zM520 355h1v1h-1zM520 368h1v1h-1zM520 381h1v1h-1zM520 394h1v1h-1zM520 420h1v1h-1zM520 433h1v1h-1zM520 446h1v1h-1zM520 459h1v1h-1zM520 485h1v1h-1zM520 498h1v1h-1zM520 511h1v1h-1zM520 524h1v1h-1zM520 550h1v1h-1zM520 563h1v1h-1zM520 576h1v1h-1zM520 589h1v1h-1zM520 615h1v1h-1zM520 628h1v1h-1zM520 641h1v1h-1zM520 654h1v1h-1zM521 20h1v1h-1zM521 22h1v1h-1zM521 24h1v1h-1zM521 26h1v1h-1zM521 28h1v1h-1zM521 29h1v1h-1zM521 30h1v1h-1zM521 31h1v1h-1zM521 32h1v1h-1zM521 34h1v1h-1zM521 36h1v1h-1zM521 38h1v1h-1zM521 40h1v1h-1zM521 42h1v1h-1zM521 43h1v1h-1zM521 44h1v1h-1zM521 46h1v1h-1zM521 48h1v1h-1zM521 50h1v1h-1zM521 52h1v1h-1zM521 54h1v1h-1zM521 55h1v1h-1zM521 56h1v1h-1zM521 57h1v1h-1zM521 58h1v1h-1zM521 60h1v1h-1zM521 62h1v1h-1zM521 64h1v1h-1zM521 66h1v1h-1zM521 68h1v1h-1zM521 69h1v1h-1zM521 70h1v1h-1zM521 72h1v1h-1zM521 74h1v1h-1zM521 76h1v1h-1zM521 78h1v1h-1zM521 80h1v1h-1zM521 82h1v1h-1zM521 84h1v1h-1zM521 86h1v1h-1zM521 88h1v1h-1zM521 90h1v1h-1zM521 92h1v1h-1zM521 94h1v1h-1zM521 95h1v1h-1zM521 96h1v1h-1zM521 98h1v1h-1zM521 100h1v1h-1zM521 102h1v1h-1zM521 104h1v1h-1zM521 106h1v1h-1zM521 107h1v1h-1zM521 108h1v1h-1zM521 109h1v1h-1zM521 110h1v1h-1zM521 112h1v1h-1zM521 114h1v1h-1zM521 116h1v1h-1zM521 118h1v1h-1zM521 120h1v1h-1zM521 121h1v1h-1zM521 122h1v1h-1zM521 124h1v1h-1zM521 126h1v1h-1zM521 128h1v1h-1zM521 130h1v1h-1zM521 132h1v1h-1zM521 133h1v1h-1zM521 134h1v1h-1zM521 135h1v1h-1zM521 136h1v1h-1zM521 138h1v1h-1zM521 140h1v1h-1zM521 142h1v1h-1zM521 144h1v1h-1zM521 147h1v1h-1zM521 150h1v1h-1zM521 152h1v1h-1zM521 154h1v1h-1zM521 156h1v1h-1zM521 158h1v1h-1zM521 159h1v1h-1zM521 160h1v1h-1zM521 161h1v1h-1zM521 162h1v1h-1zM521 164h1v1h-1zM521 166h1v1h-1zM521 168h1v1h-1zM521 170h1v1h-1zM521 172h1v1h-1zM521 173h1v1h-1zM521 174h1v1h-1zM521 176h1v1h-1zM521 178h1v1h-1zM521 180h1v1h-1zM521 182h1v1h-1zM521 184h1v1h-1zM521 185h1v1h-1zM521 186h1v1h-1zM521 187h1v1h-1zM521 188h1v1h-1zM521 190h1v1h-1zM521 192h1v1h-1zM521 194h1v1h-1zM521 196h1v1h-1zM521 198h1v1h-1zM521 199h1v1h-1zM521 200h1v1h-1zM521 202h1v1h-1zM521 204h1v1h-1zM521 206h1v1h-1zM521 208h1v1h-1zM521 210h1v1h-1zM521 212h1v1h-1zM521 214h1v1h-1zM521 216h1v1h-1zM521 218h1v1h-1zM521 220h1v1h-1zM521 222h1v1h-1zM521 224h1v1h-1zM521 225h1v1h-1zM521 226h1v1h-1zM521 228h1v1h-1zM521 230h1v1h-1zM521 232h1v1h-1zM521 234h1v1h-1zM521 236h1v1h-1zM521 237h1v1h-1zM521 238h1v1h-1zM521 239h1v1h-1zM521 240h1v1h-1zM521 242h1v1h-1zM521 244h1v1h-1zM521 246h1v1h-1zM521 248h1v1h-1zM521 250h1v1h-1zM521 251h1v1h-1zM521 252h1v1h-1zM521 254h1v1h-1zM521 256h1v1h-1zM521 258h1v1h-1zM521 260h1v1h-1zM521 262h1v1h-1zM521 263h1v1h-1zM521 264h1v1h-1zM521 265h1v1h-1zM521 266h1v1h-1zM521 268h1v1h-1zM521 270h1v1h-1zM521 272h1v1h-1zM521 274h1v1h-1zM521 277h1v1h-1zM521 280h1v1h-1zM521 282h1v1h-1zM521 284h1v1h-1zM521 286h1v1h-1zM521 288h1v1h-1zM521 289h1v1h-1zM521 290h1v1h-1zM521 291h1v1h-1zM521 292h1v1h-1zM521 294h1v1h-1zM521 296h1v1h-1zM521 298h1v1h-1zM521 300h1v1h-1zM521 302h1v1h-1zM521 303h1v1h-1zM521 304h1v1h-1zM521 306h1v1h-1zM521 308h1v1h-1zM521 310h1v1h-1zM521 312h1v1h-1zM521 314h1v1h-1zM521 315h1v1h-1zM521 316h1v1h-1zM521 317h1v1h-1zM521 318h1v1h-1zM521 320h1v1h-1zM521 322h1v1h-1zM521 324h1v1h-1zM521 326h1v1h-1zM521 328h1v1h-1zM521 329h1v1h-1zM521 330h1v1h-1zM521 332h1v1h-1zM521 334h1v1h-1zM521 336h1v1h-1zM521 338h1v1h-1zM521 340h1v1h-1zM521 342h1v1h-1zM521 344h1v1h-1zM521 346h1v1h-1zM521 348h1v1h-1zM521 350h1v1h-1zM521 352h1v1h-1zM521 354h1v1h-1zM521 355h1v1h-1zM521 356h1v1h-1zM521 358h1v1h-1zM521 360h1v1h-1zM521 362h1v1h-1zM521 364h1v1h-1zM521 366h1v1h-1zM521 367h1v1h-1zM521 368h1v1h-1zM521 369h1v1h-1zM521 370h1v1h-1zM521 372h1v1h-1zM521 374h1v1h-1zM521 376h1v1h-1zM521 378h1v1h-1zM521 380h1v1h-1zM521 381h1v1h-1zM521 382h1v1h-1zM521 384h1v1h-1zM521 386h1v1h-1zM521 388h1v1h-1zM521 390h1v1h-1zM521 392h1v1h-1zM521 393h1v1h-1zM521 394h1v1h-1zM521 395h1v1h-1zM521 396h1v1h-1zM521 398h1v1h-1zM521 400h1v1h-1zM521 402h1v1h-1zM521 404h1v1h-1zM521 407h1v1h-1zM521 410h1v1h-1zM521 412h1v1h-1zM521 414h1v1h-1zM521 416h1v1h-1zM521 418h1v1h-1zM521 419h1v1h-1zM521 420h1v1h-1zM521 421h1v1h-1zM521 422h1v1h-1zM521 424h1v1h-1zM521 426h1v1h-1zM521 428h1v1h-1zM521 430h1v1h-1zM521 432h1v1h-1zM521 433h1v1h-1zM521 434h1v1h-1zM521 436h1v1h-1zM521 438h1v1h-1zM521 440h1v1h-1zM521 442h1v1h-1zM521 444h1v1h-1zM521 445h1v1h-1zM521 446h1v1h-1zM521 447h1v1h-1zM521 448h1v1h-1zM521 450h1v1h-1zM521 452h1v1h-1zM521 454h1v1h-1zM521 456h1v1h-1zM521 458h1v1h-1zM521 459h1v1h-1zM521 460h1v1h-1zM521 462h1v1h-1zM521 464h1v1h-1zM521 466h1v1h-1zM521 468h1v1h-1zM521 470h1v1h-1zM521 472h1v1h-1zM521 474h1v1h-1zM521 476h1v1h-1zM521 478h1v1h-1zM521 480h1v1h-1zM521 482h1v1h-1zM521 484h1v1h-1zM521 485h1v1h-1zM521 486h1v1h-1zM521 488h1v1h-1zM521 490h1v1h-1zM521 492h1v1h-1zM521 494h1v1h-1zM521 496h1v1h-1zM521 497h1v1h-1zM521 498h1v1h-1zM521 499h1v1h-1zM521 500h1v1h-1zM521 502h1v1h-1zM521 504h1v1h-1zM521 506h1v1h-1zM521 508h1v1h-1zM521 510h1v1h-1zM521 511h1v1h-1zM521 512h1v1h-1zM521 514h1v1h-1zM521 516h1v1h-1zM521 518h1v1h-1zM521 520h1v1h-1zM521 522h1v1h-1zM521 523h1v1h-1zM521 524h1v1h-1zM521 525h1v1h-1zM521 526h1v1h-1zM521 528h1v1h-1zM521 530h1v1h-1zM521 532h1v1h-1zM521 534h1v1h-1zM521 537h1v1h-1zM521 540h1v1h-1zM521 542h1v1h-1zM521 544h1v1h-1zM521 546h1v1h-1zM521 548h1v1h-1zM521 549h1v1h-1zM521 550h1v1h-1zM521 551h1v1h-1zM521 552h1v1h-1zM521 554h1v1h-1zM521 556h1v1h-1zM521 558h1v1h-1zM521 560h1v1h-1zM521 562h1v1h-1zM521 563h1v1h-1zM521 564h1v1h-1zM521 566h1v1h-1zM521 568h1v1h-1zM521 570h1v1h-1zM521 572h1v1h-1zM521 574h1v1h-1zM521 575h1v1h-1zM521 576h1v1h-1zM521 577h1v1h-1zM521 578h1v1h-1zM521 580h1v1h-1zM521 582h1v1h-1zM521 584h1v1h-1zM521 586h1v1h-1zM521 588h1v1h-1zM521 589h1v1h-1zM521 590h1v1h-1zM521 592h1v1h-1zM521 594h1v1h-1zM521 596h1v1h-1zM521 598h1v1h-1zM521 600h1v1h-1zM521 602h1v1h-1zM521 604h1v1h-1zM521 606h1v1h-1zM521 608h1v1h-1zM521 610h1v1h-1zM521 612h1v1h-1zM521 614h1v1h-1zM521 615h1v1h-1zM521 616h1v1h-1zM521 618h1v1h-1zM521 620h1v1h-1zM521 622h1v1h-1zM521 624h1v1h-1zM521 626h1v1h-1zM521 627h1v1h-1zM521 628h1v1h-1zM521 629h1v1h-1zM521 630h1v1h-1zM521 632h1v1h-1zM521 634h1v1h-1zM521 636h1v1h-1zM521 638h1v1h-1zM521 640h1v1h-1zM521 641h1v1h-1zM521 642h1v1h-1zM521 644h1v1h-1zM521 646h1v1h-1zM521 648h1v1h-1zM521 650h1v1h-1zM521 652h1v1h-1zM521 653h1v1h-1zM521 654h1v1h-1zM521 655h1v1h-1zM521 656h1v1h-1zM521 658h1v1h-1zM521 660h1v1h-1zM521 662h1v1h-1zM521 664h1v1h-1zM522 30h1v1h-1zM522 43h1v1h-1zM522 56h1v1h-1zM522 69h1v1h-1zM522 95h1v1h-1zM522 108h1v1h-1zM522 121h1v1h-1zM522 134h1v1h-1zM522 160h1v1h-1zM522 173h1v1h-1zM522 186h1v1h-1zM522 199h1v1h-1zM522 225h1v1h-1zM522 238h1v1h-1zM522 251h1v1h-1zM522 264h1v1h-1zM522 290h1v1h-1zM522 303h1v1h-1zM522 316h1v1h-1zM522 329h1v1h-1zM522 355h1v1h-1zM522 368h1v1h-1zM522 381h1v1h-1zM522 394h1v1h-1zM522 420h1v1h-1zM522 433h1v1h-1zM522 446h1v1h-1zM522 459h1v1h-1zM522 485h1v1h-1zM522 498h1v1h-1zM522 511h1v1h-1zM522 524h1v1h-1zM522 550h1v1h-1zM522 563h1v1h-1zM522 576h1v1h-1zM522 589h1v1h-1zM522 615h1v1h-1zM522 628h1v1h-1zM522 641h1v1h-1zM522 654h1v1h-1zM523 82h1v1h-1zM523 147h1v1h-1zM523 212h1v1h-1zM523 277h1v1h-1zM523 342h1v1h-1zM523 407h1v1h-1zM523 472h1v1h-1zM523 537h1v1h-1zM523 602h1v1h-1zM524 30h1v1h-1zM524 43h1v1h-1zM524 56h1v1h-1zM524 69h1v1h-1zM524 95h1v1h-1zM524 108h1v1h-1zM524 121h1v1h-1zM524 134h1v1h-1zM524 160h1v1h-1zM524 173h1v1h-1zM524 186h1v1h-1zM524 199h1v1h-1zM524 225h1v1h-1zM524 238h1v1h-1zM524 251h1v1h-1zM524 264h1v1h-1zM524 290h1v1h-1zM524 303h1v1h-1zM524 316h1v1h-1zM524 329h1v1h-1zM524 355h1v1h-1zM524 368h1v1h-1zM524 381h1v1h-1zM524 394h1v1h-1zM524 420h1v1h-1zM524 433h1v1h-1zM524 446h1v1h-1zM524 459h1v1h-1zM524 485h1v1h-1zM524 498h1v1h-1zM524 511h1v1h-1zM524 524h1v1h-1zM524 550h1v1h-1zM524 563h1v1h-1zM524 576h1v1h-1zM524 589h1v1h-1zM524 615h1v1h-1zM524 628h1v1h-1zM524 641h1v1h-1zM524 654h1v1h-1zM525 82h1v1h-1zM525 147h1v1h-1zM525 212h1v1h-1zM525 277h1v1h-1zM525 342h1v1h-1zM525 407h1v1h-1zM525 472h1v1h-1zM525 537h1v1h-1zM525 602h1v1h-1zM527 82h1v1h-1zM527 147h1v1h-1zM527 212h1v1h-1zM527 277h1v1h-1zM527 342h1v1h-1zM527 407h1v1h-1zM527 472h1v1h-1zM527 537h1v1h-1zM527 602h1v1h-1zM529 342h1v1h-1zM531 342h1v1h-1zM533 342h1v1h-1zM535 342h1v1h-1zM537 342h1v1h-1zM539 342h1v1h-1zM541 17h1v1h-1zM541 19h1v1h-1zM541 82h1v1h-1zM541 147h1v1h-1zM541 212h1v1h-1zM541 277h1v1h-1zM541 339h1v1h-1zM541 341h1v1h-1zM541 342h1v1h-1zM541 343h1v1h-1zM541 345h1v1h-1zM541 407h1v1h-1zM541 472h1v1h-1zM541 537h1v1h-1zM541 602h1v1h-1zM541 665h1v1h-1zM541 667h1v1h-1zM543 342h1v1h-1zM545 342h1v1h-1zM547 342h1v1h-1zM549 342h1v1h-1zM551 342h1v1h-1zM553 342h1v1h-1zM555 342h1v1h-1zM557 342h1v1h-1zM559 342h1v1h-1zM561 17h1v1h-1zM561 19h1v1h-1zM561 82h1v1h-1zM561 147h1v1h-1zM561 212h1v1h-1zM561 277h1v1h-1zM561 339h1v1h-1zM561 341h1v1h-1zM561 342h1v1h-1zM561 343h1v1h-1zM561 345h1v1h-1zM561 407h1v1h-1zM561 472h1v1h-1zM561 537h1v1h-1zM561 602h1v1h-1zM561 665h1v1h-1zM561 667h1v1h-1zM563 342h1v1h-1zM565 342h1v1h-1zM567 342h1v1h-1zM569 342h1v1h-1zM571 342h1v1h-1zM573 342h1v1h-1zM575 342h1v1h-1zM577 342h1v1h-1zM579 342h1v1h-1zM581 17h1v1h-1zM581 19h1v1h-1zM581 82h1v1h-1zM581 147h1v1h-1zM581 212h1v1h-1zM581 277h1v1h-1zM581 339h1v1h-1zM581 341h1v1h-1zM581 342h1v1h-1zM581 343h1v1h-1zM581 345h1v1h-1zM581 407h1v1h-1zM581 472h1v1h-1zM581 537h1v1h-1zM581 602h1v1h-1zM581 665h1v1h-1zM581 667h1v1h-1zM583 342h1v1h-1zM585 342h1v1h-1zM587 342h1v1h-1zM589 342h1v1h-1zM591 342h1v1h-1zM593 342h1v1h-1zM595 342h1v1h-1zM597 342h1v1h-1zM599 342h1v1h-1zM601 17h1v1h-1zM601 19h1v1h-1zM601 82h1v1h-1zM601 147h1v1h-1zM601 212h1v1h-1zM601 277h1v1h-1zM601 339h1v1h-1zM601 341h1v1h-1zM601 342h1v1h-1zM601 343h1v1h-1zM601 345h1v1h-1zM601 407h1v1h-1zM601 472h1v1h-1zM601 537h1v1h-1zM601 602h1v1h-1zM601 665h1v1h-1zM601 667h1v1h-1zM603 342h1v1h-1zM605 342h1v1h-1zM607 342h1v1h-1zM609 342h1v1h-1zM611 342h1v1h-1zM613 342h1v1h-1zM615 342h1v1h-1zM617 342h1v1h-1zM619 342h1v1h-1zM621 17h1v1h-1zM621 18h1v1h-1zM621 20h1v1h-1zM621 22h1v1h-1zM621 30h1v1h-1zM621 43h1v1h-1zM621 56h1v1h-1zM621 69h1v1h-1zM621 82h1v1h-1zM621 95h1v1h-1zM621 108h1v1h-1zM621 121h1v1h-1zM621 134h1v1h-1zM621 147h1v1h-1zM621 160h1v1h-1zM621 173h1v1h-1zM621 186h1v1h-1zM621 199h1v1h-1zM621 212h1v1h-1zM621 225h1v1h-1zM621 238h1v1h-1zM621 251h1v1h-1zM621 264h1v1h-1zM621 277h1v1h-1zM621 290h1v1h-1zM621 303h1v1h-1zM621 316h1v1h-1zM621 329h1v1h-1zM621 336h1v1h-1zM621 338h1v1h-1zM621 340h1v1h-1zM621 342h1v1h-1zM621 344h1v1h-1zM621 346h1v1h-1zM621 348h1v1h-1zM621 355h1v1h-1zM621 368h1v1h-1zM621 381h1v1h-1zM621 394h1v1h-1zM621 407h1v1h-1zM621 420h1v1h-1zM621 433h1v1h-1zM621 446h1v1h-1zM621 459h1v1h-1zM621 472h1v1h-1zM621 485h1v1h-1zM621 498h1v1h-1zM621 511h1v1h-1zM621 524h1v1h-1zM621 537h1v1h-1zM621 550h1v1h-1zM621 563h1v1h-1zM621 576h1v1h-1zM621 589h1v1h-1zM621 602h1v1h-1zM621 615h1v1h-1zM621 628h1v1h-1zM621 641h1v1h-1zM621 654h1v1h-1zM621 662h1v1h-1zM621 664h1v1h-1zM621 666h1v1h-1zM621 667h1v1h-1zM623 342h1v1h-1zM625 342h1v1h-1zM627 342h1v1h-1zM629 342h1v1h-1zM631 342h1v1h-1zM633 342h1v1h-1zM635 342h1v1h-1zM637 342h1v1h-1zM639 342h1v1h-1zM641 17h1v1h-1zM641 19h1v1h-1zM641 82h1v1h-1zM641 147h1v1h-1zM641 212h1v1h-1zM641 277h1v1h-1zM641 339h1v1h-1zM641 341h1v1h-1zM641 342h1v1h-1zM641 343h1v1h-1zM641 345h1v1h-1zM641 407h1v1h-1zM641 472h1v1h-1zM641 537h1v1h-1zM641 602h1v1h-1zM641 665h1v1h-1zM641 667h1v1h-1zM643 342h1v1h-1zM645 342h1v1h-1zM647 342h1v1h-1zM649 342h1v1h-1zM651 342h1v1h-1zM653 342h1v1h-1zM655 342h1v1h-1zM657 342h1v1h-1zM659 342h1v1h-1zM661 17h1v1h-1zM661 19h1v1h-1zM661 82h1v1h-1zM661 147h1v1h-1zM661 212h1v1h-1zM661 277h1v1h-1zM661 339h1v1h-1zM661 341h1v1h-1zM661 342h1v1h-1zM661 343h1v1h-1zM661 345h1v1h-1zM661 407h1v1h-1zM661 472h1v1h-1zM661 537h1v1h-1zM661 602h1v1h-1zM661 665h1v1h-1zM661 667h1v1h-1zM663 342h1v1h-1zM665 342h1v1h-1zM667 342h1v1h-1zM669 342h1v1h-1zM671 342h1v1h-1zM673 342h1v1h-1zM675 342h1v1h-1zM677 342h1v1h-1zM679 342h1v1h-1zM681 17h1v1h-1zM681 19h1v1h-1zM681 82h1v1h-1zM681 147h1v1h-1zM681 212h1v1h-1zM681 277h1v1h-1zM681 339h1v1h-1zM681 341h1v1h-1zM681 342h1v1h-1zM681 343h1v1h-1zM681 345h1v1h-1zM681 407h1v1h-1zM681 472h1v1h-1zM681 537h1v1h-1zM681 602h1v1h-1zM681 665h1v1h-1zM681 667h1v1h-1zM683 342h1v1h-1zM685 342h1v1h-1zM687 342h1v1h-1zM689 342h1v1h-1zM691 342h1v1h-1zM693 342h1v1h-1zM695 342h1v1h-1zM697 342h1v1h-1zM699 342h1v1h-1zM701 17h1v1h-1zM701 19h1v1h-1zM701 82h1v1h-1zM701 147h1v1h-1zM701 212h1v1h-1zM701 277h1v1h-1zM701 339h1v1h-1zM701 341h1v1h-1zM701 342h1v1h-1zM701 343h1v1h-1zM701 345h1v1h-1zM701 407h1v1h-1zM701 472h1v1h-1zM701 537h1v1h-1zM701 602h1v1h-1zM701 665h1v1h-1zM701 667h1v1h-1zM703 342h1v1h-1zM705 342h1v1h-1zM707 342h1v1h-1zM709 342h1v1h-1zM711 342h1v1h-1zM713 342h1v1h-1zM715 342h1v1h-1zM717 342h1v1h-1zM719 342h1v1h-1zM721 17h1v1h-1zM721 18h1v1h-1zM721 20h1v1h-1zM721 22h1v1h-1zM721 30h1v1h-1zM721 43h1v1h-1zM721 56h1v1h-1zM721 69h1v1h-1zM721 82h1v1h-1zM721 95h1v1h-1zM721 108h1v1h-1zM721 121h1v1h-1zM721 134h1v1h-1zM721 147h1v1h-1zM721 160h1v1h-1zM721 173h1v1h-1zM721 186h1v1h-1zM721 199h1v1h-1zM721 212h1v1h-1zM721 225h1v1h-1zM721 238h1v1h-1zM721 251h1v1h-1zM721 264h1v1h-1zM721 277h1v1h-1zM721 290h1v1h-1zM721 303h1v1h-1zM721 316h1v1h-1zM721 329h1v1h-1zM721 336h1v1h-1zM721 338h1v1h-1zM721 340h1v1h-1zM721 342h1v1h-1zM721 344h1v1h-1zM721 346h1v1h-1zM721 348h1v1h-1zM721 355h1v1h-1zM721 368h1v1h-1zM721 381h1v1h-1zM721 394h1v1h-1zM721 407h1v1h-1zM721 420h1v1h-1zM721 433h1v1h-1zM721 446h1v1h-1zM721 459h1v1h-1zM721 472h1v1h-1zM721 485h1v1h-1zM721 498h1v1h-1zM721 511h1v1h-1zM721 524h1v1h-1zM721 537h1v1h-1zM721 550h1v1h-1zM721 563h1v1h-1zM721 576h1v1h-1zM721 589h1v1h-1zM721 602h1v1h-1zM721 615h1v1h-1zM721 628h1v1h-1zM721 641h1v1h-1zM721 654h1v1h-1zM721 662h1v1h-1zM721 664h1v1h-1zM721 666h1v1h-1zM721 667h1v1h-1zM723 342h1v1h-1zM725 342h1v1h-1zM727 342h1v1h-1zM729 342h1v1h-1zM731 342h1v1h-1zM733 342h1v1h-1zM735 342h1v1h-1zM737 342h1v1h-1zM739 342h1v1h-1zM741 17h1v1h-1zM741 19h1v1h-1zM741 82h1v1h-1zM741 147h1v1h-1zM741 212h1v1h-1zM741 277h1v1h-1zM741 339h1v1h-1zM741 341h1v1h-1zM741 342h1v1h-1zM741 343h1v1h-1zM741 345h1v1h-1zM741 407h1v1h-1zM741 472h1v1h-1zM741 537h1v1h-1zM741 602h1v1h-1zM741 665h1v1h-1zM741 667h1v1h-1zM743 342h1v1h-1zM745 342h1v1h-1zM747 342h1v1h-1zM749 342h1v1h-1zM751 342h1v1h-1zM753 342h1v1h-1zM755 342h1v1h-1zM757 342h1v1h-1zM759 342h1v1h-1zM761 17h1v1h-1zM761 19h1v1h-1zM761 82h1v1h-1zM761 147h1v1h-1zM761 212h1v1h-1zM761 277h1v1h-1zM761 339h1v1h-1zM761 341h1v1h-1zM761 342h1v1h-1zM761 343h1v1h-1zM761 345h1v1h-1zM761 407h1v1h-1zM761 472h1v1h-1zM761 537h1v1h-1zM761 602h1v1h-1zM761 665h1v1h-1zM761 667h1v1h-1zM763 342h1v1h-1zM765 342h1v1h-1zM767 342h1v1h-1zM769 342h1v1h-1zM771 342h1v1h-1zM773 342h1v1h-1zM775 342h1v1h-1zM777 342h1v1h-1zM779 342h1v1h-1zM781 17h1v1h-1zM781 19h1v1h-1zM781 82h1v1h-1zM781 147h1v1h-1zM781 212h1v1h-1zM781 277h1v1h-1zM781 339h1v1h-1zM781 341h1v1h-1zM781 342h1v1h-1zM781 343h1v1h-1zM781 345h1v1h-1zM781 407h1v1h-1zM781 472h1v1h-1zM781 537h1v1h-1zM781 602h1v1h-1zM781 665h1v1h-1zM781 667h1v1h-1zM783 342h1v1h-1zM785 342h1v1h-1zM787 342h1v1h-1zM789 342h1v1h-1zM791 342h1v1h-1zM793 342h1v1h-1zM795 342h1v1h-1zM797 342h1v1h-1zM799 342h1v1h-1zM801 17h1v1h-1zM801 19h1v1h-1zM801 82h1v1h-1zM801 147h1v1h-1zM801 212h1v1h-1zM801 277h1v1h-1zM801 339h1v1h-1zM801 341h1v1h-1zM801 342h1v1h-1zM801 343h1v1h-1zM801 345h1v1h-1zM801 407h1v1h-1zM801 472h1v1h-1zM801 537h1v1h-1zM801 602h1v1h-1zM801 665h1v1h-1zM801 667h1v1h-1zM803 342h1v1h-1zM805 342h1v1h-1zM807 342h1v1h-1zM809 342h1v1h-1zM811 342h1v1h-1zM813 342h1v1h-1zM815 342h1v1h-1zM817 342h1v1h-1zM819 342h1v1h-1zM821 17h1v1h-1zM821 18h1v1h-1zM821 20h1v1h-1zM821 22h1v1h-1zM821 30h1v1h-1zM821 43h1v1h-1zM821 56h1v1h-1zM821 69h1v1h-1zM821 82h1v1h-1zM821 95h1v1h-1zM821 108h1v1h-1zM821 121h1v1h-1zM821 134h1v1h-1zM821 147h1v1h-1zM821 160h1v1h-1zM821 173h1v1h-1zM821 186h1v1h-1zM821 199h1v1h-1zM821 212h1v1h-1zM821 225h1v1h-1zM821 238h1v1h-1zM821 251h1v1h-1zM821 264h1v1h-1zM821 277h1v1h-1zM821 290h1v1h-1zM821 303h1v1h-1zM821 316h1v1h-1zM821 329h1v1h-1zM821 336h1v1h-1zM821 338h1v1h-1zM821 340h1v1h-1zM821 342h1v1h-1zM821 344h1v1h-1zM821 346h1v1h-1zM821 348h1v1h-1zM821 355h1v1h-1zM821 368h1v1h-1zM821 381h1v1h-1zM821 394h1v1h-1zM821 407h1v1h-1zM821 420h1v1h-1zM821 433h1v1h-1zM821 446h1v1h-1zM821 459h1v1h-1zM821 472h1v1h-1zM821 485h1v1h-1zM821 498h1v1h-1zM821 511h1v1h-1zM821 524h1v1h-1zM821 537h1v1h-1zM821 550h1v1h-1zM821 563h1v1h-1zM821 576h1v1h-1zM821 589h1v1h-1zM821 602h1v1h-1zM821 615h1v1h-1zM821 628h1v1h-1zM821 641h1v1h-1zM821 654h1v1h-1zM821 662h1v1h-1zM821 664h1v1h-1zM821 666h1v1h-1zM821 667h1v1h-1zM823 342h1v1h-1zM825 342h1v1h-1zM827 342h1v1h-1zM829 342h1v1h-1zM831 342h1v1h-1zM833 342h1v1h-1zM835 342h1v1h-1zM837 342h1v1h-1zM839 342h1v1h-1zM841 17h1v1h-1zM841 19h1v1h-1zM841 82h1v1h-1zM841 147h1v1h-1zM841 212h1v1h-1zM841 277h1v1h-1zM841 339h1v1h-1zM841 341h1v1h-1zM841 342h1v1h-1zM841 343h1v1h-1zM841 345h1v1h-1zM841 407h1v1h-1zM841 472h1v1h-1zM841 537h1v1h-1zM841 602h1v1h-1zM841 665h1v1h-1zM841 667h1v1h-1zM843 342h1v1h-1zM845 342h1v1h-1zM847 342h1v1h-1zM849 342h1v1h-1zM851 342h1v1h-1zM853 342h1v1h-1zM855 342h1v1h-1zM857 342h1v1h-1zM859 342h1v1h-1zM861 17h1v1h-1zM861 19h1v1h-1zM861 82h1v1h-1zM861 147h1v1h-1zM861 212h1v1h-1zM861 277h1v1h-1zM861 339h1v1h-1zM861 341h1v1h-1zM861 342h1v1h-1zM861 343h1v1h-1zM861 345h1v1h-1zM861 407h1v1h-1zM861 472h1v1h-1zM861 537h1v1h-1zM861 602h1v1h-1zM861 665h1v1h-1zM861 667h1v1h-1zM863 342h1v1h-1zM865 342h1v1h-1zM867 342h1v1h-1zM869 342h1v1h-1zM871 342h1v1h-1zM873 342h1v1h-1zM875 342h1v1h-1zM877 342h1v1h-1zM879 342h1v1h-1zM881 17h1v1h-1zM881 19h1v1h-1zM881 82h1v1h-1zM881 147h1v1h-1zM881 212h1v1h-1zM881 277h1v1h-1zM881 339h1v1h-1zM881 341h1v1h-1zM881 342h1v1h-1zM881 343h1v1h-1zM881 345h1v1h-1zM881 407h1v1h-1zM881 472h1v1h-1zM881 537h1v1h-1zM881 602h1v1h-1zM881 665h1v1h-1zM881 667h1v1h-1zM883 342h1v1h-1zM885 342h1v1h-1zM887 342h1v1h-1zM889 342h1v1h-1zM891 342h1v1h-1zM893 342h1v1h-1zM895 342h1v1h-1zM897 342h1v1h-1zM899 342h1v1h-1zM901 17h1v1h-1zM901 19h1v1h-1zM901 82h1v1h-1zM901 147h1v1h-1zM901 212h1v1h-1zM901 277h1v1h-1zM901 339h1v1h-1zM901 341h1v1h-1zM901 342h1v1h-1zM901 343h1v1h-1zM901 345h1v1h-1zM901 407h1v1h-1zM901 472h1v1h-1zM901 537h1v1h-1zM901 602h1v1h-1zM901 665h1v1h-1zM901 667h1v1h-1zM903 342h1v1h-1zM905 342h1v1h-1zM907 342h1v1h-1zM909 342h1v1h-1zM911 342h1v1h-1zM913 342h1v1h-1zM915 342h1v1h-1zM917 342h1v1h-1zM919 342h1v1h-1zM921 17h1v1h-1zM921 18h1v1h-1zM921 20h1v1h-1zM921 22h1v1h-1zM921 30h1v1h-1zM921 43h1v1h-1zM921 56h1v1h-1zM921 69h1v1h-1zM921 82h1v1h-1zM921 95h1v1h-1zM921 108h1v1h-1zM921 121h1v1h-1zM921 134h1v1h-1zM921 147h1v1h-1zM921 160h1v1h-1zM921 173h1v1h-1zM921 186h1v1h-1zM921 199h1v1h-1zM921 212h1v1h-1zM921 225h1v1h-1zM921 238h1v1h-1zM921 251h1v1h-1zM921 264h1v1h-1zM921 277h1v1h-1zM921 290h1v1h-1zM921 303h1v1h-1zM921 316h1v1h-1zM921 329h1v1h-1zM921 336h1v1h-1zM921 338h1v1h-1zM921 340h1v1h-1zM921 342h1v1h-1zM921 344h1v1h-1zM921 346h1v1h-1zM921 348h1v1h-1zM921 355h1v1h-1zM921 368h1v1h-1zM921 381h1v1h-1zM921 394h1v1h-1zM921 407h1v1h-1zM921 420h1v1h-1zM921 433h1v1h-1zM921 446h1v1h-1zM921 459h1v1h-1zM921 472h1v1h-1zM921 485h1v1h-1zM921 498h1v1h-1zM921 511h1v1h-1zM921 524h1v1h-1zM921 537h1v1h-1zM921 550h1v1h-1zM921 563h1v1h-1zM921 576h1v1h-1zM921 589h1v1h-1zM921 602h1v1h-1zM921 615h1v1h-1zM921 628h1v1h-1zM921 641h1v1h-1zM921 654h1v1h-1zM921 662h1v1h-1zM921 664h1v1h-1zM921 666h1v1h-1zM921 667h1v1h-1zM923 342h1v1h-1zM925 342h1v1h-1zM927 342h1v1h-1zM929 342h1v1h-1zM931 342h1v1h-1zM933 342h1v1h-1zM935 342h1v1h-1zM937 342h1v1h-1zM939 342h1v1h-1zM941 17h1v1h-1zM941 19h1v1h-1zM941 82h1v1h-1zM941 147h1v1h-1zM941 212h1v1h-1zM941 277h1v1h-1zM941 339h1v1h-1zM941 341h1v1h-1zM941 342h1v1h-1zM941 343h1v1h-1zM941 345h1v1h-1zM941 407h1v1h-1zM941 472h1v1h-1zM941 537h1v1h-1zM941 602h1v1h-1zM941 665h1v1h-1zM941 667h1v1h-1zM943 342h1v1h-1zM945 342h1v1h-1zM947 342h1v1h-1zM949 342h1v1h-1zM951 342h1v1h-1zM953 342h1v1h-1zM955 342h1v1h-1zM957 342h1v1h-1zM959 342h1v1h-1zM961 17h1v1h-1zM961 19h1v1h-1zM961 82h1v1h-1zM961 147h1v1h-1zM961 212h1v1h-1zM961 277h1v1h-1zM961 339h1v1h-1zM961 341h1v1h-1zM961 342h1v1h-1zM961 343h1v1h-1zM961 345h1v1h-1zM961 407h1v1h-1zM961 472h1v1h-1zM961 537h1v1h-1zM961 602h1v1h-1zM961 665h1v1h-1zM961 667h1v1h-1zM963 342h1v1h-1zM965 342h1v1h-1zM967 342h1v1h-1zM969 342h1v1h-1zM971 342h1v1h-1zM973 342h1v1h-1zM975 342h1v1h-1zM977 342h1v1h-1zM979 342h1v1h-1zM981 17h1v1h-1zM981 19h1v1h-1zM981 82h1v1h-1zM981 147h1v1h-1zM981 212h1v1h-1zM981 277h1v1h-1zM981 339h1v1h-1zM981 341h1v1h-1zM981 342h1v1h-1zM981 343h1v1h-1zM981 345h1v1h-1zM981 407h1v1h-1zM981 472h1v1h-1zM981 537h1v1h-1zM981 602h1v1h-1zM981 665h1v1h-1zM981 667h1v1h-1zM983 342h1v1h-1zM985 342h1v1h-1zM987 342h1v1h-1zM989 342h1v1h-1zM991 342h1v1h-1zM993 342h1v1h-1zM995 342h1v1h-1zM997 342h1v1h-1zM999 342h1v1h-1zM1001 17h1v1h-1zM1001 19h1v1h-1zM1001 82h1v1h-1zM1001 147h1v1h-1zM1001 212h1v1h-1zM1001 277h1v1h-1zM1001 339h1v1h-1zM1001 341h1v1h-1zM1001 342h1v1h-1zM1001 343h1v1h-1zM1001 345h1v1h-1zM1001 407h1v1h-1zM1001 472h1v1h-1zM1001 537h1v1h-1zM1001 602h1v1h-1zM1001 665h1v1h-1zM1001 667h1v1h-1zM1003 342h1v1h-1zM1005 342h1v1h-1zM1007 342h1v1h-1zM1009 342h1v1h-1zM1011 342h1v1h-1zM1013 342h1v1h-1zM1015 82h1v1h-1zM1015 147h1v1h-1zM1015 212h1v1h-1zM1015 277h1v1h-1zM1015 342h1v1h-1zM1015 407h1v1h-1zM1015 472h1v1h-1zM1015 537h1v1h-1zM1015 602h1v1h-1zM1017 82h1v1h-1zM1017 147h1v1h-1zM1017 212h1v1h-1zM1017 277h1v1h-1zM1017 342h1v1h-1zM1017 407h1v1h-1zM1017 472h1v1h-1zM1017 537h1v1h-1zM1017 602h1v1h-1zM1018 30h1v1h-1zM1018 43h1v1h-1zM1018 56h1v1h-1zM1018 69h1v1h-1zM1018 95h1v1h-1zM1018 108h1v1h-1zM1018 121h1v1h-1zM1018 134h1v1h-1zM1018 160h1v1h-1zM1018 173h1v1h-1zM1018 186h1v1h-1zM1018 199h1v1h-1zM1018 225h1v1h-1zM1018 238h1v1h-1zM1018 251h1v1h-1zM1018 264h1v1h-1zM1018 290h1v1h-1zM1018 303h1v1h-1zM1018 316h1v1h-1zM1018 329h1v1h-1zM1018 355h1v1h-1zM1018 368h1v1h-1zM1018 381h1v1h-1zM1018 394h1v1h-1zM1018 420h1v1h-1zM1018 433h1v1h-1zM1018 446h1v1h-1zM1018 459h1v1h-1zM1018 485h1v1h-1zM1018 498h1v1h-1zM1018 511h1v1h-1zM1018 524h1v1h-1zM1018 550h1v1h-1zM1018 563h1v1h-1zM1018 576h1v1h-1zM1018 589h1v1h-1zM1018 615h1v1h-1zM1018 628h1v1h-1zM1018 641h1v1h-1zM1018 654h1v1h-1zM1019 82h1v1h-1zM1019 147h1v1h-1zM1019 212h1v1h-1zM1019 277h1v1h-1zM1019 342h1v1h-1zM1019 407h1v1h-1zM1019 472h1v1h-1zM1019 537h1v1h-1zM1019 602h1v1h-1zM1020 30h1v1h-1zM1020 43h1v1h-1zM1020 56h1v1h-1zM1020 69h1v1h-1zM1020 95h1v1h-1zM1020 108h1v1h-1zM1020 121h1v1h-1zM1020 134h1v1h-1zM1020 160h1v1h-1zM1020 173h1v1h-1zM1020 186h1v1h-1zM1020 199h1v1h-1zM1020 225h1v1h-1zM1020 238h1v1h-1zM1020 251h1v1h-1zM1020 264h1v1h-1zM1020 290h1v1h-1zM1020 303h1v1h-1zM1020 316h1v1h-1zM1020 329h1v1h-1zM1020 355h1v1h-1zM1020 368h1v1h-1zM1020 381h1v1h-1zM1020 394h1v1h-1zM1020 420h1v1h-1zM1020 433h1v1h-1zM1020 446h1v1h-1zM1020 459h1v1h-1zM1020 485h1v1h-1zM1020 498h1v1h-1zM1020 511h1v1h-1zM1020 524h1v1h-1zM1020 550h1v1h-1zM1020 563h1v1h-1zM1020 576h1v1h-1zM1020 589h1v1h-1zM1020 615h1v1h-1zM1020 628h1v1h-1zM1020 641h1v1h-1zM1020 654h1v1h-1zM1021 82h1v1h-1zM1021 147h1v1h-1zM1021 212h1v1h-1zM1021 277h1v1h-1zM1021 407h1v1h-1zM1021 472h1v1h-1zM1021 537h1v1h-1zM1021 602h1v1h-1z' fill='#a89a78'/>
<path d='M516 17h11l-5.5 6z' fill='#ffa000'/>
<path d='M116 24h10l1 1v11l-1 1l-2 1l-2 1h-2l-2-1l-2-1l-1-1v-11z' fill='#ffa000'/>
<path d='M116.3 25.3h9.5v1.7h-3.8v9h-2v-9h-3.7z' fill='#000'/>
<path d='M0 334h12.5l7 8.3l-7 8h-12.5z' fill='#00e6e6'/>
<path d='M12.5 350.3l7-8l1 0.8l-7.5 8.5h-11.5v-1.3z' fill='#101010'/>
<path d='M1.5 334h11v1h-11z' fill='#c8e8f0'/>
<path d='M1010 332.5l5.5-5.5v11z' fill='#00e6e6'/><rect x='1015' y='332' width='6' height='1' fill='#00e6e6'/>
<rect x='20.5' y='652.5' width='554' height='20' rx='5' fill='#000' stroke='#d8d8d8' stroke-width='1'/>
<rect x='20.5' y='674.5' width='554' height='38' rx='5' fill='#000' stroke='#d8d8d8' stroke-width='1'/>
<rect x='584.5' y='670.5' width='147' height='37' rx='5' fill='#000' stroke='#d8d8d8' stroke-width='1'/>
<rect x='741.5' y='670.5' width='106' height='37' rx='5' fill='#000' stroke='#d8d8d8' stroke-width='1'/>
<rect x='857.5' y='670.5' width='164' height='37' rx='5' fill='#000' stroke='#d8d8d8' stroke-width='1'/>
<rect x='909.5' y='729.5' width='112' height='37' rx='5' fill='#000' stroke='#d8d8d8' stroke-width='1'/>
<rect x='589' y='691.6' width='12' height='11.7' rx='2' fill='#ffa000'/>
<path d='M590.5 693h9v2h-3.5v8h-2v-8h-3.5z' fill='#000'/>
<path d='M601.5 697h6v1.5h-6z M606.3 694.8l4.6 3l-4.6 3z' fill='#ffa000'/>
<path d='M612.6 694.2h10.4l-5.2 6.4z' fill='#ffa000'/>
<path d='M928 676.2h4.6l4.6 8.6h3' fill='none' stroke='#fff' stroke-width='1.9' stroke-linejoin='miter'/>
<path d='M0 714h11a6 6 0 0 1 6 6v48h-17z' fill='#00e6e6'/>
<rect x='21.5' y='715.5' width='113' height='56' rx='5' fill='#10122a'/>
<rect x='20' y='714' width='113' height='56' rx='5' fill='#9cc4ff'/>
<rect x='21' y='715' width='112' height='55' rx='4.5' fill='#5384e0'/>
<rect x='139.5' y='715.5' width='113' height='56' rx='5' fill='#10122a'/>
<rect x='138' y='714' width='113' height='56' rx='5' fill='#9cc4ff'/>
<rect x='139' y='715' width='112' height='55' rx='4.5' fill='#5384e0'/>
<rect x='257.5' y='715.5' width='113' height='56' rx='5' fill='#10122a'/>
<rect x='256' y='714' width='113' height='56' rx='5' fill='#9cc4ff'/>
<rect x='257' y='715' width='112' height='55' rx='4.5' fill='#5384e0'/>
<rect x='375.5' y='715.5' width='113' height='52' rx='5' fill='#10122a'/>
<rect x='374' y='714' width='113' height='52' rx='5' fill='#9cc4ff'/>
<rect x='375' y='715' width='112' height='51' rx='4.5' fill='#5384e0'/>
<rect x='493.5' y='715.5' width='113' height='52' rx='5' fill='#10122a'/>
<rect x='492' y='714' width='113' height='52' rx='5' fill='#9cc4ff'/>
<rect x='493' y='715' width='112' height='51' rx='4.5' fill='#5384e0'/>
<rect x='729.5' y='715.5' width='113' height='52' rx='5' fill='#10122a'/>
<rect x='728' y='714' width='113' height='52' rx='5' fill='#9cc4ff'/>
<rect x='729' y='715' width='112' height='51' rx='4.5' fill='#5384e0'/>
<ellipse cx='177.5' cy='662.6500000000001' rx='12.5' ry='8.050000000000011' fill='#00e6e6'/>
<ellipse cx='38.5' cy='702.7' rx='12.5' ry='7.900000000000034' fill='#00e6e6'/>
<ellipse cx='520.5' cy='740.9' rx='12.5' ry='7.899999999999977' fill='#00e6e6'/>
<ellipse cx='901.4' cy='681.2' rx='12.399999999999977' ry='7.800000000000011' fill='#00e6e6'/>
<rect x='24' y='738.5' width='30' height='25.3' rx='4' fill='#c8cdea'/>
<rect x='62' y='738.5' width='30' height='25.3' fill='#8a7e7c'/>
<rect x='202.2' y='738.5' width='41.8' height='25.3' rx='4' fill='#c8cdea'/>
<rect x='317' y='738.5' width='49.3' height='25.3' rx='4' fill='#c8cdea'/>
<rect x='403' y='741.9' width='56' height='15.8' fill='#c8cdea'/>
<path d='M115 745h2v7h6v2h-13v-2h5z M110 754l-4 6h2l4-6z M116 754l-4 6h2l4-6z M122 754l-4 6h2l4-6z' fill='#000'/>
<path d='M785.1 729l10.9 10.8h-22.3z' fill='#dfe3f4'/><path d='M777.5 737.3h15.8l0.6 2.5h-17z' fill='#8c8a8c'/>
<g opacity='0.999'><text transform='translate(-0.47 14.80) scale(0.8480 1)' font-family="'Liberation Serif'" font-weight='bold' font-size='20.62' fill='#000'>T</text>
<text transform='translate(8.50 14.80) scale(1.0927 1)' font-family="'Liberation Serif'" font-weight='bold' font-size='20.62' fill='#000'>e</text>
<text transform='translate(18.66 14.80) scale(1.0643 1)' font-family="'Liberation Serif'" font-weight='bold' font-size='20.62' fill='#000'>k</text>
<text transform='translate(34.48 13.10)' font-family="'Liberation Sans'" font-weight='normal' font-size='15.63' fill='#fff' stroke='#fff' stroke-width='0.45' letter-spacing='0.226'>Вып.</text>
<text transform='translate(924.89 12.80)' font-family="'Liberation Sans'" font-weight='normal' font-size='15.04' fill='#fff' stroke='#fff' stroke-width='0.35' letter-spacing='1.140'>С запуском</text>
<text transform='translate(207.01 667.80)' font-family="'Liberation Sans'" font-weight='normal' font-size='15.63' fill='#00e6e6' stroke='#00e6e6' stroke-width='0.32' letter-spacing='1.451'>500mB Ω</text>
<text transform='translate(157.01 690.00)' font-family="'Liberation Sans'" font-weight='normal' font-size='15.63' fill='#fff' stroke='#fff' stroke-width='0.32' letter-spacing='0.590'>Значение</text>
<text transform='translate(245.37 690.00)' font-family="'Liberation Sans'" font-weight='normal' font-size='15.63' fill='#fff' stroke='#fff' stroke-width='0.32' letter-spacing='1.036'>Среднее</text>
<text transform='translate(328.58 690.00)' font-family="'Liberation Sans'" font-weight='normal' font-size='15.63' fill='#fff' stroke='#fff' stroke-width='0.32' letter-spacing='1.609'>Миним.</text>
<text transform='translate(410.58 690.00)' font-family="'Liberation Sans'" font-weight='normal' font-size='15.63' fill='#fff' stroke='#fff' stroke-width='0.32' letter-spacing='1.196'>Макс.</text>
<text transform='translate(492.17 690.00)' font-family="'Liberation Sans'" font-weight='normal' font-size='15.63' fill='#fff' stroke='#fff' stroke-width='0.32' letter-spacing='1.797'>Ст. откл.</text>
<text transform='translate(56.10 707.90)' font-family="'Liberation Sans'" font-weight='normal' font-size='15.48' fill='#00e6e6' stroke='#00e6e6' stroke-width='0.32' letter-spacing='1.330'>Амплитуда</text>
<text transform='translate(158.17 707.90)' font-family="'Liberation Sans'" font-weight='normal' font-size='15.48' fill='#00e6e6' stroke='#00e6e6' stroke-width='0.32' letter-spacing='1.004'>2.02 В</text>
<text transform='translate(246.27 707.90)' font-family="'Liberation Sans'" font-weight='normal' font-size='15.48' fill='#00e6e6' stroke='#00e6e6' stroke-width='0.32' letter-spacing='1.008'>2.01</text>
<text transform='translate(329.43 707.90)' font-family="'Liberation Sans'" font-weight='normal' font-size='15.48' fill='#00e6e6' stroke='#00e6e6' stroke-width='0.32' letter-spacing='0.955'>1.96</text>
<text transform='translate(410.07 707.90)' font-family="'Liberation Sans'" font-weight='normal' font-size='15.48' fill='#00e6e6' stroke='#00e6e6' stroke-width='0.32' letter-spacing='1.328'>2.04</text>
<text transform='translate(493.03 707.90)' font-family="'Liberation Sans'" font-weight='normal' font-size='15.48' fill='#00e6e6' stroke='#00e6e6' stroke-width='0.32' letter-spacing='1.436'>13.6m</text>
<text transform='translate(589.76 685.80)' font-family="'Liberation Sans'" font-weight='normal' font-size='15.04' fill='#fff' stroke='#fff' stroke-width='0.32' letter-spacing='1.860'>40.0nc</text>
<text transform='translate(625.04 702.90)' font-family="'Liberation Sans'" font-weight='normal' font-size='15.33' fill='#ffa000' stroke='#ffa000' stroke-width='0.32' letter-spacing='1.509'>160.000nc</text>
<text transform='translate(747.07 686.10)' font-family="'Liberation Sans'" font-weight='normal' font-size='15.63' fill='#fff' stroke='#fff' stroke-width='0.32' letter-spacing='1.264'>2.50Gвыб/с</text>
<text transform='translate(748.06 702.80)' font-family="'Liberation Sans'" font-weight='normal' font-size='15.04' fill='#fff' stroke='#fff' stroke-width='0.32' letter-spacing='1.691'>10k точек</text>
<text transform='translate(953.33 685.70)' font-family="'Liberation Sans'" font-weight='normal' font-size='15.04' fill='#fff' stroke='#fff' stroke-width='0.32' letter-spacing='1.551'>80.0mB</text>
<text transform='translate(36.76 732.90)' font-family="'Liberation Sans'" font-weight='normal' font-size='15.63' fill='#000' stroke='#000' stroke-width='0.32' letter-spacing='1.071'>Тип входа</text>
<text transform='translate(28.33 757.00) scale(0.9437 1)' font-family="'Liberation Sans'" font-weight='normal' font-size='15.92' fill='#000' stroke='#000' stroke-width='0.32'>DC</text>
<text transform='translate(66.80 757.00)' font-family="'Liberation Sans'" font-weight='normal' font-size='15.92' fill='#56625a' stroke='#56625a' stroke-width='0.32' letter-spacing='-0.358'>AC</text>
<text transform='translate(149.17 732.90)' font-family="'Liberation Sans'" font-weight='normal' font-size='15.63' fill='#000' stroke='#000' stroke-width='0.32' letter-spacing='1.076'>Сопротивл.</text>
<text transform='translate(148.61 757.00)' font-family="'Liberation Sans'" font-weight='normal' font-size='15.92' fill='#000' stroke='#000' stroke-width='0.32' letter-spacing='1.173'>1MΩ</text>
<text transform='translate(207.00 757.00)' font-family="'Liberation Sans'" font-weight='normal' font-size='15.92' fill='#000' stroke='#000' stroke-width='0.32' letter-spacing='1.427'>50Ω</text>
<text transform='translate(274.48 732.90)' font-family="'Liberation Sans'" font-weight='normal' font-size='15.63' fill='#000' stroke='#000' stroke-width='0.32' letter-spacing='1.064'>Инверсия</text>
<text transform='translate(267.26 757.00)' font-family="'Liberation Sans'" font-weight='normal' font-size='15.92' fill='#000' stroke='#000' stroke-width='0.32' letter-spacing='1.071'>Вкл.</text>
<text transform='translate(321.76 757.00)' font-family="'Liberation Sans'" font-weight='normal' font-size='15.92' fill='#000' stroke='#000' stroke-width='0.32' letter-spacing='0.613'>Выкл</text>
<text transform='translate(379.79 737.90)' font-family="'Liberation Sans'" font-weight='normal' font-size='15.48' fill='#000' stroke='#000' stroke-width='0.32' letter-spacing='0.633'>Полоса проп.</text>
<text transform='translate(403.80 754.80)' font-family="'Liberation Sans'" font-weight='normal' font-size='15.33' fill='#000' stroke='#000' stroke-width='0.32' letter-spacing='0.323'>Полная</text>
<text transform='translate(539.79 745.90)' font-family="'Liberation Sans'" font-weight='normal' font-size='15.48' fill='#000' stroke='#000' stroke-width='0.32' letter-spacing='1.784'>Метка</text>
<text transform='translate(743.00 754.75)' font-family="'Liberation Sans'" font-weight='normal' font-size='15.04' fill='#000' stroke='#000' stroke-width='0.32' letter-spacing='1.895'>Дополнит.</text>
<text transform='translate(916.04 745.80)' font-family="'Liberation Sans'" font-weight='normal' font-size='15.33' fill='#fff' stroke='#fff' stroke-width='0.32' letter-spacing='0.996'>17 Июл 2009</text>
<text transform='translate(915.42 761.90)' font-family="'Liberation Sans'" font-weight='normal' font-size='15.33' fill='#fff' stroke='#fff' stroke-width='0.32' letter-spacing='1.459'>03:23:28</text>
<text transform='translate(173.47 667.80) scale(0.9967 1)' font-family="'Liberation Sans'" font-weight='normal' font-size='15.63' fill='#000' stroke='#000' stroke-width='0.6'>2</text>
<text transform='translate(33.69 707.80) scale(1.1948 1)' font-family="'Liberation Sans'" font-weight='normal' font-size='14.46' fill='#000' stroke='#000' stroke-width='0.6'>2</text>
<text transform='translate(515.92 745.80) scale(1.1279 1)' font-family="'Liberation Sans'" font-weight='normal' font-size='14.75' fill='#000' stroke='#000' stroke-width='0.6'>2</text>
<text transform='translate(897.75 685.30) scale(1.1527 1)' font-family="'Liberation Sans'" font-weight='normal' font-size='13.88' fill='#000' stroke='#000' stroke-width='0.6'>2</text>
<text transform='translate(4.06 747.90) scale(1.0393 1)' font-family="'Liberation Sans'" font-weight='normal' font-size='15.19' fill='#000' stroke='#000' stroke-width='0.6'>2</text>
<text transform='translate(3.30 347.70) scale(1.0023 1)' font-family="'Liberation Sans'" font-weight='normal' font-size='14.90' fill='#000' stroke='#000' stroke-width='0.6'>2</text></g>
</svg>
</body></html>
